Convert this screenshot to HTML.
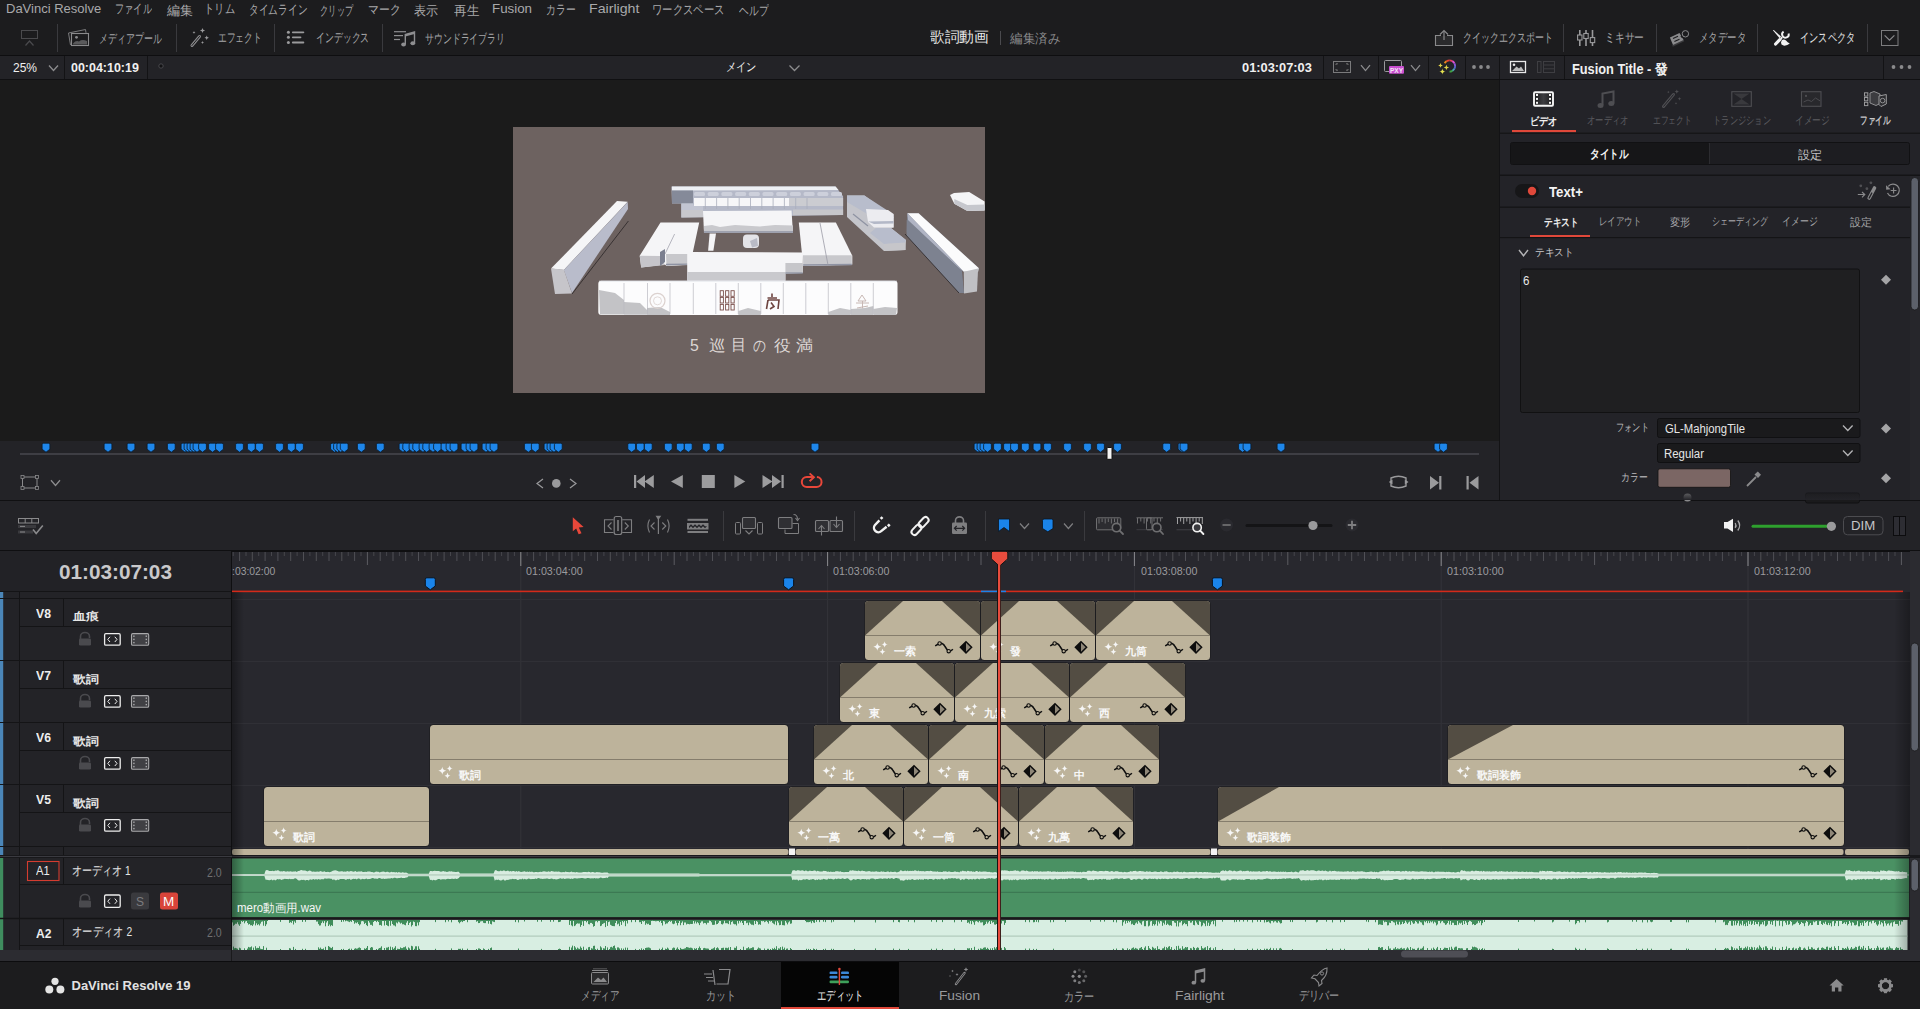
<!DOCTYPE html><html><head><meta charset="utf-8"><style>
*{margin:0;padding:0;box-sizing:border-box}
html,body{width:1920px;height:1009px;overflow:hidden;background:#1c1c1e;font-family:"Liberation Sans",sans-serif}
.a{position:absolute;display:block}
.t{position:absolute;white-space:nowrap;line-height:1;font-family:"Liberation Sans",sans-serif;transform-origin:0 0}
</style></head><body><div class="a" style="left:0px;top:0px;width:1920px;height:56px;background:#1c1c1e;"></div>
<div class="t" style="font-size:13px;color:#a9a9ab;left:6.00px;top:2.00px;">DaVinci Resolve</div>
<div class="t" style="font-size:13px;color:#a9a9ab;left:115.29px;top:2.00px;transform:scaleX(0.706);">ファイル</div>
<div class="t" style="font-size:13px;color:#a9a9ab;left:167.00px;top:4.00px;">編集</div>
<div class="t" style="font-size:13px;color:#a9a9ab;left:203.82px;top:2.00px;transform:scaleX(0.794);">トリム</div>
<div class="t" style="font-size:13px;color:#a9a9ab;left:248.51px;top:3.00px;transform:scaleX(0.747);">タイムライン</div>
<div class="t" style="font-size:13px;color:#a9a9ab;left:320.37px;top:4.00px;transform:scaleX(0.635);">クリップ</div>
<div class="t" style="font-size:13px;color:#a9a9ab;left:368.17px;top:3.00px;transform:scaleX(0.833);">マーク</div>
<div class="t" style="font-size:13px;color:#a9a9ab;left:414.00px;top:4.00px;transform:scaleX(0.923);">表示</div>
<div class="t" style="font-size:13px;color:#a9a9ab;left:454.00px;top:4.00px;transform:scaleX(0.962);">再生</div>
<div class="t" style="font-size:13px;color:#a9a9ab;left:491.97px;top:2.00px;transform:scaleX(1.026);">Fusion</div>
<div class="t" style="font-size:13px;color:#a9a9ab;left:546.24px;top:3.00px;transform:scaleX(0.757);">カラー</div>
<div class="t" style="font-size:13px;color:#a9a9ab;left:588.91px;top:2.00px;transform:scaleX(1.089);">Fairlight</div>
<div class="t" style="font-size:13px;color:#a9a9ab;left:652.20px;top:3.00px;transform:scaleX(0.798);">ワークスペース</div>
<div class="t" style="font-size:13px;color:#a9a9ab;left:739.00px;top:4.00px;transform:scaleX(0.750);">ヘルプ</div>
<div class="a" style="left:57px;top:24px;width:1px;height:28px;background:#3a3a3e;"></div>
<div class="a" style="left:176px;top:24px;width:1px;height:28px;background:#3a3a3e;"></div>
<div class="a" style="left:274px;top:24px;width:1px;height:28px;background:#3a3a3e;"></div>
<div class="a" style="left:382px;top:24px;width:1px;height:28px;background:#3a3a3e;"></div>
<div class="a" style="left:1563px;top:24px;width:1px;height:28px;background:#3a3a3e;"></div>
<div class="a" style="left:1656px;top:24px;width:1px;height:28px;background:#3a3a3e;"></div>
<div class="a" style="left:1757px;top:24px;width:1px;height:28px;background:#3a3a3e;"></div>
<div class="a" style="left:1867px;top:24px;width:1px;height:28px;background:#3a3a3e;"></div>
<div class="t" style="font-size:13px;color:#a6a6a8;left:99.31px;top:32.00px;transform:scaleX(0.689);">メディアプール</div>
<div class="t" style="font-size:13px;color:#a6a6a8;left:218.33px;top:31.00px;transform:scaleX(0.672);">エフェクト</div>
<div class="t" style="font-size:13px;color:#a6a6a8;left:316.32px;top:31.00px;transform:scaleX(0.684);">インデックス</div>
<div class="t" style="font-size:13px;color:#a6a6a8;left:425.00px;top:32.00px;transform:scaleX(0.684);">サウンドライブラリ</div>
<div class="t" style="font-size:13px;color:#a6a6a8;left:1463.31px;top:31.00px;transform:scaleX(0.690);">クイックエクスポート</div>
<div class="t" style="font-size:13px;color:#a6a6a8;left:1604.75px;top:31.00px;transform:scaleX(0.750);">ミキサー</div>
<div class="t" style="font-size:13px;color:#a6a6a8;left:1699.27px;top:31.00px;transform:scaleX(0.726);">メタデータ</div>
<div class="t" style="font-size:13px;color:#e6e6e6;left:1800.29px;top:31.00px;transform:scaleX(0.707);">インスペクタ</div>
<div class="t" style="font-size:15px;color:#e8e8e8;left:930.00px;top:29.00px;transform:scaleX(0.983);">歌詞動画</div>
<div class="a" style="left:1000px;top:31px;width:1px;height:14px;background:#4a4a4e;"></div>
<div class="t" style="font-size:13px;color:#8a8a8c;left:1010.00px;top:32.00px;transform:scaleX(0.962);">編集済み</div>
<div class="a" style="left:0px;top:55px;width:1920px;height:1px;background:#0e0e10;"></div>
<div class="a" style="left:0px;top:56px;width:1920px;height:23px;background:#232327;"></div>
<div class="a" style="left:0px;top:79px;width:1920px;height:1px;background:#101012;"></div>
<div class="a" style="left:64px;top:56px;width:1px;height:23px;background:#131315;"></div>
<div class="a" style="left:147px;top:56px;width:1px;height:23px;background:#131315;"></div>
<div class="a" style="left:1323px;top:56px;width:1px;height:23px;background:#131315;"></div>
<div class="a" style="left:1378px;top:56px;width:1px;height:23px;background:#131315;"></div>
<div class="a" style="left:1428px;top:56px;width:1px;height:23px;background:#131315;"></div>
<div class="a" style="left:1465px;top:56px;width:1px;height:23px;background:#131315;"></div>
<div class="a" style="left:1499px;top:56px;width:1px;height:23px;background:#131315;"></div>
<div class="a" style="left:1564px;top:56px;width:1px;height:23px;background:#131315;"></div>
<div class="a" style="left:1883px;top:56px;width:1px;height:23px;background:#131315;"></div>
<div class="t" style="font-size:13px;color:#f0f0f0;left:13.00px;top:61.00px;transform:scaleX(0.923);">25%</div>
<div class="t" style="font-size:13px;color:#f0f0f0;font-weight:bold;left:71.00px;top:61.00px;transform:scaleX(0.958);">00:04:10:19</div>
<div class="t" style="font-size:12px;color:#f0f0f0;left:726.15px;top:61.00px;transform:scaleX(0.853);">メイン</div>
<div class="t" style="font-size:13px;color:#f0f0f0;font-weight:bold;left:1242.00px;top:61.00px;transform:scaleX(0.986);">01:03:07:03</div>
<div class="t" style="font-size:14px;color:#f0f0f0;font-weight:bold;left:1572.09px;top:61.50px;transform:scaleX(0.913);">Fusion Title - 發</div>
<div class="a" style="left:0px;top:80px;width:1500px;height:361px;background:#1b1b1b;"></div>
<div class="a" style="left:513px;top:127px;width:472px;height:266px;background:#6d6260;"></div>
<div class="a" style="left:0px;top:441px;width:1500px;height:59px;background:#232327;"></div>
<div class="a" style="left:20px;top:453px;width:1459px;height:2px;background:#3e3e44;"></div>
<div class="a" style="left:1500px;top:80px;width:420px;height:420px;background:#232328;"></div>
<div class="a" style="left:0px;top:500px;width:1920px;height:1px;background:#101012;"></div>
<svg class="a" style="left:0;top:0" width="1920" height="1009" viewBox="0 0 1920 1009"><rect x="21.5" y="30.5" width="16" height="8" fill="none" stroke="#4a4a4d" stroke-width="1"/><polyline points="25.5,45.5 29.5,41 33.5,45.5" fill="none" stroke="#4a4a4d" stroke-width="1.2"/><path d="M68.5,33 L85.5,29.5 L86,32.8" fill="none" stroke="#7a7a7c" stroke-width="1"/><path d="M68.5,33 L70.5,45" fill="none" stroke="#7a7a7c" stroke-width="1"/><rect x="71.5" y="33.5" width="17" height="12" fill="#1c1c1e" stroke="#8a8a8c" stroke-width="1.1"/><circle cx="76.5" cy="37.3" r="1.4" fill="#8a8a8c"/><path d="M73,43.5 Q76,40 79,41.5 Q82,39 87,41 V44.5 H73Z" fill="#5a5a5c"/><line x1="192" y1="45.5" x2="199.5" y2="36.5" stroke="#8a8a8c" stroke-width="3" stroke-linecap="round"/><line x1="192" y1="45.5" x2="199.5" y2="36.5" stroke="#1c1c1e" stroke-width="1" stroke-linecap="round"/><path d="M202.5,27.9 Q202.7184,30.2816 205.1,30.5 Q202.7184,30.7184 202.5,33.1 Q202.2816,30.7184 199.9,30.5 Q202.2816,30.2816 202.5,27.9Z" fill="#9a9a9c"/><path d="M194,31.1 Q194.1176,32.3824 195.4,32.5 Q194.1176,32.6176 194,33.9 Q193.8824,32.6176 192.6,32.5 Q193.8824,32.3824 194,31.1Z" fill="#9a9a9c"/><path d="M206.7,35.5 Q206.88479999999998,37.5152 208.89999999999998,37.7 Q206.88479999999998,37.884800000000006 206.7,39.900000000000006 Q206.5152,37.884800000000006 204.5,37.7 Q206.5152,37.5152 206.7,35.5Z" fill="#9a9a9c"/><path d="M202.5,40.9 Q202.626,42.274 204.0,42.4 Q202.626,42.525999999999996 202.5,43.9 Q202.374,42.525999999999996 201.0,42.4 Q202.374,42.274 202.5,40.9Z" fill="#9a9a9c"/><circle cx="288.4" cy="32.3" r="1.5" fill="#9a9a9c"/><line x1="292.8" y1="32.3" x2="303.4" y2="32.3" stroke="#9a9a9c" stroke-width="1.8" stroke-linecap="round"/><circle cx="288.4" cy="37.3" r="1.5" fill="#9a9a9c"/><line x1="292.8" y1="37.3" x2="300.5" y2="37.3" stroke="#9a9a9c" stroke-width="1.8" stroke-linecap="round"/><circle cx="288.4" cy="42.5" r="1.5" fill="#9a9a9c"/><line x1="292.8" y1="42.5" x2="303.4" y2="42.5" stroke="#9a9a9c" stroke-width="1.8" stroke-linecap="round"/><line x1="394" y1="31.7" x2="406" y2="31.7" stroke="#8e8e90" stroke-width="1.2"/><line x1="394" y1="35.6" x2="403" y2="35.6" stroke="#8e8e90" stroke-width="1.2"/><line x1="394" y1="39.5" x2="400" y2="39.5" stroke="#8e8e90" stroke-width="1.2"/><path d="M405.3,44 V34.6 L414.5,32 V43" fill="none" stroke="#8e8e90" stroke-width="1.4"/><path d="M405.3,34.6 L414.5,32 V34 L405.3,36.6Z" fill="#8e8e90"/><ellipse cx="403.6" cy="44.4" rx="2.4" ry="2" fill="#8e8e90"/><ellipse cx="412.8" cy="43.2" rx="2.4" ry="2" fill="#8e8e90"/><rect x="1436" y="36" width="16" height="9" fill="#2a2a2c"/><line x1="1444" y1="31" x2="1444" y2="40" stroke="#8a8a8c" stroke-width="1.2"/><polyline points="1440,34.5 1444,30.5 1448,34.5" fill="none" stroke="#8a8a8c" stroke-width="1.2"/><path d="M1441,35.5 H1435.5 V45.5 H1452.5 V35.5 H1447" fill="none" stroke="#8a8a8c" stroke-width="1.1"/><line x1="1579.8" y1="30" x2="1579.8" y2="46" stroke="#9a9a9c" stroke-width="1.6"/><rect x="1577.6" y="35" width="4.4" height="5" fill="#1c1c1e" stroke="#9a9a9c" stroke-width="1.1"/><line x1="1586" y1="30" x2="1586" y2="46" stroke="#9a9a9c" stroke-width="1.6"/><rect x="1583.8" y="33.5" width="4.4" height="5" fill="#1c1c1e" stroke="#9a9a9c" stroke-width="1.1"/><line x1="1592.5" y1="30" x2="1592.5" y2="46" stroke="#9a9a9c" stroke-width="1.6"/><rect x="1590.3" y="37.6" width="4.4" height="5" fill="#1c1c1e" stroke="#9a9a9c" stroke-width="1.1"/><path d="M1672.5,46 L1684,40.5" stroke="#3a3a3c" stroke-width="1.5"/><polygon points="1669.9,37.4 1679.5,33.1 1683.6,40 1673,44.9" fill="#8a8a8c"/><path d="M1673,38.6 L1678,36.3 M1674.4,41.5 L1679.5,39.2" stroke="#1c1c1e" stroke-width="1.1"/><circle cx="1682.4" cy="36.3" r="1.6" fill="#1c1c1e"/><circle cx="1685.4" cy="33.8" r="3.2" fill="none" stroke="#8a8a8c" stroke-width="1"/><path d="M1772.9,30.2 L1773.8,30 L1781,36.6 L1779.6,38.2Z" fill="#f2f2f2"/><path d="M1780.3,38.6 L1781.6,37.4 L1782.6,38.5 L1781.3,39.7Z" fill="#f2f2f2"/><path d="M1781.8,40.2 Q1784,38.6 1786,40.6 Q1787.5,42.5 1789.8,43.6 Q1787,46 1783.5,45.6 Q1780.8,44.8 1781,42.5Z" fill="#f2f2f2"/><line x1="1775.6" y1="44" x2="1779.8" y2="39.6" stroke="#f2f2f2" stroke-width="3.2" stroke-linecap="round"/><line x1="1780.5" y1="38.6" x2="1782.5" y2="36.8" stroke="#f2f2f2" stroke-width="1.4"/><path d="M1783.6,31.6 A3.3,3.3 0 1 0 1788.6,33.4" fill="none" stroke="#f2f2f2" stroke-width="1.9"/><rect x="1881.5" y="30.5" width="16.5" height="15" fill="none" stroke="#7c7c7e" stroke-width="1"/><polyline points="1884.6,35.4 1889.5,40.2 1894.4,35.4" fill="none" stroke="#8a8a8c" stroke-width="1.2"/><polyline points="49,65.5 53.5,70.5 58,65.5" fill="none" stroke="#8c8c8e" stroke-width="1.3"/><circle cx="161" cy="66" r="2.2" fill="#121214" stroke="#48484c" stroke-width="1"/><polyline points="789.5,65.5 794.5,70.5 799.5,65.5" fill="none" stroke="#8c8c8e" stroke-width="1.3"/><rect x="1333.5" y="61.5" width="17" height="11" fill="none" stroke="#7a7a7c" stroke-width="1"/><path d="M1336,65 V63.8 H1338 M1346,63.8 H1348 V65 M1348,69 V70.2 H1346 M1338,70.2 H1336 V69" fill="none" stroke="#7a7a7c" stroke-width="0.9"/><polyline points="1361,65.2 1365.5,70.6 1370,65.2" fill="none" stroke="#8c8c8e" stroke-width="1.3"/><rect x="1384.5" y="60.5" width="17" height="11" rx="1" fill="none" stroke="#9a9a9c" stroke-width="1"/><rect x="1389" y="66" width="15" height="7.8" rx="1" fill="#c94fd0"/><text x="1396.5" y="72.6" font-size="6.5" font-weight="bold" text-anchor="middle" fill="#f4e8f6" font-family="Liberation Sans">PXY</text><polyline points="1411,65.2 1415.5,70.6 1420,65.2" fill="none" stroke="#8c8c8e" stroke-width="1.3"/><path d="M1444.65,63.20 A5.6,5.6 0 0 1 1446.70,61.15" fill="none" stroke="#e8841c" stroke-width="1.8"/><path d="M1446.70,61.15 A5.6,5.6 0 0 1 1449.50,60.40" fill="none" stroke="#e84030" stroke-width="1.8"/><path d="M1449.50,60.40 A5.6,5.6 0 0 1 1452.30,61.15" fill="none" stroke="#e04060" stroke-width="1.8"/><path d="M1452.30,61.15 A5.6,5.6 0 0 1 1454.35,63.20" fill="none" stroke="#e050d0" stroke-width="1.8"/><path d="M1454.35,63.20 A5.6,5.6 0 0 1 1455.10,66.00" fill="none" stroke="#9058d8" stroke-width="1.8"/><path d="M1455.10,66.00 A5.6,5.6 0 0 1 1454.35,68.80" fill="none" stroke="#5868d0" stroke-width="1.8"/><path d="M1454.35,68.80 A5.6,5.6 0 0 1 1452.30,70.85" fill="none" stroke="#50a8b0" stroke-width="1.8"/><path d="M1452.30,70.85 A5.6,5.6 0 0 1 1449.50,71.60" fill="none" stroke="#40a040" stroke-width="1.8"/><path d="M1440.5,63.10000000000001 Q1440.6932,65.2068 1442.8,65.4 Q1440.6932,65.59320000000001 1440.5,67.7 Q1440.3068,65.59320000000001 1438.2,65.4 Q1440.3068,65.2068 1440.5,63.10000000000001Z" fill="#e0d048"/><path d="M1446.4,64.7 Q1446.6268,67.17320000000001 1449.1000000000001,67.4 Q1446.6268,67.6268 1446.4,70.10000000000001 Q1446.1732000000002,67.6268 1443.7,67.4 Q1446.1732000000002,67.17320000000001 1446.4,64.7Z" fill="#e0d048"/><path d="M1442.4,68.4 Q1442.6604,71.2396 1445.5,71.5 Q1442.6604,71.7604 1442.4,74.6 Q1442.1396000000002,71.7604 1439.3000000000002,71.5 Q1442.1396000000002,71.2396 1442.4,68.4Z" fill="#e4e050"/><circle cx="1474" cy="67" r="1.9" fill="#8a8a8c"/><circle cx="1481" cy="67" r="1.9" fill="#8a8a8c"/><circle cx="1488" cy="67" r="1.9" fill="#8a8a8c"/><circle cx="1893.5" cy="67" r="1.9" fill="#8a8a8c"/><circle cx="1901.5" cy="67" r="1.9" fill="#8a8a8c"/><circle cx="1909.5" cy="67" r="1.9" fill="#8a8a8c"/><rect x="1510.5" y="61.5" width="15" height="11" fill="none" stroke="#e8e8e8" stroke-width="1.3"/><circle cx="1514" cy="64.8" r="1.3" fill="#e8e8e8"/><path d="M1512,71 L1516.5,66.5 L1519,68.5 L1521,66.5 L1524,71Z" fill="#bdbdbd"/><rect x="1537.5" y="61.5" width="3.5" height="11" fill="none" stroke="#3e3e42" stroke-width="1"/><rect x="1543.5" y="61.5" width="11" height="11" fill="none" stroke="#3e3e42" stroke-width="1"/><line x1="1543.5" y1="65" x2="1554.5" y2="65" stroke="#3e3e42"/><line x1="1543.5" y1="68.8" x2="1554.5" y2="68.8" stroke="#3e3e42"/></svg>
<svg class="a" style="left:0;top:0" width="1920" height="500" viewBox="0 0 1920 500"><polygon points="551,268.6 617,201 627.7,201.7 563.8,270" fill="#f5f5f7"/><polygon points="563.8,270 627.7,202 628,209 572,293" fill="#b9bccb"/><polygon points="551,268.6 563.8,269.5 572,293.5 555,294" fill="#c6c5ca"/><line x1="572" y1="294" x2="628.4" y2="221" stroke="#2a2426" stroke-width="0.8"/><polygon points="907.3,213.3 918.6,213.3 978.7,268.1 978.1,271.7 963.8,271.7 906.7,232.4" fill="#7d8290"/><polygon points="907.3,213.3 918.6,213.3 978.7,268.1 978.1,271.7 963.8,271.7 912,218" fill="#fbfbfc"/><polygon points="907.3,213.3 912,218 963.8,271.7 961,270 908,220" fill="#b0b4c4"/><polygon points="906.7,220 962,271 964,293 959,293 906.7,236" fill="#7d8290"/><polygon points="963.8,271.7 978.1,268.5 977,291.5 964,293.5" fill="#c0c0c4"/><line x1="905" y1="234" x2="959" y2="293" stroke="#2a2426" stroke-width="0.8"/><polygon points="671.4,186.5 835.5,186.5 843.1,196.3 843.1,214.9 681.3,217.6 681.3,203.4 672,203.4" fill="#b5b9c8"/><polygon points="672,186.5 835.5,186.5 838.5,190 672,190.5" fill="#eef0f4"/><polygon points="672,190.5 693,190.5 693,203.4 672,203.4" fill="#858a99"/><rect x="694.0" y="192" width="11" height="4" rx="1.5" fill="#cdd0db"/><rect x="707.7" y="192" width="11" height="4" rx="1.5" fill="#cdd0db"/><rect x="721.4" y="192" width="11" height="4" rx="1.5" fill="#cdd0db"/><rect x="735.1" y="192" width="11" height="4" rx="1.5" fill="#cdd0db"/><rect x="748.8" y="192" width="11" height="4" rx="1.5" fill="#cdd0db"/><rect x="762.5" y="192" width="11" height="4" rx="1.5" fill="#cdd0db"/><rect x="776.2" y="192" width="11" height="4" rx="1.5" fill="#cdd0db"/><rect x="789.9" y="192" width="11" height="4" rx="1.5" fill="#cdd0db"/><rect x="803.6" y="192" width="11" height="4" rx="1.5" fill="#cdd0db"/><rect x="817.3" y="192" width="11" height="4" rx="1.5" fill="#cdd0db"/><rect x="831.0" y="192" width="11" height="4" rx="1.5" fill="#cdd0db"/><polygon points="694,198 789,198 789,206 694,206" fill="#f6f6f8"/><polygon points="789,198 843.1,198 843.1,206 789,206" fill="#cbccd1"/><line x1="705.3" y1="198" x2="705.3" y2="209" stroke="#a9adbb" stroke-width="0.8"/><line x1="716.6" y1="198" x2="716.6" y2="209" stroke="#a9adbb" stroke-width="0.8"/><line x1="727.9" y1="198" x2="727.9" y2="209" stroke="#a9adbb" stroke-width="0.8"/><line x1="739.2" y1="198" x2="739.2" y2="209" stroke="#a9adbb" stroke-width="0.8"/><line x1="750.5" y1="198" x2="750.5" y2="209" stroke="#a9adbb" stroke-width="0.8"/><line x1="761.8" y1="198" x2="761.8" y2="209" stroke="#a9adbb" stroke-width="0.8"/><line x1="773.1" y1="198" x2="773.1" y2="209" stroke="#a9adbb" stroke-width="0.8"/><line x1="784.4" y1="198" x2="784.4" y2="209" stroke="#a9adbb" stroke-width="0.8"/><line x1="795.7" y1="198" x2="795.7" y2="209" stroke="#a9adbb" stroke-width="0.8"/><line x1="807.0" y1="198" x2="807.0" y2="209" stroke="#a9adbb" stroke-width="0.8"/><polygon points="681.3,203.4 693,203.4 694,206 703,206 703,210 681.3,210" fill="#c2c5d2"/><polygon points="681.3,210 703,210 703,217.3 681.3,217.6" fill="#c8c8cc"/><polygon points="793,209.5 843.1,209.5 843.1,214.9 793,215.3" fill="#c6c6ca"/><polygon points="703,211 791.5,210.5 793,232.9 704,232.9" fill="#f5f5f7"/><polygon points="704,226 712,225 720,227 735,225 760,226.5 775,225 793,225.5 793,232.9 704,232.9" fill="#c9c9cd"/><line x1="704" y1="232" x2="793" y2="232" stroke="#8f93a3" stroke-width="1.4"/><polygon points="660.5,222.4 699.2,222.4 690.2,264.6 666.5,266 665,264.6 641.2,267.6 639.7,255.7" fill="#f5f5f7"/><polygon points="639.7,255.7 660,256 665,265 641.2,267.6" fill="#c6c5ca"/><polygon points="666,254 689.4,254 689.4,265 666.5,266" fill="#c8c8cc"/><line x1="666" y1="264.5" x2="689.4" y2="264.2" stroke="#8f93a3" stroke-width="1.3"/><line x1="674.6" y1="234" x2="665" y2="254" stroke="#9a9aa6" stroke-width="0.7"/><polygon points="660,252 665,249 665,262 660,266" fill="#7c8090"/><polygon points="687.2,252 802.8,252.5 802.8,273 785.4,273.5 785.4,280.8 687.2,280.8" fill="#f5f5f7"/><polygon points="687.2,272 785.4,272 785.4,280.8 687.2,280.8" fill="#c9c9cd"/><polygon points="785.4,263 802.8,263 802.8,273 785.4,273.5" fill="#c6c6ca"/><line x1="785.4" y1="273" x2="802.8" y2="273" stroke="#8f93a3" stroke-width="1.3"/><polygon points="798.8,222.4 835.9,222.4 852.3,255.7 852.3,264.6 803.2,266" fill="#f5f5f7"/><polygon points="803,255.2 851.8,255.2 851.8,265 803.2,266" fill="#c8c8cc"/><line x1="803.2" y1="265" x2="851.8" y2="264.5" stroke="#8f93a3" stroke-width="1.3"/><line x1="820" y1="223" x2="828" y2="265" stroke="#9a9aa6" stroke-width="0.8"/><polygon points="847,195.5 864.4,195.5 893.6,216.9 893.6,227.6 891,228 906,240 905.5,250 884,251 847,217" fill="#c4c5cb"/><polygon points="847,195.5 864.4,195.5 893.6,214.5 893.6,218 874,218 847,202" fill="#b8bdcc"/><polygon points="866,209 888,210 893.6,214 893.6,227.6 874,227.5 868,222" fill="#ececf0"/><polygon points="868,221.5 893.6,221 893.6,223.5 874,224" fill="#b3b8c7"/><polygon points="876,228 891,228 906,240 905,243 884,244 870,233" fill="#b8bdcc"/><polygon points="884,244 905,242.5 905.5,250 884,251" fill="#c6c6ca"/><line x1="853" y1="214" x2="868" y2="226" stroke="#8e93a2" stroke-width="1.2"/><polygon points="950,195 954,193 969.2,192 984.6,201.4 984.6,210.4 967.4,211 954.3,203.8" fill="#f4f4f6"/><polygon points="954.3,199 967.4,205 984.6,204.5 984.6,210.4 967.4,211 954.3,203.8" fill="#c6c7cd"/><rect x="743" y="234.5" width="16" height="13.5" rx="4" fill="#e4e4e8"/><path d="M750,241 L757,238 L758,246 L752,247.5Z" fill="#b9bbc6"/><polygon points="709.6,233.4 716,233.4 713.4,250.8 708.1,250.8" fill="#f5f5f7"/><rect x="598.3" y="280.8" width="299.2" height="34.2" rx="3" fill="#fcfcfd"/><polygon points="599,290 615,293 624,300 624,314.5 600,314.5" fill="#c3c3c6"/><polygon points="624,302 640,303 647,310 647,314.8 624,314.8" fill="#c3c3c6"/><polygon points="647,308 660,307 670,312 670,315 647,315" fill="#c3c3c6"/><polygon points="738.3,311 748,308 760.8,311 760.8,315 738.3,315" fill="#c3c3c6"/><polygon points="828.3,312 840,308 850.8,310 850.8,315 828.3,315" fill="#c3c3c6"/><polygon points="850.8,309 865,308 873.3,306 873.3,315 850.8,315" fill="#c3c3c6"/><polygon points="873.3,309 885,307 897,308 896,315 873.3,315" fill="#c3c3c6"/><line x1="624" y1="283" x2="624" y2="314" stroke="#b9b9c0" stroke-width="0.7"/><line x1="647.5" y1="283" x2="647.5" y2="314" stroke="#b9b9c0" stroke-width="0.7"/><line x1="670" y1="283" x2="670" y2="314" stroke="#b9b9c0" stroke-width="0.7"/><line x1="693.3" y1="283" x2="693.3" y2="314" stroke="#b9b9c0" stroke-width="0.7"/><line x1="715.8" y1="283" x2="715.8" y2="314" stroke="#b9b9c0" stroke-width="0.7"/><line x1="738.3" y1="283" x2="738.3" y2="314" stroke="#b9b9c0" stroke-width="0.7"/><line x1="760.8" y1="283" x2="760.8" y2="314" stroke="#b9b9c0" stroke-width="0.7"/><line x1="783.3" y1="283" x2="783.3" y2="314" stroke="#b9b9c0" stroke-width="0.7"/><line x1="805.8" y1="283" x2="805.8" y2="314" stroke="#b9b9c0" stroke-width="0.7"/><line x1="828.3" y1="283" x2="828.3" y2="314" stroke="#b9b9c0" stroke-width="0.7"/><line x1="850.8" y1="283" x2="850.8" y2="314" stroke="#b9b9c0" stroke-width="0.7"/><line x1="873.3" y1="283" x2="873.3" y2="314" stroke="#b9b9c0" stroke-width="0.7"/><line x1="599" y1="281.2" x2="897" y2="281.2" stroke="#e1e3ea" stroke-width="0.8"/><circle cx="657.5" cy="300.8" r="7.5" fill="none" stroke="#dcd2cf" stroke-width="1.2"/><circle cx="657.5" cy="300.8" r="4" fill="none" stroke="#e2dad8" stroke-width="1"/><rect x="720.1999999999999" y="290.7" width="3.2" height="5.6" fill="none" stroke="#7a4e4a" stroke-width="0.9"/><rect x="720.1999999999999" y="297.4" width="3.2" height="5.6" fill="none" stroke="#7a4e4a" stroke-width="0.9"/><rect x="720.1999999999999" y="304.4" width="3.2" height="5.6" fill="none" stroke="#7a4e4a" stroke-width="0.9"/><rect x="725.6" y="290.7" width="3.2" height="5.6" fill="none" stroke="#7a4e4a" stroke-width="0.9"/><rect x="725.6" y="297.4" width="3.2" height="5.6" fill="none" stroke="#7a4e4a" stroke-width="0.9"/><rect x="725.6" y="304.4" width="3.2" height="5.6" fill="none" stroke="#7a4e4a" stroke-width="0.9"/><rect x="731.0" y="290.7" width="3.2" height="5.6" fill="none" stroke="#7a4e4a" stroke-width="0.9"/><rect x="731.0" y="297.4" width="3.2" height="5.6" fill="none" stroke="#7a4e4a" stroke-width="0.9"/><rect x="731.0" y="304.4" width="3.2" height="5.6" fill="none" stroke="#7a4e4a" stroke-width="0.9"/><path d="M772,293.5 V297 M767.5,298 H777 M768,300 L766.5,309 M768,300 H779 L778,309 M771,302.5 L774,306.5 L770,309" fill="none" stroke="#6e4440" stroke-width="1.6"/><path d="M862,295 L858,301 H866 Z M856,303 H869 M862.5,301 V308.3 M857,308 L868,306" fill="none" stroke="#c8b8b4" stroke-width="1"/></svg>
<div class="t" style="font-size:16px;color:#dcd6d4;left:689.51px;top:337.60px;transform:scaleX(0.987);font-family:"Liberation Serif",serif;">5</div>
<div class="t" style="font-size:16px;color:#dcd6d4;left:708.50px;top:337.80px;transform:scaleX(1.040);font-family:"Liberation Serif",serif;">巡</div>
<div class="t" style="font-size:16px;color:#dcd6d4;left:730.77px;top:337.00px;transform:scaleX(0.964);font-family:"Liberation Serif",serif;">目</div>
<div class="t" style="font-size:16px;color:#dcd6d4;left:753.40px;top:337.80px;transform:scaleX(0.806);font-family:"Liberation Serif",serif;">の</div>
<div class="t" style="font-size:16px;color:#dcd6d4;left:774.10px;top:337.50px;transform:scaleX(1.047);font-family:"Liberation Serif",serif;">役</div>
<div class="t" style="font-size:16px;color:#dcd6d4;left:796.00px;top:337.50px;transform:scaleX(1.067);font-family:"Liberation Serif",serif;">満</div>
<svg class="a" style="left:0;top:0" width="1920" height="1009" viewBox="0 0 1920 1009"><path d="M43.6,443.2 H48.4 Q49.9,443.2 49.9,444.7 V449.2 L46,452.2 L42.1,449.2 V444.7 Q42.1,443.2 43.6,443.2Z" fill="#1e86ea" stroke="#0b1a2a" stroke-width="0.8"/><path d="M105.6,443.2 H110.4 Q111.9,443.2 111.9,444.7 V449.2 L108,452.2 L104.1,449.2 V444.7 Q104.1,443.2 105.6,443.2Z" fill="#1e86ea" stroke="#0b1a2a" stroke-width="0.8"/><path d="M128.6,443.2 H133.4 Q134.9,443.2 134.9,444.7 V449.2 L131,452.2 L127.1,449.2 V444.7 Q127.1,443.2 128.6,443.2Z" fill="#1e86ea" stroke="#0b1a2a" stroke-width="0.8"/><path d="M148.6,443.2 H153.4 Q154.9,443.2 154.9,444.7 V449.2 L151,452.2 L147.1,449.2 V444.7 Q147.1,443.2 148.6,443.2Z" fill="#1e86ea" stroke="#0b1a2a" stroke-width="0.8"/><path d="M168.9,443.2 H173.70000000000002 Q175.20000000000002,443.2 175.20000000000002,444.7 V449.2 L171.3,452.2 L167.4,449.2 V444.7 Q167.4,443.2 168.9,443.2Z" fill="#1e86ea" stroke="#0b1a2a" stroke-width="0.8"/><path d="M182.6,443.2 H187.4 Q188.9,443.2 188.9,444.7 V449.2 L185,452.2 L181.1,449.2 V444.7 Q181.1,443.2 182.6,443.2Z" fill="#1e86ea" stroke="#0b1a2a" stroke-width="0.8"/><path d="M185.6,443.2 H190.4 Q191.9,443.2 191.9,444.7 V449.2 L188,452.2 L184.1,449.2 V444.7 Q184.1,443.2 185.6,443.2Z" fill="#1e86ea" stroke="#0b1a2a" stroke-width="0.8"/><path d="M188.6,443.2 H193.4 Q194.9,443.2 194.9,444.7 V449.2 L191,452.2 L187.1,449.2 V444.7 Q187.1,443.2 188.6,443.2Z" fill="#1e86ea" stroke="#0b1a2a" stroke-width="0.8"/><path d="M191.6,443.2 H196.4 Q197.9,443.2 197.9,444.7 V449.2 L194,452.2 L190.1,449.2 V444.7 Q190.1,443.2 191.6,443.2Z" fill="#1e86ea" stroke="#0b1a2a" stroke-width="0.8"/><path d="M194.6,443.2 H199.4 Q200.9,443.2 200.9,444.7 V449.2 L197,452.2 L193.1,449.2 V444.7 Q193.1,443.2 194.6,443.2Z" fill="#1e86ea" stroke="#0b1a2a" stroke-width="0.8"/><path d="M200.1,443.2 H204.9 Q206.4,443.2 206.4,444.7 V449.2 L202.5,452.2 L198.6,449.2 V444.7 Q198.6,443.2 200.1,443.2Z" fill="#1e86ea" stroke="#0b1a2a" stroke-width="0.8"/><path d="M210.1,443.2 H214.9 Q216.4,443.2 216.4,444.7 V449.2 L212.5,452.2 L208.6,449.2 V444.7 Q208.6,443.2 210.1,443.2Z" fill="#1e86ea" stroke="#0b1a2a" stroke-width="0.8"/><path d="M217.1,443.2 H221.9 Q223.4,443.2 223.4,444.7 V449.2 L219.5,452.2 L215.6,449.2 V444.7 Q215.6,443.2 217.1,443.2Z" fill="#1e86ea" stroke="#0b1a2a" stroke-width="0.8"/><path d="M237.1,443.2 H241.9 Q243.4,443.2 243.4,444.7 V449.2 L239.5,452.2 L235.6,449.2 V444.7 Q235.6,443.2 237.1,443.2Z" fill="#1e86ea" stroke="#0b1a2a" stroke-width="0.8"/><path d="M248.9,443.2 H253.70000000000002 Q255.20000000000002,443.2 255.20000000000002,444.7 V449.2 L251.3,452.2 L247.4,449.2 V444.7 Q247.4,443.2 248.9,443.2Z" fill="#1e86ea" stroke="#0b1a2a" stroke-width="0.8"/><path d="M257.1,443.2 H261.9 Q263.4,443.2 263.4,444.7 V449.2 L259.5,452.2 L255.6,449.2 V444.7 Q255.6,443.2 257.1,443.2Z" fill="#1e86ea" stroke="#0b1a2a" stroke-width="0.8"/><path d="M277.1,443.2 H281.9 Q283.4,443.2 283.4,444.7 V449.2 L279.5,452.2 L275.6,449.2 V444.7 Q275.6,443.2 277.1,443.2Z" fill="#1e86ea" stroke="#0b1a2a" stroke-width="0.8"/><path d="M288.90000000000003,443.2 H293.7 Q295.2,443.2 295.2,444.7 V449.2 L291.3,452.2 L287.40000000000003,449.2 V444.7 Q287.40000000000003,443.2 288.90000000000003,443.2Z" fill="#1e86ea" stroke="#0b1a2a" stroke-width="0.8"/><path d="M297.1,443.2 H301.9 Q303.4,443.2 303.4,444.7 V449.2 L299.5,452.2 L295.6,449.2 V444.7 Q295.6,443.2 297.1,443.2Z" fill="#1e86ea" stroke="#0b1a2a" stroke-width="0.8"/><path d="M332.1,443.2 H336.9 Q338.4,443.2 338.4,444.7 V449.2 L334.5,452.2 L330.6,449.2 V444.7 Q330.6,443.2 332.1,443.2Z" fill="#1e86ea" stroke="#0b1a2a" stroke-width="0.8"/><path d="M335.1,443.2 H339.9 Q341.4,443.2 341.4,444.7 V449.2 L337.5,452.2 L333.6,449.2 V444.7 Q333.6,443.2 335.1,443.2Z" fill="#1e86ea" stroke="#0b1a2a" stroke-width="0.8"/><path d="M338.40000000000003,443.2 H343.2 Q344.7,443.2 344.7,444.7 V449.2 L340.8,452.2 L336.90000000000003,449.2 V444.7 Q336.90000000000003,443.2 338.40000000000003,443.2Z" fill="#1e86ea" stroke="#0b1a2a" stroke-width="0.8"/><path d="M341.8,443.2 H346.59999999999997 Q348.09999999999997,443.2 348.09999999999997,444.7 V449.2 L344.2,452.2 L340.3,449.2 V444.7 Q340.3,443.2 341.8,443.2Z" fill="#1e86ea" stroke="#0b1a2a" stroke-width="0.8"/><path d="M358.90000000000003,443.2 H363.7 Q365.2,443.2 365.2,444.7 V449.2 L361.3,452.2 L357.40000000000003,449.2 V444.7 Q357.40000000000003,443.2 358.90000000000003,443.2Z" fill="#1e86ea" stroke="#0b1a2a" stroke-width="0.8"/><path d="M377.90000000000003,443.2 H382.7 Q384.2,443.2 384.2,444.7 V449.2 L380.3,452.2 L376.40000000000003,449.2 V444.7 Q376.40000000000003,443.2 377.90000000000003,443.2Z" fill="#1e86ea" stroke="#0b1a2a" stroke-width="0.8"/><path d="M400.6,443.2 H405.4 Q406.9,443.2 406.9,444.7 V449.2 L403,452.2 L399.1,449.2 V444.7 Q399.1,443.2 400.6,443.2Z" fill="#1e86ea" stroke="#0b1a2a" stroke-width="0.8"/><path d="M404.3,443.2 H409.09999999999997 Q410.59999999999997,443.2 410.59999999999997,444.7 V449.2 L406.7,452.2 L402.8,449.2 V444.7 Q402.8,443.2 404.3,443.2Z" fill="#1e86ea" stroke="#0b1a2a" stroke-width="0.8"/><path d="M410.6,443.2 H415.4 Q416.9,443.2 416.9,444.7 V449.2 L413,452.2 L409.1,449.2 V444.7 Q409.1,443.2 410.6,443.2Z" fill="#1e86ea" stroke="#0b1a2a" stroke-width="0.8"/><path d="M414.3,443.2 H419.09999999999997 Q420.59999999999997,443.2 420.59999999999997,444.7 V449.2 L416.7,452.2 L412.8,449.2 V444.7 Q412.8,443.2 414.3,443.2Z" fill="#1e86ea" stroke="#0b1a2a" stroke-width="0.8"/><path d="M420.6,443.2 H425.4 Q426.9,443.2 426.9,444.7 V449.2 L423,452.2 L419.1,449.2 V444.7 Q419.1,443.2 420.6,443.2Z" fill="#1e86ea" stroke="#0b1a2a" stroke-width="0.8"/><path d="M424.3,443.2 H429.09999999999997 Q430.59999999999997,443.2 430.59999999999997,444.7 V449.2 L426.7,452.2 L422.8,449.2 V444.7 Q422.8,443.2 424.3,443.2Z" fill="#1e86ea" stroke="#0b1a2a" stroke-width="0.8"/><path d="M430.6,443.2 H435.4 Q436.9,443.2 436.9,444.7 V449.2 L433,452.2 L429.1,449.2 V444.7 Q429.1,443.2 430.6,443.2Z" fill="#1e86ea" stroke="#0b1a2a" stroke-width="0.8"/><path d="M435.1,443.2 H439.9 Q441.4,443.2 441.4,444.7 V449.2 L437.5,452.2 L433.6,449.2 V444.7 Q433.6,443.2 435.1,443.2Z" fill="#1e86ea" stroke="#0b1a2a" stroke-width="0.8"/><path d="M442.6,443.2 H447.4 Q448.9,443.2 448.9,444.7 V449.2 L445,452.2 L441.1,449.2 V444.7 Q441.1,443.2 442.6,443.2Z" fill="#1e86ea" stroke="#0b1a2a" stroke-width="0.8"/><path d="M447.6,443.2 H452.4 Q453.9,443.2 453.9,444.7 V449.2 L450,452.2 L446.1,449.2 V444.7 Q446.1,443.2 447.6,443.2Z" fill="#1e86ea" stroke="#0b1a2a" stroke-width="0.8"/><path d="M451.6,443.2 H456.4 Q457.9,443.2 457.9,444.7 V449.2 L454,452.2 L450.1,449.2 V444.7 Q450.1,443.2 451.6,443.2Z" fill="#1e86ea" stroke="#0b1a2a" stroke-width="0.8"/><path d="M462.6,443.2 H467.4 Q468.9,443.2 468.9,444.7 V449.2 L465,452.2 L461.1,449.2 V444.7 Q461.1,443.2 462.6,443.2Z" fill="#1e86ea" stroke="#0b1a2a" stroke-width="0.8"/><path d="M467.6,443.2 H472.4 Q473.9,443.2 473.9,444.7 V449.2 L470,452.2 L466.1,449.2 V444.7 Q466.1,443.2 467.6,443.2Z" fill="#1e86ea" stroke="#0b1a2a" stroke-width="0.8"/><path d="M471.6,443.2 H476.4 Q477.9,443.2 477.9,444.7 V449.2 L474,452.2 L470.1,449.2 V444.7 Q470.1,443.2 471.6,443.2Z" fill="#1e86ea" stroke="#0b1a2a" stroke-width="0.8"/><path d="M483.6,443.2 H488.4 Q489.9,443.2 489.9,444.7 V449.2 L486,452.2 L482.1,449.2 V444.7 Q482.1,443.2 483.6,443.2Z" fill="#1e86ea" stroke="#0b1a2a" stroke-width="0.8"/><path d="M487.6,443.2 H492.4 Q493.9,443.2 493.9,444.7 V449.2 L490,452.2 L486.1,449.2 V444.7 Q486.1,443.2 487.6,443.2Z" fill="#1e86ea" stroke="#0b1a2a" stroke-width="0.8"/><path d="M491.6,443.2 H496.4 Q497.9,443.2 497.9,444.7 V449.2 L494,452.2 L490.1,449.2 V444.7 Q490.1,443.2 491.6,443.2Z" fill="#1e86ea" stroke="#0b1a2a" stroke-width="0.8"/><path d="M525.9,443.2 H530.6999999999999 Q532.1999999999999,443.2 532.1999999999999,444.7 V449.2 L528.3,452.2 L524.4,449.2 V444.7 Q524.4,443.2 525.9,443.2Z" fill="#1e86ea" stroke="#0b1a2a" stroke-width="0.8"/><path d="M532.9,443.2 H537.6999999999999 Q539.1999999999999,443.2 539.1999999999999,444.7 V449.2 L535.3,452.2 L531.4,449.2 V444.7 Q531.4,443.2 532.9,443.2Z" fill="#1e86ea" stroke="#0b1a2a" stroke-width="0.8"/><path d="M545.6,443.2 H550.4 Q551.9,443.2 551.9,444.7 V449.2 L548,452.2 L544.1,449.2 V444.7 Q544.1,443.2 545.6,443.2Z" fill="#1e86ea" stroke="#0b1a2a" stroke-width="0.8"/><path d="M548.6,443.2 H553.4 Q554.9,443.2 554.9,444.7 V449.2 L551,452.2 L547.1,449.2 V444.7 Q547.1,443.2 548.6,443.2Z" fill="#1e86ea" stroke="#0b1a2a" stroke-width="0.8"/><path d="M551.6,443.2 H556.4 Q557.9,443.2 557.9,444.7 V449.2 L554,452.2 L550.1,449.2 V444.7 Q550.1,443.2 551.6,443.2Z" fill="#1e86ea" stroke="#0b1a2a" stroke-width="0.8"/><path d="M555.9,443.2 H560.6999999999999 Q562.1999999999999,443.2 562.1999999999999,444.7 V449.2 L558.3,452.2 L554.4,449.2 V444.7 Q554.4,443.2 555.9,443.2Z" fill="#1e86ea" stroke="#0b1a2a" stroke-width="0.8"/><path d="M629.3000000000001,443.2 H634.1 Q635.6,443.2 635.6,444.7 V449.2 L631.7,452.2 L627.8000000000001,449.2 V444.7 Q627.8000000000001,443.2 629.3000000000001,443.2Z" fill="#1e86ea" stroke="#0b1a2a" stroke-width="0.8"/><path d="M637.9,443.2 H642.6999999999999 Q644.1999999999999,443.2 644.1999999999999,444.7 V449.2 L640.3,452.2 L636.4,449.2 V444.7 Q636.4,443.2 637.9,443.2Z" fill="#1e86ea" stroke="#0b1a2a" stroke-width="0.8"/><path d="M645.9,443.2 H650.6999999999999 Q652.1999999999999,443.2 652.1999999999999,444.7 V449.2 L648.3,452.2 L644.4,449.2 V444.7 Q644.4,443.2 645.9,443.2Z" fill="#1e86ea" stroke="#0b1a2a" stroke-width="0.8"/><path d="M665.9,443.2 H670.6999999999999 Q672.1999999999999,443.2 672.1999999999999,444.7 V449.2 L668.3,452.2 L664.4,449.2 V444.7 Q664.4,443.2 665.9,443.2Z" fill="#1e86ea" stroke="#0b1a2a" stroke-width="0.8"/><path d="M677.9,443.2 H682.6999999999999 Q684.1999999999999,443.2 684.1999999999999,444.7 V449.2 L680.3,452.2 L676.4,449.2 V444.7 Q676.4,443.2 677.9,443.2Z" fill="#1e86ea" stroke="#0b1a2a" stroke-width="0.8"/><path d="M685.9,443.2 H690.6999999999999 Q692.1999999999999,443.2 692.1999999999999,444.7 V449.2 L688.3,452.2 L684.4,449.2 V444.7 Q684.4,443.2 685.9,443.2Z" fill="#1e86ea" stroke="#0b1a2a" stroke-width="0.8"/><path d="M703.9,443.2 H708.6999999999999 Q710.1999999999999,443.2 710.1999999999999,444.7 V449.2 L706.3,452.2 L702.4,449.2 V444.7 Q702.4,443.2 703.9,443.2Z" fill="#1e86ea" stroke="#0b1a2a" stroke-width="0.8"/><path d="M717.9,443.2 H722.6999999999999 Q724.1999999999999,443.2 724.1999999999999,444.7 V449.2 L720.3,452.2 L716.4,449.2 V444.7 Q716.4,443.2 717.9,443.2Z" fill="#1e86ea" stroke="#0b1a2a" stroke-width="0.8"/><path d="M812.6,443.2 H817.4 Q818.9,443.2 818.9,444.7 V449.2 L815,452.2 L811.1,449.2 V444.7 Q811.1,443.2 812.6,443.2Z" fill="#1e86ea" stroke="#0b1a2a" stroke-width="0.8"/><path d="M975.6,443.2 H980.4 Q981.9,443.2 981.9,444.7 V449.2 L978,452.2 L974.1,449.2 V444.7 Q974.1,443.2 975.6,443.2Z" fill="#1e86ea" stroke="#0b1a2a" stroke-width="0.8"/><path d="M978.6,443.2 H983.4 Q984.9,443.2 984.9,444.7 V449.2 L981,452.2 L977.1,449.2 V444.7 Q977.1,443.2 978.6,443.2Z" fill="#1e86ea" stroke="#0b1a2a" stroke-width="0.8"/><path d="M981.6,443.2 H986.4 Q987.9,443.2 987.9,444.7 V449.2 L984,452.2 L980.1,449.2 V444.7 Q980.1,443.2 981.6,443.2Z" fill="#1e86ea" stroke="#0b1a2a" stroke-width="0.8"/><path d="M985.1,443.2 H989.9 Q991.4,443.2 991.4,444.7 V449.2 L987.5,452.2 L983.6,449.2 V444.7 Q983.6,443.2 985.1,443.2Z" fill="#1e86ea" stroke="#0b1a2a" stroke-width="0.8"/><path d="M995.1,443.2 H999.9 Q1001.4,443.2 1001.4,444.7 V449.2 L997.5,452.2 L993.6,449.2 V444.7 Q993.6,443.2 995.1,443.2Z" fill="#1e86ea" stroke="#0b1a2a" stroke-width="0.8"/><path d="M1005.1,443.2 H1009.9 Q1011.4,443.2 1011.4,444.7 V449.2 L1007.5,452.2 L1003.6,449.2 V444.7 Q1003.6,443.2 1005.1,443.2Z" fill="#1e86ea" stroke="#0b1a2a" stroke-width="0.8"/><path d="M1012.1,443.2 H1016.9 Q1018.4,443.2 1018.4,444.7 V449.2 L1014.5,452.2 L1010.6,449.2 V444.7 Q1010.6,443.2 1012.1,443.2Z" fill="#1e86ea" stroke="#0b1a2a" stroke-width="0.8"/><path d="M1022.9,443.2 H1027.7 Q1029.2,443.2 1029.2,444.7 V449.2 L1025.3,452.2 L1021.4,449.2 V444.7 Q1021.4,443.2 1022.9,443.2Z" fill="#1e86ea" stroke="#0b1a2a" stroke-width="0.8"/><path d="M1034.6,443.2 H1039.4 Q1040.9,443.2 1040.9,444.7 V449.2 L1037,452.2 L1033.1,449.2 V444.7 Q1033.1,443.2 1034.6,443.2Z" fill="#1e86ea" stroke="#0b1a2a" stroke-width="0.8"/><path d="M1045.1,443.2 H1049.9 Q1051.4,443.2 1051.4,444.7 V449.2 L1047.5,452.2 L1043.6,449.2 V444.7 Q1043.6,443.2 1045.1,443.2Z" fill="#1e86ea" stroke="#0b1a2a" stroke-width="0.8"/><path d="M1065.1,443.2 H1069.9 Q1071.4,443.2 1071.4,444.7 V449.2 L1067.5,452.2 L1063.6,449.2 V444.7 Q1063.6,443.2 1065.1,443.2Z" fill="#1e86ea" stroke="#0b1a2a" stroke-width="0.8"/><path d="M1085.1,443.2 H1089.9 Q1091.4,443.2 1091.4,444.7 V449.2 L1087.5,452.2 L1083.6,449.2 V444.7 Q1083.6,443.2 1085.1,443.2Z" fill="#1e86ea" stroke="#0b1a2a" stroke-width="0.8"/><path d="M1098.1,443.2 H1102.9 Q1104.4,443.2 1104.4,444.7 V449.2 L1100.5,452.2 L1096.6,449.2 V444.7 Q1096.6,443.2 1098.1,443.2Z" fill="#1e86ea" stroke="#0b1a2a" stroke-width="0.8"/><path d="M1115.1,443.2 H1119.9 Q1121.4,443.2 1121.4,444.7 V449.2 L1117.5,452.2 L1113.6,449.2 V444.7 Q1113.6,443.2 1115.1,443.2Z" fill="#1e86ea" stroke="#0b1a2a" stroke-width="0.8"/><path d="M1164.3,443.2 H1169.1000000000001 Q1170.6000000000001,443.2 1170.6000000000001,444.7 V449.2 L1166.7,452.2 L1162.8,449.2 V444.7 Q1162.8,443.2 1164.3,443.2Z" fill="#1e86ea" stroke="#0b1a2a" stroke-width="0.8"/><path d="M1179.6,443.2 H1184.4 Q1185.9,443.2 1185.9,444.7 V449.2 L1182,452.2 L1178.1,449.2 V444.7 Q1178.1,443.2 1179.6,443.2Z" fill="#1e86ea" stroke="#0b1a2a" stroke-width="0.8"/><path d="M1181.6,443.2 H1186.4 Q1187.9,443.2 1187.9,444.7 V449.2 L1184,452.2 L1180.1,449.2 V444.7 Q1180.1,443.2 1181.6,443.2Z" fill="#1e86ea" stroke="#0b1a2a" stroke-width="0.8"/><path d="M1240.1,443.2 H1244.9 Q1246.4,443.2 1246.4,444.7 V449.2 L1242.5,452.2 L1238.6,449.2 V444.7 Q1238.6,443.2 1240.1,443.2Z" fill="#1e86ea" stroke="#0b1a2a" stroke-width="0.8"/><path d="M1244.6,443.2 H1249.4 Q1250.9,443.2 1250.9,444.7 V449.2 L1247,452.2 L1243.1,449.2 V444.7 Q1243.1,443.2 1244.6,443.2Z" fill="#1e86ea" stroke="#0b1a2a" stroke-width="0.8"/><path d="M1278.6,443.2 H1283.4 Q1284.9,443.2 1284.9,444.7 V449.2 L1281,452.2 L1277.1,449.2 V444.7 Q1277.1,443.2 1278.6,443.2Z" fill="#1e86ea" stroke="#0b1a2a" stroke-width="0.8"/><path d="M1435.6,443.2 H1440.4 Q1441.9,443.2 1441.9,444.7 V449.2 L1438,452.2 L1434.1,449.2 V444.7 Q1434.1,443.2 1435.6,443.2Z" fill="#1e86ea" stroke="#0b1a2a" stroke-width="0.8"/><path d="M1441.1,443.2 H1445.9 Q1447.4,443.2 1447.4,444.7 V449.2 L1443.5,452.2 L1439.6,449.2 V444.7 Q1439.6,443.2 1441.1,443.2Z" fill="#1e86ea" stroke="#0b1a2a" stroke-width="0.8"/><rect x="1107" y="447.5" width="5" height="11.8" rx="0.8" fill="#f4f4f4" stroke="#101010" stroke-width="1"/><rect x="634" y="475" width="2.2" height="13" fill="#9c9c9e"/><path d="M636.5,481.5 L645,475 V488Z M644.5,481.5 L653.8,475 V488Z" fill="#9c9c9e"/><path d="M671,481.5 L682.8,475 V488Z" fill="#9c9c9e"/><rect x="701.8" y="475" width="13" height="13" fill="#9c9c9e"/><path d="M745.3,481.5 L734.4,475 V488Z" fill="#9c9c9e"/><rect x="781.5" y="475" width="2.2" height="13" fill="#9c9c9e"/><path d="M781,481.5 L772,475 V488Z M772.5,481.5 L762.5,475 V488Z" fill="#9c9c9e"/><path d="M816.9,477 A5,5 0 0 1 816.2,487 H806.8 A5,5 0 0 1 806.8,477 H813.6" fill="none" stroke="#e8473a" stroke-width="2"/><polyline points="809.6,473.4 813.9,477.2 809.6,481.2" fill="none" stroke="#e8473a" stroke-width="1.9"/><rect x="22.5" y="477" width="14.5" height="11" fill="none" stroke="#8a8a8c" stroke-width="1"/><rect x="21.0" y="475.5" width="3" height="3" fill="#232327" stroke="#8a8a8c" stroke-width="0.8"/><rect x="35.5" y="475.5" width="3" height="3" fill="#232327" stroke="#8a8a8c" stroke-width="0.8"/><rect x="21.0" y="486.5" width="3" height="3" fill="#232327" stroke="#8a8a8c" stroke-width="0.8"/><rect x="35.5" y="486.5" width="3" height="3" fill="#232327" stroke="#8a8a8c" stroke-width="0.8"/><polyline points="51,480.3 55.5,485.5 60,480.3" fill="none" stroke="#8c8c8e" stroke-width="1.3"/><polyline points="543,479 537,483.5 543,488" fill="none" stroke="#9a9a9c" stroke-width="1.2"/><circle cx="556.3" cy="483.4" r="4.3" fill="#9a9a9c"/><polyline points="570,479 576,483.5 570,488" fill="none" stroke="#9a9a9c" stroke-width="1.2"/><path d="M1391,478 Q1398.5,474.5 1406,478 V486 Q1398.5,489.5 1391,486Z" fill="none" stroke="#9a9a9c" stroke-width="1.4"/><path d="M1388.8,482 L1392.5,479.5 V484.5Z M1408.5,482 L1404.8,479.5 V484.5Z" fill="#9a9a9c"/><path d="M1430,476 L1439,482.7 L1430,489.5Z" fill="#9a9a9c"/><rect x="1439.2" y="476" width="2.2" height="13.5" fill="#9a9a9c"/><path d="M1478.5,476 L1469.5,482.7 L1478.5,489.5Z" fill="#9a9a9c"/><rect x="1466.5" y="476" width="2.2" height="13.5" fill="#9a9a9c"/></svg>
<div class="a" style="left:0px;top:501px;width:1920px;height:50px;background:#232327;"></div>
<div class="a" style="left:0px;top:550px;width:1920px;height:1px;background:#0f0f11;"></div>
<div class="a" style="left:723px;top:511px;width:1px;height:30px;background:#3a3a3e;"></div>
<div class="a" style="left:854px;top:511px;width:1px;height:30px;background:#3a3a3e;"></div>
<div class="a" style="left:985px;top:511px;width:1px;height:30px;background:#3a3a3e;"></div>
<div class="a" style="left:1084px;top:511px;width:1px;height:30px;background:#3a3a3e;"></div>
<div class="t" style="font-size:12px;color:#c6c6c8;left:1850.90px;top:520.20px;transform:scaleX(1.100);">DIM</div>
<svg class="a" style="left:0;top:0" width="1920" height="1009" viewBox="0 0 1920 1009"><rect x="18.5" y="518.5" width="20" height="4.5" fill="none" stroke="#8a8a8c" stroke-width="1"/><line x1="25.2" y1="518.5" x2="25.2" y2="523" stroke="#8a8a8c"/><line x1="31.8" y1="518.5" x2="31.8" y2="523" stroke="#8a8a8c"/><rect x="18" y="525" width="18" height="3" fill="#3a3a3e"/><rect x="18" y="530.5" width="15" height="3" fill="#3a3a3e"/><line x1="20" y1="526.4" x2="25" y2="526.4" stroke="#8a8a8c"/><line x1="20" y1="532" x2="25" y2="532" stroke="#8a8a8c"/><polyline points="33,529.5 36.2,533.5 42.8,525.5" fill="none" stroke="#8a8a8c" stroke-width="1.6"/><path d="M572.8,517.2 L583.6,527 L578.8,527.6 L581.5,533.2 L578.6,534.2 L576.2,528.6 L572.8,531.2Z" fill="#e8473a"/><path d="M613.5,519.8 H604.5 V532.5 H613.5 M622.2,519.8 H631.5 V532.5 H622.2" fill="none" stroke="#7e7e80" stroke-width="1.1"/><rect x="614.2" y="516.5" width="7.5" height="18" rx="2" fill="none" stroke="#7e7e80" stroke-width="1.2"/><line x1="618" y1="520" x2="618" y2="531" stroke="#7e7e80" stroke-width="1.6"/><polyline points="611.5,522.5 608,526 611.5,529.5" fill="none" stroke="#7e7e80" stroke-width="1.1"/><polyline points="624.8,522.5 628.3,526 624.8,529.5" fill="none" stroke="#7e7e80" stroke-width="1.1"/><path d="M649.5,519.5 Q646.3,526 649.5,532.5 M667.5,519.5 Q670.7,526 667.5,532.5" fill="none" stroke="#7e7e80" stroke-width="1.1"/><line x1="658.4" y1="518" x2="658.4" y2="534" stroke="#7e7e80" stroke-width="1.2"/><path d="M655.5,515.8 H661.3 L658.4,520Z" fill="#7e7e80"/><polyline points="654.5,522.5 651,526 654.5,529.5" fill="none" stroke="#7e7e80" stroke-width="1.1"/><polyline points="662.3,522.5 665.8,526 662.3,529.5" fill="none" stroke="#7e7e80" stroke-width="1.1"/><rect x="687.5" y="518.8" width="20.5" height="2" fill="#7e7e80"/><rect x="687.5" y="531" width="20.5" height="2" fill="#7e7e80"/><path d="M687,523 H708.5 V529.5 H687Z" fill="#7e7e80"/><path d="M689,526.2 L691,524.2 L693,526.2 L695,524.2 L697,526.2 L699,524.2 L701,526.2 L703,524.2 L705,526.2 L707,526.2 L705,528.2 L703,526.2 L701,528.2 L699,526.2 L697,528.2 L695,526.2 L693,528.2 L691,526.2 L689,528.2Z" fill="#232327"/><rect x="742.5" y="517.5" width="13" height="11" rx="1" fill="#2f2f33" stroke="#7e7e80" stroke-width="1.1"/><rect x="735.5" y="522.5" width="5" height="11.5" rx="1" fill="none" stroke="#7e7e80" stroke-width="1"/><rect x="757.5" y="522.5" width="5" height="11.5" rx="1" fill="none" stroke="#7e7e80" stroke-width="1"/><polyline points="745.5,530.5 749,534 752.5,530.5" fill="none" stroke="#7e7e80" stroke-width="1.1"/><rect x="778.5" y="517.5" width="13.5" height="11" rx="1" fill="#2f2f33" stroke="#7e7e80" stroke-width="1.1"/><path d="M792.5,523.5 H798.5 V533.5 H785 V529.5" fill="none" stroke="#7e7e80" stroke-width="1"/><path d="M793.5,514.5 Q797.5,514.5 797.5,519.5" fill="none" stroke="#7e7e80" stroke-width="1.1"/><polyline points="795.5,518 797.5,520.5 799.5,518" fill="none" stroke="#7e7e80" stroke-width="1.1"/><rect x="815.5" y="520.5" width="13" height="11" rx="1" fill="#2f2f33" stroke="#7e7e80" stroke-width="1.1"/><rect x="830" y="520.5" width="12.5" height="11" rx="1" fill="#2f2f33" stroke="#7e7e80" stroke-width="1.1"/><path d="M821.5,535.5 V526 M818.5,529 L821.5,525.5 L824.5,529 M836.5,516.5 V527 M833.5,524 L836.5,527.5 L839.5,524" fill="none" stroke="#7e7e80" stroke-width="1.1"/><path d="M879.4,520.4 L875,525 A4.4,4.4 0 0 0 881.2,531.2 L886.6,526.8" fill="none" stroke="#f2f2f2" stroke-width="2.4"/><rect x="880.3" y="516.7" width="2.6" height="2.6" fill="#f2f2f2" transform="rotate(45 881.6 518)"/><rect x="887.5" y="524" width="2.6" height="2.6" fill="#f2f2f2" transform="rotate(45 888.8 525.3)"/><rect x="910.6" y="526.8" width="11.8" height="6" rx="3" fill="none" stroke="#f2f2f2" stroke-width="2" transform="rotate(-47 916.5 529.8)"/><rect x="917.7" y="519.2" width="11.8" height="6" rx="3" fill="none" stroke="#f2f2f2" stroke-width="2" transform="rotate(-47 923.6 522.2)"/><path d="M955.5,523 V520.5 A4,3.6 0 0 1 963.5,520.5 V523" fill="none" stroke="#7e7e80" stroke-width="1.6"/><rect x="952" y="522.5" width="15" height="11.5" rx="1.2" fill="#7e7e80"/><path d="M954.5,528.3 H964.5 M956.7,526 L954.4,528.3 L956.7,530.6 M962.3,526 L964.6,528.3 L962.3,530.6" fill="none" stroke="#232327" stroke-width="1.2"/><path d="M998.5,519 H1009.5 V531.5 L1004,527.5 L998.5,531.5Z" fill="#1a84ea" stroke="#0a1420" stroke-width="0.8"/><polyline points="1020,523.5 1024.5,528.5 1029,523.5" fill="none" stroke="#7e7e80" stroke-width="1.2"/><path d="M1044,519 H1051.5 Q1053,519 1053,520.5 V528.5 L1047.8,531.8 L1042.5,528.5 V520.5 Q1042.5,519 1044,519Z" fill="#1a84ea" stroke="#0a1420" stroke-width="0.8"/><polyline points="1064,523.5 1068.4,528.5 1072.8,523.5" fill="none" stroke="#7e7e80" stroke-width="1.2"/><rect x="1096.5" y="517.8" width="24.3" height="12" rx="1" fill="#2c2c30" stroke="#6e6e70" stroke-width="1"/><line x1="1099.0" y1="518.5" x2="1099.0" y2="523.5" stroke="#6e6e70"/><line x1="1102.1" y1="518.5" x2="1102.1" y2="522" stroke="#6e6e70"/><line x1="1105.2" y1="518.5" x2="1105.2" y2="523.5" stroke="#6e6e70"/><line x1="1108.3" y1="518.5" x2="1108.3" y2="522" stroke="#6e6e70"/><line x1="1111.4" y1="518.5" x2="1111.4" y2="523.5" stroke="#6e6e70"/><line x1="1114.5" y1="518.5" x2="1114.5" y2="522" stroke="#6e6e70"/><line x1="1117.6" y1="518.5" x2="1117.6" y2="523.5" stroke="#6e6e70"/><circle cx="1116.5" cy="527.6" r="4.2" fill="#232327" stroke="#6e6e70" stroke-width="1.6"/><line x1="1119.6" y1="530.7" x2="1123" y2="534" stroke="#6e6e70" stroke-width="1.8" stroke-linecap="round"/><line x1="1136.5" y1="517.8" x2="1163" y2="517.8" stroke="#6e6e70" stroke-width="1"/><line x1="1136.5" y1="529.7" x2="1163" y2="529.7" stroke="#3c3c40" stroke-width="1"/><line x1="1137.5" y1="518" x2="1137.5" y2="523.5" stroke="#6e6e70"/><line x1="1140.8" y1="518" x2="1140.8" y2="521.5" stroke="#6e6e70"/><line x1="1144.1" y1="518" x2="1144.1" y2="523.5" stroke="#6e6e70"/><line x1="1147.4" y1="518" x2="1147.4" y2="521.5" stroke="#6e6e70"/><line x1="1150.7" y1="518" x2="1150.7" y2="523.5" stroke="#6e6e70"/><line x1="1154.0" y1="518" x2="1154.0" y2="521.5" stroke="#6e6e70"/><line x1="1157.3" y1="518" x2="1157.3" y2="523.5" stroke="#6e6e70"/><line x1="1160.6" y1="518" x2="1160.6" y2="521.5" stroke="#6e6e70"/><rect x="1146.5" y="517.8" width="5.5" height="12" rx="1" fill="none" stroke="#6e6e70" stroke-width="1"/><circle cx="1156.8" cy="527.6" r="4.2" fill="#232327" stroke="#6e6e70" stroke-width="1.6"/><line x1="1159.9" y1="530.7" x2="1163" y2="534" stroke="#6e6e70" stroke-width="1.8" stroke-linecap="round"/><line x1="1176.5" y1="517.6" x2="1203" y2="517.6" stroke="#a0a0a2" stroke-width="1"/><line x1="1176.5" y1="529.7" x2="1194" y2="529.7" stroke="#3c3c40" stroke-width="1.2"/><line x1="1177.5" y1="518" x2="1177.5" y2="524" stroke="#a0a0a2"/><line x1="1180.6" y1="518" x2="1180.6" y2="521.5" stroke="#a0a0a2"/><line x1="1183.7" y1="518" x2="1183.7" y2="524" stroke="#a0a0a2"/><line x1="1186.8" y1="518" x2="1186.8" y2="521.5" stroke="#a0a0a2"/><line x1="1189.9" y1="518" x2="1189.9" y2="524" stroke="#a0a0a2"/><line x1="1193.0" y1="518" x2="1193.0" y2="521.5" stroke="#a0a0a2"/><line x1="1196.1" y1="518" x2="1196.1" y2="524" stroke="#a0a0a2"/><line x1="1199.2" y1="518" x2="1199.2" y2="521.5" stroke="#a0a0a2"/><line x1="1202.3" y1="518" x2="1202.3" y2="524" stroke="#a0a0a2"/><circle cx="1197.1" cy="527.6" r="4.2" fill="#3a3a3e" stroke="#f2f2f2" stroke-width="1.6"/><line x1="1200.2" y1="530.7" x2="1203.4" y2="534" stroke="#f2f2f2" stroke-width="1.9" stroke-linecap="round"/><circle cx="1226.6" cy="525" r="6.5" fill="#2a2a2f"/><line x1="1222.5" y1="525" x2="1230.7" y2="525" stroke="#6e6e70" stroke-width="1.8"/><line x1="1247" y1="525.5" x2="1331" y2="525.5" stroke="#141416" stroke-width="3" stroke-linecap="round"/><circle cx="1313" cy="525.5" r="4.6" fill="#9a9a9c"/><circle cx="1352" cy="525" r="6.5" fill="#2a2a2f"/><path d="M1347.8,525 H1356.2 M1352,520.8 V529.2" stroke="#7e7e80" stroke-width="1.8"/><path d="M1724,522 H1727.5 L1733,518.7 V532.1 L1727.5,528.6 H1724Z" fill="#f2f2f2"/><path d="M1735.2,523 Q1736.8,525.4 1735.2,527.8 M1737.8,520.5 Q1741.5,525.4 1737.8,530.5" fill="none" stroke="#a9a9ab" stroke-width="1.3"/><line x1="1753" y1="526.3" x2="1828" y2="526.3" stroke="#2ea02e" stroke-width="3" stroke-linecap="round"/><circle cx="1831.4" cy="526.3" r="4.6" fill="#9a9a9c"/><rect x="1843.5" y="516.5" width="39.5" height="18.3" rx="4" fill="none" stroke="#4c4c50" stroke-width="1"/><rect x="1893.5" y="516.5" width="6" height="19" fill="#2d2d33" stroke="#0c0c0e" stroke-width="1"/><rect x="1899.5" y="516.5" width="6" height="19" fill="#2d2d33" stroke="#0c0c0e" stroke-width="1"/></svg>
<div class="a" style="left:0px;top:551px;width:232px;height:41px;background:#222226;"></div>
<div class="a" style="left:0px;top:591px;width:232px;height:1px;background:#141416;"></div>
<div class="t" style="font-size:21px;color:#c9c9cb;font-weight:bold;left:59.30px;top:560.50px;transform:scaleX(0.987);">01:03:07:03</div>
<div class="a" style="left:231px;top:551px;width:1px;height:410px;background:#0f0f11;"></div>
<div class="a" style="left:232px;top:551px;width:1678px;height:410px;background:#28282e;"></div>
<div class="a" style="left:1910px;top:551px;width:10px;height:410px;background:#2b2b30;"></div>
<div class="a" style="left:232px;top:551px;width:1678px;height:1px;background:#0f0f11;"></div>
<svg class="a" style="left:0;top:0" width="1920" height="1009" viewBox="0 0 1920 1009"><line x1="233.2" y1="552" x2="233.2" y2="556" stroke="#46464c" stroke-width="1"/><line x1="239.6" y1="552" x2="239.6" y2="561" stroke="#505056" stroke-width="1"/><line x1="246.0" y1="552" x2="246.0" y2="556" stroke="#46464c" stroke-width="1"/><line x1="252.3" y1="552" x2="252.3" y2="561" stroke="#505056" stroke-width="1"/><line x1="258.7" y1="552" x2="258.7" y2="556" stroke="#46464c" stroke-width="1"/><line x1="265.1" y1="552" x2="265.1" y2="561" stroke="#505056" stroke-width="1"/><line x1="271.5" y1="552" x2="271.5" y2="556" stroke="#46464c" stroke-width="1"/><line x1="277.9" y1="552" x2="277.9" y2="561" stroke="#505056" stroke-width="1"/><line x1="284.3" y1="552" x2="284.3" y2="556" stroke="#46464c" stroke-width="1"/><line x1="290.7" y1="552" x2="290.7" y2="561" stroke="#505056" stroke-width="1"/><line x1="297.1" y1="552" x2="297.1" y2="556" stroke="#46464c" stroke-width="1"/><line x1="303.5" y1="552" x2="303.5" y2="561" stroke="#505056" stroke-width="1"/><line x1="309.9" y1="552" x2="309.9" y2="556" stroke="#46464c" stroke-width="1"/><line x1="316.3" y1="552" x2="316.3" y2="561" stroke="#505056" stroke-width="1"/><line x1="322.7" y1="552" x2="322.7" y2="556" stroke="#46464c" stroke-width="1"/><line x1="329.0" y1="552" x2="329.0" y2="561" stroke="#505056" stroke-width="1"/><line x1="335.4" y1="552" x2="335.4" y2="556" stroke="#46464c" stroke-width="1"/><line x1="341.8" y1="552" x2="341.8" y2="561" stroke="#505056" stroke-width="1"/><line x1="348.2" y1="552" x2="348.2" y2="556" stroke="#46464c" stroke-width="1"/><line x1="354.6" y1="552" x2="354.6" y2="561" stroke="#505056" stroke-width="1"/><line x1="361.0" y1="552" x2="361.0" y2="556" stroke="#46464c" stroke-width="1"/><line x1="367.4" y1="552" x2="367.4" y2="565" stroke="#5c5c62" stroke-width="1"/><line x1="373.8" y1="552" x2="373.8" y2="556" stroke="#46464c" stroke-width="1"/><line x1="380.2" y1="552" x2="380.2" y2="561" stroke="#505056" stroke-width="1"/><line x1="386.6" y1="552" x2="386.6" y2="556" stroke="#46464c" stroke-width="1"/><line x1="393.0" y1="552" x2="393.0" y2="561" stroke="#505056" stroke-width="1"/><line x1="399.4" y1="552" x2="399.4" y2="556" stroke="#46464c" stroke-width="1"/><line x1="405.7" y1="552" x2="405.7" y2="561" stroke="#505056" stroke-width="1"/><line x1="412.1" y1="552" x2="412.1" y2="556" stroke="#46464c" stroke-width="1"/><line x1="418.5" y1="552" x2="418.5" y2="561" stroke="#505056" stroke-width="1"/><line x1="424.9" y1="552" x2="424.9" y2="556" stroke="#46464c" stroke-width="1"/><line x1="431.3" y1="552" x2="431.3" y2="561" stroke="#505056" stroke-width="1"/><line x1="437.7" y1="552" x2="437.7" y2="556" stroke="#46464c" stroke-width="1"/><line x1="444.1" y1="552" x2="444.1" y2="561" stroke="#505056" stroke-width="1"/><line x1="450.5" y1="552" x2="450.5" y2="556" stroke="#46464c" stroke-width="1"/><line x1="456.9" y1="552" x2="456.9" y2="561" stroke="#505056" stroke-width="1"/><line x1="463.3" y1="552" x2="463.3" y2="556" stroke="#46464c" stroke-width="1"/><line x1="469.7" y1="552" x2="469.7" y2="561" stroke="#505056" stroke-width="1"/><line x1="476.1" y1="552" x2="476.1" y2="556" stroke="#46464c" stroke-width="1"/><line x1="482.4" y1="552" x2="482.4" y2="561" stroke="#505056" stroke-width="1"/><line x1="488.8" y1="552" x2="488.8" y2="556" stroke="#46464c" stroke-width="1"/><line x1="495.2" y1="552" x2="495.2" y2="561" stroke="#505056" stroke-width="1"/><line x1="501.6" y1="552" x2="501.6" y2="556" stroke="#46464c" stroke-width="1"/><line x1="508.0" y1="552" x2="508.0" y2="561" stroke="#505056" stroke-width="1"/><line x1="514.4" y1="552" x2="514.4" y2="556" stroke="#46464c" stroke-width="1"/><line x1="520.8" y1="552" x2="520.8" y2="950" stroke="#34343a" stroke-width="1"/><line x1="520.8" y1="552" x2="520.8" y2="566" stroke="#8a8a8e" stroke-width="1"/><line x1="527.2" y1="552" x2="527.2" y2="556" stroke="#46464c" stroke-width="1"/><line x1="533.6" y1="552" x2="533.6" y2="561" stroke="#505056" stroke-width="1"/><line x1="540.0" y1="552" x2="540.0" y2="556" stroke="#46464c" stroke-width="1"/><line x1="546.4" y1="552" x2="546.4" y2="561" stroke="#505056" stroke-width="1"/><line x1="552.8" y1="552" x2="552.8" y2="556" stroke="#46464c" stroke-width="1"/><line x1="559.1" y1="552" x2="559.1" y2="561" stroke="#505056" stroke-width="1"/><line x1="565.5" y1="552" x2="565.5" y2="556" stroke="#46464c" stroke-width="1"/><line x1="571.9" y1="552" x2="571.9" y2="561" stroke="#505056" stroke-width="1"/><line x1="578.3" y1="552" x2="578.3" y2="556" stroke="#46464c" stroke-width="1"/><line x1="584.7" y1="552" x2="584.7" y2="561" stroke="#505056" stroke-width="1"/><line x1="591.1" y1="552" x2="591.1" y2="556" stroke="#46464c" stroke-width="1"/><line x1="597.5" y1="552" x2="597.5" y2="561" stroke="#505056" stroke-width="1"/><line x1="603.9" y1="552" x2="603.9" y2="556" stroke="#46464c" stroke-width="1"/><line x1="610.3" y1="552" x2="610.3" y2="561" stroke="#505056" stroke-width="1"/><line x1="616.7" y1="552" x2="616.7" y2="556" stroke="#46464c" stroke-width="1"/><line x1="623.1" y1="552" x2="623.1" y2="561" stroke="#505056" stroke-width="1"/><line x1="629.5" y1="552" x2="629.5" y2="556" stroke="#46464c" stroke-width="1"/><line x1="635.8" y1="552" x2="635.8" y2="561" stroke="#505056" stroke-width="1"/><line x1="642.2" y1="552" x2="642.2" y2="556" stroke="#46464c" stroke-width="1"/><line x1="648.6" y1="552" x2="648.6" y2="561" stroke="#505056" stroke-width="1"/><line x1="655.0" y1="552" x2="655.0" y2="556" stroke="#46464c" stroke-width="1"/><line x1="661.4" y1="552" x2="661.4" y2="561" stroke="#505056" stroke-width="1"/><line x1="667.8" y1="552" x2="667.8" y2="556" stroke="#46464c" stroke-width="1"/><line x1="674.2" y1="552" x2="674.2" y2="565" stroke="#5c5c62" stroke-width="1"/><line x1="680.6" y1="552" x2="680.6" y2="556" stroke="#46464c" stroke-width="1"/><line x1="687.0" y1="552" x2="687.0" y2="561" stroke="#505056" stroke-width="1"/><line x1="693.4" y1="552" x2="693.4" y2="556" stroke="#46464c" stroke-width="1"/><line x1="699.8" y1="552" x2="699.8" y2="561" stroke="#505056" stroke-width="1"/><line x1="706.2" y1="552" x2="706.2" y2="556" stroke="#46464c" stroke-width="1"/><line x1="712.5" y1="552" x2="712.5" y2="561" stroke="#505056" stroke-width="1"/><line x1="718.9" y1="552" x2="718.9" y2="556" stroke="#46464c" stroke-width="1"/><line x1="725.3" y1="552" x2="725.3" y2="561" stroke="#505056" stroke-width="1"/><line x1="731.7" y1="552" x2="731.7" y2="556" stroke="#46464c" stroke-width="1"/><line x1="738.1" y1="552" x2="738.1" y2="561" stroke="#505056" stroke-width="1"/><line x1="744.5" y1="552" x2="744.5" y2="556" stroke="#46464c" stroke-width="1"/><line x1="750.9" y1="552" x2="750.9" y2="561" stroke="#505056" stroke-width="1"/><line x1="757.3" y1="552" x2="757.3" y2="556" stroke="#46464c" stroke-width="1"/><line x1="763.7" y1="552" x2="763.7" y2="561" stroke="#505056" stroke-width="1"/><line x1="770.1" y1="552" x2="770.1" y2="556" stroke="#46464c" stroke-width="1"/><line x1="776.5" y1="552" x2="776.5" y2="561" stroke="#505056" stroke-width="1"/><line x1="782.9" y1="552" x2="782.9" y2="556" stroke="#46464c" stroke-width="1"/><line x1="789.2" y1="552" x2="789.2" y2="561" stroke="#505056" stroke-width="1"/><line x1="795.6" y1="552" x2="795.6" y2="556" stroke="#46464c" stroke-width="1"/><line x1="802.0" y1="552" x2="802.0" y2="561" stroke="#505056" stroke-width="1"/><line x1="808.4" y1="552" x2="808.4" y2="556" stroke="#46464c" stroke-width="1"/><line x1="814.8" y1="552" x2="814.8" y2="561" stroke="#505056" stroke-width="1"/><line x1="821.2" y1="552" x2="821.2" y2="556" stroke="#46464c" stroke-width="1"/><line x1="827.6" y1="552" x2="827.6" y2="950" stroke="#34343a" stroke-width="1"/><line x1="827.6" y1="552" x2="827.6" y2="566" stroke="#8a8a8e" stroke-width="1"/><line x1="834.0" y1="552" x2="834.0" y2="556" stroke="#46464c" stroke-width="1"/><line x1="840.4" y1="552" x2="840.4" y2="561" stroke="#505056" stroke-width="1"/><line x1="846.8" y1="552" x2="846.8" y2="556" stroke="#46464c" stroke-width="1"/><line x1="853.2" y1="552" x2="853.2" y2="561" stroke="#505056" stroke-width="1"/><line x1="859.6" y1="552" x2="859.6" y2="556" stroke="#46464c" stroke-width="1"/><line x1="866.0" y1="552" x2="866.0" y2="561" stroke="#505056" stroke-width="1"/><line x1="872.3" y1="552" x2="872.3" y2="556" stroke="#46464c" stroke-width="1"/><line x1="878.7" y1="552" x2="878.7" y2="561" stroke="#505056" stroke-width="1"/><line x1="885.1" y1="552" x2="885.1" y2="556" stroke="#46464c" stroke-width="1"/><line x1="891.5" y1="552" x2="891.5" y2="561" stroke="#505056" stroke-width="1"/><line x1="897.9" y1="552" x2="897.9" y2="556" stroke="#46464c" stroke-width="1"/><line x1="904.3" y1="552" x2="904.3" y2="561" stroke="#505056" stroke-width="1"/><line x1="910.7" y1="552" x2="910.7" y2="556" stroke="#46464c" stroke-width="1"/><line x1="917.1" y1="552" x2="917.1" y2="561" stroke="#505056" stroke-width="1"/><line x1="923.5" y1="552" x2="923.5" y2="556" stroke="#46464c" stroke-width="1"/><line x1="929.9" y1="552" x2="929.9" y2="561" stroke="#505056" stroke-width="1"/><line x1="936.3" y1="552" x2="936.3" y2="556" stroke="#46464c" stroke-width="1"/><line x1="942.6" y1="552" x2="942.6" y2="561" stroke="#505056" stroke-width="1"/><line x1="949.0" y1="552" x2="949.0" y2="556" stroke="#46464c" stroke-width="1"/><line x1="955.4" y1="552" x2="955.4" y2="561" stroke="#505056" stroke-width="1"/><line x1="961.8" y1="552" x2="961.8" y2="556" stroke="#46464c" stroke-width="1"/><line x1="968.2" y1="552" x2="968.2" y2="561" stroke="#505056" stroke-width="1"/><line x1="974.6" y1="552" x2="974.6" y2="556" stroke="#46464c" stroke-width="1"/><line x1="981.0" y1="552" x2="981.0" y2="565" stroke="#5c5c62" stroke-width="1"/><line x1="987.4" y1="552" x2="987.4" y2="556" stroke="#46464c" stroke-width="1"/><line x1="993.8" y1="552" x2="993.8" y2="561" stroke="#505056" stroke-width="1"/><line x1="1000.2" y1="552" x2="1000.2" y2="556" stroke="#46464c" stroke-width="1"/><line x1="1006.6" y1="552" x2="1006.6" y2="561" stroke="#505056" stroke-width="1"/><line x1="1013.0" y1="552" x2="1013.0" y2="556" stroke="#46464c" stroke-width="1"/><line x1="1019.3" y1="552" x2="1019.3" y2="561" stroke="#505056" stroke-width="1"/><line x1="1025.7" y1="552" x2="1025.7" y2="556" stroke="#46464c" stroke-width="1"/><line x1="1032.1" y1="552" x2="1032.1" y2="561" stroke="#505056" stroke-width="1"/><line x1="1038.5" y1="552" x2="1038.5" y2="556" stroke="#46464c" stroke-width="1"/><line x1="1044.9" y1="552" x2="1044.9" y2="561" stroke="#505056" stroke-width="1"/><line x1="1051.3" y1="552" x2="1051.3" y2="556" stroke="#46464c" stroke-width="1"/><line x1="1057.7" y1="552" x2="1057.7" y2="561" stroke="#505056" stroke-width="1"/><line x1="1064.1" y1="552" x2="1064.1" y2="556" stroke="#46464c" stroke-width="1"/><line x1="1070.5" y1="552" x2="1070.5" y2="561" stroke="#505056" stroke-width="1"/><line x1="1076.9" y1="552" x2="1076.9" y2="556" stroke="#46464c" stroke-width="1"/><line x1="1083.3" y1="552" x2="1083.3" y2="561" stroke="#505056" stroke-width="1"/><line x1="1089.7" y1="552" x2="1089.7" y2="556" stroke="#46464c" stroke-width="1"/><line x1="1096.0" y1="552" x2="1096.0" y2="561" stroke="#505056" stroke-width="1"/><line x1="1102.4" y1="552" x2="1102.4" y2="556" stroke="#46464c" stroke-width="1"/><line x1="1108.8" y1="552" x2="1108.8" y2="561" stroke="#505056" stroke-width="1"/><line x1="1115.2" y1="552" x2="1115.2" y2="556" stroke="#46464c" stroke-width="1"/><line x1="1121.6" y1="552" x2="1121.6" y2="561" stroke="#505056" stroke-width="1"/><line x1="1128.0" y1="552" x2="1128.0" y2="556" stroke="#46464c" stroke-width="1"/><line x1="1134.4" y1="552" x2="1134.4" y2="950" stroke="#34343a" stroke-width="1"/><line x1="1134.4" y1="552" x2="1134.4" y2="566" stroke="#8a8a8e" stroke-width="1"/><line x1="1140.8" y1="552" x2="1140.8" y2="556" stroke="#46464c" stroke-width="1"/><line x1="1147.2" y1="552" x2="1147.2" y2="561" stroke="#505056" stroke-width="1"/><line x1="1153.6" y1="552" x2="1153.6" y2="556" stroke="#46464c" stroke-width="1"/><line x1="1160.0" y1="552" x2="1160.0" y2="561" stroke="#505056" stroke-width="1"/><line x1="1166.4" y1="552" x2="1166.4" y2="556" stroke="#46464c" stroke-width="1"/><line x1="1172.8" y1="552" x2="1172.8" y2="561" stroke="#505056" stroke-width="1"/><line x1="1179.1" y1="552" x2="1179.1" y2="556" stroke="#46464c" stroke-width="1"/><line x1="1185.5" y1="552" x2="1185.5" y2="561" stroke="#505056" stroke-width="1"/><line x1="1191.9" y1="552" x2="1191.9" y2="556" stroke="#46464c" stroke-width="1"/><line x1="1198.3" y1="552" x2="1198.3" y2="561" stroke="#505056" stroke-width="1"/><line x1="1204.7" y1="552" x2="1204.7" y2="556" stroke="#46464c" stroke-width="1"/><line x1="1211.1" y1="552" x2="1211.1" y2="561" stroke="#505056" stroke-width="1"/><line x1="1217.5" y1="552" x2="1217.5" y2="556" stroke="#46464c" stroke-width="1"/><line x1="1223.9" y1="552" x2="1223.9" y2="561" stroke="#505056" stroke-width="1"/><line x1="1230.3" y1="552" x2="1230.3" y2="556" stroke="#46464c" stroke-width="1"/><line x1="1236.7" y1="552" x2="1236.7" y2="561" stroke="#505056" stroke-width="1"/><line x1="1243.1" y1="552" x2="1243.1" y2="556" stroke="#46464c" stroke-width="1"/><line x1="1249.5" y1="552" x2="1249.5" y2="561" stroke="#505056" stroke-width="1"/><line x1="1255.8" y1="552" x2="1255.8" y2="556" stroke="#46464c" stroke-width="1"/><line x1="1262.2" y1="552" x2="1262.2" y2="561" stroke="#505056" stroke-width="1"/><line x1="1268.6" y1="552" x2="1268.6" y2="556" stroke="#46464c" stroke-width="1"/><line x1="1275.0" y1="552" x2="1275.0" y2="561" stroke="#505056" stroke-width="1"/><line x1="1281.4" y1="552" x2="1281.4" y2="556" stroke="#46464c" stroke-width="1"/><line x1="1287.8" y1="552" x2="1287.8" y2="565" stroke="#5c5c62" stroke-width="1"/><line x1="1294.2" y1="552" x2="1294.2" y2="556" stroke="#46464c" stroke-width="1"/><line x1="1300.6" y1="552" x2="1300.6" y2="561" stroke="#505056" stroke-width="1"/><line x1="1307.0" y1="552" x2="1307.0" y2="556" stroke="#46464c" stroke-width="1"/><line x1="1313.4" y1="552" x2="1313.4" y2="561" stroke="#505056" stroke-width="1"/><line x1="1319.8" y1="552" x2="1319.8" y2="556" stroke="#46464c" stroke-width="1"/><line x1="1326.2" y1="552" x2="1326.2" y2="561" stroke="#505056" stroke-width="1"/><line x1="1332.5" y1="552" x2="1332.5" y2="556" stroke="#46464c" stroke-width="1"/><line x1="1338.9" y1="552" x2="1338.9" y2="561" stroke="#505056" stroke-width="1"/><line x1="1345.3" y1="552" x2="1345.3" y2="556" stroke="#46464c" stroke-width="1"/><line x1="1351.7" y1="552" x2="1351.7" y2="561" stroke="#505056" stroke-width="1"/><line x1="1358.1" y1="552" x2="1358.1" y2="556" stroke="#46464c" stroke-width="1"/><line x1="1364.5" y1="552" x2="1364.5" y2="561" stroke="#505056" stroke-width="1"/><line x1="1370.9" y1="552" x2="1370.9" y2="556" stroke="#46464c" stroke-width="1"/><line x1="1377.3" y1="552" x2="1377.3" y2="561" stroke="#505056" stroke-width="1"/><line x1="1383.7" y1="552" x2="1383.7" y2="556" stroke="#46464c" stroke-width="1"/><line x1="1390.1" y1="552" x2="1390.1" y2="561" stroke="#505056" stroke-width="1"/><line x1="1396.5" y1="552" x2="1396.5" y2="556" stroke="#46464c" stroke-width="1"/><line x1="1402.8" y1="552" x2="1402.8" y2="561" stroke="#505056" stroke-width="1"/><line x1="1409.2" y1="552" x2="1409.2" y2="556" stroke="#46464c" stroke-width="1"/><line x1="1415.6" y1="552" x2="1415.6" y2="561" stroke="#505056" stroke-width="1"/><line x1="1422.0" y1="552" x2="1422.0" y2="556" stroke="#46464c" stroke-width="1"/><line x1="1428.4" y1="552" x2="1428.4" y2="561" stroke="#505056" stroke-width="1"/><line x1="1434.8" y1="552" x2="1434.8" y2="556" stroke="#46464c" stroke-width="1"/><line x1="1441.2" y1="552" x2="1441.2" y2="950" stroke="#34343a" stroke-width="1"/><line x1="1441.2" y1="552" x2="1441.2" y2="566" stroke="#8a8a8e" stroke-width="1"/><line x1="1447.6" y1="552" x2="1447.6" y2="556" stroke="#46464c" stroke-width="1"/><line x1="1454.0" y1="552" x2="1454.0" y2="561" stroke="#505056" stroke-width="1"/><line x1="1460.4" y1="552" x2="1460.4" y2="556" stroke="#46464c" stroke-width="1"/><line x1="1466.8" y1="552" x2="1466.8" y2="561" stroke="#505056" stroke-width="1"/><line x1="1473.2" y1="552" x2="1473.2" y2="556" stroke="#46464c" stroke-width="1"/><line x1="1479.5" y1="552" x2="1479.5" y2="561" stroke="#505056" stroke-width="1"/><line x1="1485.9" y1="552" x2="1485.9" y2="556" stroke="#46464c" stroke-width="1"/><line x1="1492.3" y1="552" x2="1492.3" y2="561" stroke="#505056" stroke-width="1"/><line x1="1498.7" y1="552" x2="1498.7" y2="556" stroke="#46464c" stroke-width="1"/><line x1="1505.1" y1="552" x2="1505.1" y2="561" stroke="#505056" stroke-width="1"/><line x1="1511.5" y1="552" x2="1511.5" y2="556" stroke="#46464c" stroke-width="1"/><line x1="1517.9" y1="552" x2="1517.9" y2="561" stroke="#505056" stroke-width="1"/><line x1="1524.3" y1="552" x2="1524.3" y2="556" stroke="#46464c" stroke-width="1"/><line x1="1530.7" y1="552" x2="1530.7" y2="561" stroke="#505056" stroke-width="1"/><line x1="1537.1" y1="552" x2="1537.1" y2="556" stroke="#46464c" stroke-width="1"/><line x1="1543.5" y1="552" x2="1543.5" y2="561" stroke="#505056" stroke-width="1"/><line x1="1549.9" y1="552" x2="1549.9" y2="556" stroke="#46464c" stroke-width="1"/><line x1="1556.2" y1="552" x2="1556.2" y2="561" stroke="#505056" stroke-width="1"/><line x1="1562.6" y1="552" x2="1562.6" y2="556" stroke="#46464c" stroke-width="1"/><line x1="1569.0" y1="552" x2="1569.0" y2="561" stroke="#505056" stroke-width="1"/><line x1="1575.4" y1="552" x2="1575.4" y2="556" stroke="#46464c" stroke-width="1"/><line x1="1581.8" y1="552" x2="1581.8" y2="561" stroke="#505056" stroke-width="1"/><line x1="1588.2" y1="552" x2="1588.2" y2="556" stroke="#46464c" stroke-width="1"/><line x1="1594.6" y1="552" x2="1594.6" y2="565" stroke="#5c5c62" stroke-width="1"/><line x1="1601.0" y1="552" x2="1601.0" y2="556" stroke="#46464c" stroke-width="1"/><line x1="1607.4" y1="552" x2="1607.4" y2="561" stroke="#505056" stroke-width="1"/><line x1="1613.8" y1="552" x2="1613.8" y2="556" stroke="#46464c" stroke-width="1"/><line x1="1620.2" y1="552" x2="1620.2" y2="561" stroke="#505056" stroke-width="1"/><line x1="1626.6" y1="552" x2="1626.6" y2="556" stroke="#46464c" stroke-width="1"/><line x1="1633.0" y1="552" x2="1633.0" y2="561" stroke="#505056" stroke-width="1"/><line x1="1639.3" y1="552" x2="1639.3" y2="556" stroke="#46464c" stroke-width="1"/><line x1="1645.7" y1="552" x2="1645.7" y2="561" stroke="#505056" stroke-width="1"/><line x1="1652.1" y1="552" x2="1652.1" y2="556" stroke="#46464c" stroke-width="1"/><line x1="1658.5" y1="552" x2="1658.5" y2="561" stroke="#505056" stroke-width="1"/><line x1="1664.9" y1="552" x2="1664.9" y2="556" stroke="#46464c" stroke-width="1"/><line x1="1671.3" y1="552" x2="1671.3" y2="561" stroke="#505056" stroke-width="1"/><line x1="1677.7" y1="552" x2="1677.7" y2="556" stroke="#46464c" stroke-width="1"/><line x1="1684.1" y1="552" x2="1684.1" y2="561" stroke="#505056" stroke-width="1"/><line x1="1690.5" y1="552" x2="1690.5" y2="556" stroke="#46464c" stroke-width="1"/><line x1="1696.9" y1="552" x2="1696.9" y2="561" stroke="#505056" stroke-width="1"/><line x1="1703.3" y1="552" x2="1703.3" y2="556" stroke="#46464c" stroke-width="1"/><line x1="1709.7" y1="552" x2="1709.7" y2="561" stroke="#505056" stroke-width="1"/><line x1="1716.0" y1="552" x2="1716.0" y2="556" stroke="#46464c" stroke-width="1"/><line x1="1722.4" y1="552" x2="1722.4" y2="561" stroke="#505056" stroke-width="1"/><line x1="1728.8" y1="552" x2="1728.8" y2="556" stroke="#46464c" stroke-width="1"/><line x1="1735.2" y1="552" x2="1735.2" y2="561" stroke="#505056" stroke-width="1"/><line x1="1741.6" y1="552" x2="1741.6" y2="556" stroke="#46464c" stroke-width="1"/><line x1="1748.0" y1="552" x2="1748.0" y2="950" stroke="#34343a" stroke-width="1"/><line x1="1748.0" y1="552" x2="1748.0" y2="566" stroke="#8a8a8e" stroke-width="1"/><line x1="1754.4" y1="552" x2="1754.4" y2="556" stroke="#46464c" stroke-width="1"/><line x1="1760.8" y1="552" x2="1760.8" y2="561" stroke="#505056" stroke-width="1"/><line x1="1767.2" y1="552" x2="1767.2" y2="556" stroke="#46464c" stroke-width="1"/><line x1="1773.6" y1="552" x2="1773.6" y2="561" stroke="#505056" stroke-width="1"/><line x1="1780.0" y1="552" x2="1780.0" y2="556" stroke="#46464c" stroke-width="1"/><line x1="1786.3" y1="552" x2="1786.3" y2="561" stroke="#505056" stroke-width="1"/><line x1="1792.7" y1="552" x2="1792.7" y2="556" stroke="#46464c" stroke-width="1"/><line x1="1799.1" y1="552" x2="1799.1" y2="561" stroke="#505056" stroke-width="1"/><line x1="1805.5" y1="552" x2="1805.5" y2="556" stroke="#46464c" stroke-width="1"/><line x1="1811.9" y1="552" x2="1811.9" y2="561" stroke="#505056" stroke-width="1"/><line x1="1818.3" y1="552" x2="1818.3" y2="556" stroke="#46464c" stroke-width="1"/><line x1="1824.7" y1="552" x2="1824.7" y2="561" stroke="#505056" stroke-width="1"/><line x1="1831.1" y1="552" x2="1831.1" y2="556" stroke="#46464c" stroke-width="1"/><line x1="1837.5" y1="552" x2="1837.5" y2="561" stroke="#505056" stroke-width="1"/><line x1="1843.9" y1="552" x2="1843.9" y2="556" stroke="#46464c" stroke-width="1"/><line x1="1850.3" y1="552" x2="1850.3" y2="561" stroke="#505056" stroke-width="1"/><line x1="1856.7" y1="552" x2="1856.7" y2="556" stroke="#46464c" stroke-width="1"/><line x1="1863.0" y1="552" x2="1863.0" y2="561" stroke="#505056" stroke-width="1"/><line x1="1869.4" y1="552" x2="1869.4" y2="556" stroke="#46464c" stroke-width="1"/><line x1="1875.8" y1="552" x2="1875.8" y2="561" stroke="#505056" stroke-width="1"/><line x1="1882.2" y1="552" x2="1882.2" y2="556" stroke="#46464c" stroke-width="1"/><line x1="1888.6" y1="552" x2="1888.6" y2="561" stroke="#505056" stroke-width="1"/><line x1="1895.0" y1="552" x2="1895.0" y2="556" stroke="#46464c" stroke-width="1"/><line x1="1901.4" y1="552" x2="1901.4" y2="565" stroke="#5c5c62" stroke-width="1"/></svg>
<div class="t" style="font-size:11px;color:#9b9b9e;left:231.56px;top:566.20px;transform:scaleX(0.944);">:03:02:00</div>
<div class="t" style="font-size:11px;color:#9b9b9e;left:526.00px;top:566.20px;transform:scaleX(0.974);">01:03:04:00</div>
<div class="t" style="font-size:11px;color:#9b9b9e;left:833.00px;top:566.20px;transform:scaleX(0.969);">01:03:06:00</div>
<div class="t" style="font-size:11px;color:#9b9b9e;left:1140.60px;top:566.20px;transform:scaleX(0.972);">01:03:08:00</div>
<div class="t" style="font-size:11px;color:#9b9b9e;left:1447.40px;top:566.20px;transform:scaleX(0.976);">01:03:10:00</div>
<div class="t" style="font-size:11px;color:#9b9b9e;left:1754.20px;top:566.20px;transform:scaleX(0.976);">01:03:12:00</div>
<svg class="a" style="left:0;top:0" width="1920" height="1009" viewBox="0 0 1920 1009"><rect x="232" y="590.6" width="1671" height="1.6" fill="#d42a1a"/><rect x="981" y="590.6" width="25" height="1.6" fill="#1a84ea"/><path d="M426.8,577.8 H433.8 Q435.3,577.8 435.3,579.3 V586 L430.3,589.8 L425.3,586 V579.3 Q425.3,577.8 426.8,577.8Z" fill="#1a84ea" stroke="#0a1420" stroke-width="1"/><path d="M785.1,577.8 H792.1 Q793.6,577.8 793.6,579.3 V586 L788.6,589.8 L783.6,586 V579.3 Q783.6,577.8 785.1,577.8Z" fill="#1a84ea" stroke="#0a1420" stroke-width="1"/><path d="M1213.9,577.8 H1220.9 Q1222.4,577.8 1222.4,579.3 V586 L1217.4,589.8 L1212.4,586 V579.3 Q1212.4,577.8 1213.9,577.8Z" fill="#1a84ea" stroke="#0a1420" stroke-width="1"/><line x1="232" y1="599.5" x2="1910" y2="599.5" stroke="#303036" stroke-width="1"/><line x1="232" y1="661.5" x2="1910" y2="661.5" stroke="#303036" stroke-width="1"/><line x1="232" y1="723.5" x2="1910" y2="723.5" stroke="#303036" stroke-width="1"/><line x1="232" y1="785.5" x2="1910" y2="785.5" stroke="#303036" stroke-width="1"/><line x1="232" y1="847.5" x2="1910" y2="847.5" stroke="#303036" stroke-width="1"/></svg>
<div class="a" style="left:0px;top:592px;width:231px;height:263px;background:#232327;"></div>
<div class="t" style="font-size:12px;color:#eeeeee;font-weight:bold;left:36.00px;top:608.40px;transform:scaleX(1.020);">V8</div>
<div class="t" style="font-size:11px;color:#e6e6e6;font-weight:bold;left:73.00px;top:610.50px;transform:scaleX(1.173);">血痕</div>
<div class="t" style="font-size:12px;color:#eeeeee;font-weight:bold;left:36.00px;top:670.40px;transform:scaleX(1.020);">V7</div>
<div class="t" style="font-size:11px;color:#e6e6e6;font-weight:bold;left:73.00px;top:673.50px;transform:scaleX(1.173);">歌詞</div>
<div class="t" style="font-size:12px;color:#eeeeee;font-weight:bold;left:36.00px;top:732.40px;transform:scaleX(1.020);">V6</div>
<div class="t" style="font-size:11px;color:#e6e6e6;font-weight:bold;left:73.00px;top:735.50px;transform:scaleX(1.173);">歌詞</div>
<div class="t" style="font-size:12px;color:#eeeeee;font-weight:bold;left:36.00px;top:794.40px;transform:scaleX(1.020);">V5</div>
<div class="t" style="font-size:11px;color:#e6e6e6;font-weight:bold;left:73.00px;top:797.50px;transform:scaleX(1.173);">歌詞</div>
<svg class="a" style="left:0;top:0" width="1920" height="1009" viewBox="0 0 1920 1009"><rect x="0" y="592" width="3.2" height="263" fill="#4b86b8"/><line x1="19.5" y1="592" x2="19.5" y2="855" stroke="#141416" stroke-width="1"/><line x1="0" y1="598.5" x2="231" y2="598.5" stroke="#141416" stroke-width="1.2"/><line x1="20" y1="626.5" x2="231" y2="626.5" stroke="#141416" stroke-width="1"/><line x1="63.5" y1="599" x2="63.5" y2="626" stroke="#141416" stroke-width="1"/><path d="M80.5,639 V636.5 A4.5,4 0 0 1 89.5,636.5 V638" fill="none" stroke="#4a4a4e" stroke-width="1.6"/><rect x="79" y="638.5" width="12" height="7" rx="1.3" fill="#4a4a4e"/><rect x="104.6" y="633.6" width="15.6" height="11.6" rx="1.3" fill="none" stroke="#ededed" stroke-width="1.3"/><polyline points="110,636.8 107.8,639.4 110,642" fill="none" stroke="#ededed" stroke-width="1"/><polyline points="114.8,636.8 117,639.4 114.8,642" fill="none" stroke="#ededed" stroke-width="1"/><rect x="131.5" y="633.6" width="17.2" height="11.6" rx="1.3" fill="#404044" stroke="#a9a9ab" stroke-width="1.1"/><rect x="133.2" y="635.5" width="1.4" height="1.4" fill="#a9a9ab"/><rect x="145.6" y="635.5" width="1.4" height="1.4" fill="#a9a9ab"/><rect x="133.2" y="638.6999999999999" width="1.4" height="1.4" fill="#a9a9ab"/><rect x="145.6" y="638.6999999999999" width="1.4" height="1.4" fill="#a9a9ab"/><rect x="133.2" y="641.9" width="1.4" height="1.4" fill="#a9a9ab"/><rect x="145.6" y="641.9" width="1.4" height="1.4" fill="#a9a9ab"/><line x1="0" y1="660.5" x2="231" y2="660.5" stroke="#141416" stroke-width="1.2"/><line x1="20" y1="688.5" x2="231" y2="688.5" stroke="#141416" stroke-width="1"/><line x1="63.5" y1="661" x2="63.5" y2="688" stroke="#141416" stroke-width="1"/><path d="M80.5,701 V698.5 A4.5,4 0 0 1 89.5,698.5 V700" fill="none" stroke="#4a4a4e" stroke-width="1.6"/><rect x="79" y="700.5" width="12" height="7" rx="1.3" fill="#4a4a4e"/><rect x="104.6" y="695.6" width="15.6" height="11.6" rx="1.3" fill="none" stroke="#ededed" stroke-width="1.3"/><polyline points="110,698.8 107.8,701.4 110,704" fill="none" stroke="#ededed" stroke-width="1"/><polyline points="114.8,698.8 117,701.4 114.8,704" fill="none" stroke="#ededed" stroke-width="1"/><rect x="131.5" y="695.6" width="17.2" height="11.6" rx="1.3" fill="#404044" stroke="#a9a9ab" stroke-width="1.1"/><rect x="133.2" y="697.5" width="1.4" height="1.4" fill="#a9a9ab"/><rect x="145.6" y="697.5" width="1.4" height="1.4" fill="#a9a9ab"/><rect x="133.2" y="700.6999999999999" width="1.4" height="1.4" fill="#a9a9ab"/><rect x="145.6" y="700.6999999999999" width="1.4" height="1.4" fill="#a9a9ab"/><rect x="133.2" y="703.9" width="1.4" height="1.4" fill="#a9a9ab"/><rect x="145.6" y="703.9" width="1.4" height="1.4" fill="#a9a9ab"/><line x1="0" y1="722.5" x2="231" y2="722.5" stroke="#141416" stroke-width="1.2"/><line x1="20" y1="750.5" x2="231" y2="750.5" stroke="#141416" stroke-width="1"/><line x1="63.5" y1="723" x2="63.5" y2="750" stroke="#141416" stroke-width="1"/><path d="M80.5,763 V760.5 A4.5,4 0 0 1 89.5,760.5 V762" fill="none" stroke="#4a4a4e" stroke-width="1.6"/><rect x="79" y="762.5" width="12" height="7" rx="1.3" fill="#4a4a4e"/><rect x="104.6" y="757.6" width="15.6" height="11.6" rx="1.3" fill="none" stroke="#ededed" stroke-width="1.3"/><polyline points="110,760.8 107.8,763.4 110,766" fill="none" stroke="#ededed" stroke-width="1"/><polyline points="114.8,760.8 117,763.4 114.8,766" fill="none" stroke="#ededed" stroke-width="1"/><rect x="131.5" y="757.6" width="17.2" height="11.6" rx="1.3" fill="#404044" stroke="#a9a9ab" stroke-width="1.1"/><rect x="133.2" y="759.5" width="1.4" height="1.4" fill="#a9a9ab"/><rect x="145.6" y="759.5" width="1.4" height="1.4" fill="#a9a9ab"/><rect x="133.2" y="762.6999999999999" width="1.4" height="1.4" fill="#a9a9ab"/><rect x="145.6" y="762.6999999999999" width="1.4" height="1.4" fill="#a9a9ab"/><rect x="133.2" y="765.9" width="1.4" height="1.4" fill="#a9a9ab"/><rect x="145.6" y="765.9" width="1.4" height="1.4" fill="#a9a9ab"/><line x1="0" y1="784.5" x2="231" y2="784.5" stroke="#141416" stroke-width="1.2"/><line x1="20" y1="812.5" x2="231" y2="812.5" stroke="#141416" stroke-width="1"/><line x1="63.5" y1="785" x2="63.5" y2="812" stroke="#141416" stroke-width="1"/><path d="M80.5,825 V822.5 A4.5,4 0 0 1 89.5,822.5 V824" fill="none" stroke="#4a4a4e" stroke-width="1.6"/><rect x="79" y="824.5" width="12" height="7" rx="1.3" fill="#4a4a4e"/><rect x="104.6" y="819.6" width="15.6" height="11.6" rx="1.3" fill="none" stroke="#ededed" stroke-width="1.3"/><polyline points="110,822.8 107.8,825.4 110,828" fill="none" stroke="#ededed" stroke-width="1"/><polyline points="114.8,822.8 117,825.4 114.8,828" fill="none" stroke="#ededed" stroke-width="1"/><rect x="131.5" y="819.6" width="17.2" height="11.6" rx="1.3" fill="#404044" stroke="#a9a9ab" stroke-width="1.1"/><rect x="133.2" y="821.5" width="1.4" height="1.4" fill="#a9a9ab"/><rect x="145.6" y="821.5" width="1.4" height="1.4" fill="#a9a9ab"/><rect x="133.2" y="824.6999999999999" width="1.4" height="1.4" fill="#a9a9ab"/><rect x="145.6" y="824.6999999999999" width="1.4" height="1.4" fill="#a9a9ab"/><rect x="133.2" y="827.9" width="1.4" height="1.4" fill="#a9a9ab"/><rect x="145.6" y="827.9" width="1.4" height="1.4" fill="#a9a9ab"/><line x1="0" y1="846.5" x2="231" y2="846.5" stroke="#141416" stroke-width="1.2"/><line x1="63.5" y1="847" x2="63.5" y2="855" stroke="#141416" stroke-width="1"/></svg>
<svg class="a" style="left:0;top:0" width="1920" height="1009" viewBox="0 0 1920 1009"><defs><clipPath id="c865_601"><rect x="865" y="601" width="115" height="59" rx="3.5"/></clipPath></defs><rect x="864.5" y="600.5" width="116" height="60" rx="4" fill="#18181a"/><g clip-path="url(#c865_601)"><rect x="865" y="601" width="115" height="59" fill="#bdb39b"/><polygon points="865,601 903,601 865,635.5" fill="#534d43"/><polygon points="980,601 942,601 980,635.5" fill="#534d43"/><rect x="865" y="635" width="115" height="1" fill="#857d6c"/></g><path d="M877.3,642.7 Q877.636,646.364 881.3,646.7 Q877.636,647.0360000000001 877.3,650.7 Q876.9639999999999,647.0360000000001 873.3,646.7 Q876.9639999999999,646.364 877.3,642.7Z" fill="#f6f6f6"/><path d="M884.6,641.1999999999999 Q884.8688000000001,644.1311999999999 887.8000000000001,644.4 Q884.8688000000001,644.6688 884.6,647.6 Q884.3312,644.6688 881.4,644.4 Q884.3312,644.1311999999999 884.6,641.1999999999999Z" fill="#f6f6f6"/><path d="M882.5,648.7 Q882.752,651.4480000000001 885.5,651.7 Q882.752,651.952 882.5,654.7 Q882.248,651.952 879.5,651.7 Q882.248,651.4480000000001 882.5,648.7Z" fill="#f6f6f6"/><path d="M935.2,645.9 L939.6,643.3 Q943,642.5 945,646.5 L948,651 Q949.5,652.5 952.9,649.3" fill="none" stroke="#0e0e0e" stroke-width="1.5"/><circle cx="939.6" cy="643.5" r="1.7" fill="#bdb39b" stroke="#0e0e0e" stroke-width="1.1"/><circle cx="948.7" cy="651.2" r="1.7" fill="#bdb39b" stroke="#0e0e0e" stroke-width="1.1"/><path d="M966,641.6999999999999 L971.6,647.3 L966,652.9 L960.4,647.3Z" fill="#8f8778" stroke="#0e0e0e" stroke-width="1.5"/><path d="M966,641.6999999999999 L966,652.9 L960.4,647.3Z" fill="#0e0e0e"/><defs><clipPath id="c981_601"><rect x="981" y="601" width="114" height="59" rx="3.5"/></clipPath></defs><rect x="980.5" y="600.5" width="115" height="60" rx="4" fill="#18181a"/><g clip-path="url(#c981_601)"><rect x="981" y="601" width="114" height="59" fill="#bdb39b"/><polygon points="981,601 1019,601 981,635.5" fill="#534d43"/><polygon points="1095,601 1057,601 1095,635.5" fill="#534d43"/><rect x="981" y="635" width="114" height="1" fill="#857d6c"/></g><path d="M993.3,642.7 Q993.636,646.364 997.3,646.7 Q993.636,647.0360000000001 993.3,650.7 Q992.9639999999999,647.0360000000001 989.3,646.7 Q992.9639999999999,646.364 993.3,642.7Z" fill="#f6f6f6"/><path d="M1000.6,641.1999999999999 Q1000.8688000000001,644.1311999999999 1003.8000000000001,644.4 Q1000.8688000000001,644.6688 1000.6,647.6 Q1000.3312,644.6688 997.4,644.4 Q1000.3312,644.1311999999999 1000.6,641.1999999999999Z" fill="#f6f6f6"/><path d="M998.5,648.7 Q998.752,651.4480000000001 1001.5,651.7 Q998.752,651.952 998.5,654.7 Q998.248,651.952 995.5,651.7 Q998.248,651.4480000000001 998.5,648.7Z" fill="#f6f6f6"/><path d="M1050.2,645.9 L1054.6,643.3 Q1058,642.5 1060,646.5 L1063,651 Q1064.5,652.5 1067.9,649.3" fill="none" stroke="#0e0e0e" stroke-width="1.5"/><circle cx="1054.6" cy="643.5" r="1.7" fill="#bdb39b" stroke="#0e0e0e" stroke-width="1.1"/><circle cx="1063.7" cy="651.2" r="1.7" fill="#bdb39b" stroke="#0e0e0e" stroke-width="1.1"/><path d="M1081,641.6999999999999 L1086.6,647.3 L1081,652.9 L1075.4,647.3Z" fill="#8f8778" stroke="#0e0e0e" stroke-width="1.5"/><path d="M1081,641.6999999999999 L1081,652.9 L1075.4,647.3Z" fill="#0e0e0e"/><defs><clipPath id="c1096_601"><rect x="1096" y="601" width="114" height="59" rx="3.5"/></clipPath></defs><rect x="1095.5" y="600.5" width="115" height="60" rx="4" fill="#18181a"/><g clip-path="url(#c1096_601)"><rect x="1096" y="601" width="114" height="59" fill="#bdb39b"/><polygon points="1096,601 1134,601 1096,635.5" fill="#534d43"/><polygon points="1210,601 1172,601 1210,635.5" fill="#534d43"/><rect x="1096" y="635" width="114" height="1" fill="#857d6c"/></g><path d="M1108.3,642.7 Q1108.636,646.364 1112.3,646.7 Q1108.636,647.0360000000001 1108.3,650.7 Q1107.964,647.0360000000001 1104.3,646.7 Q1107.964,646.364 1108.3,642.7Z" fill="#f6f6f6"/><path d="M1115.6,641.1999999999999 Q1115.8688,644.1311999999999 1118.8,644.4 Q1115.8688,644.6688 1115.6,647.6 Q1115.3311999999999,644.6688 1112.3999999999999,644.4 Q1115.3311999999999,644.1311999999999 1115.6,641.1999999999999Z" fill="#f6f6f6"/><path d="M1113.5,648.7 Q1113.752,651.4480000000001 1116.5,651.7 Q1113.752,651.952 1113.5,654.7 Q1113.248,651.952 1110.5,651.7 Q1113.248,651.4480000000001 1113.5,648.7Z" fill="#f6f6f6"/><path d="M1165.2,645.9 L1169.6,643.3 Q1173,642.5 1175,646.5 L1178,651 Q1179.5,652.5 1182.9,649.3" fill="none" stroke="#0e0e0e" stroke-width="1.5"/><circle cx="1169.6" cy="643.5" r="1.7" fill="#bdb39b" stroke="#0e0e0e" stroke-width="1.1"/><circle cx="1178.7" cy="651.2" r="1.7" fill="#bdb39b" stroke="#0e0e0e" stroke-width="1.1"/><path d="M1196,641.6999999999999 L1201.6,647.3 L1196,652.9 L1190.4,647.3Z" fill="#8f8778" stroke="#0e0e0e" stroke-width="1.5"/><path d="M1196,641.6999999999999 L1196,652.9 L1190.4,647.3Z" fill="#0e0e0e"/><defs><clipPath id="c840_663"><rect x="840" y="663" width="114" height="59" rx="3.5"/></clipPath></defs><rect x="839.5" y="662.5" width="115" height="60" rx="4" fill="#18181a"/><g clip-path="url(#c840_663)"><rect x="840" y="663" width="114" height="59" fill="#bdb39b"/><polygon points="840,663 878,663 840,697.5" fill="#534d43"/><polygon points="954,663 916,663 954,697.5" fill="#534d43"/><rect x="840" y="697" width="114" height="1" fill="#857d6c"/></g><path d="M852.3,704.7 Q852.636,708.364 856.3,708.7 Q852.636,709.0360000000001 852.3,712.7 Q851.9639999999999,709.0360000000001 848.3,708.7 Q851.9639999999999,708.364 852.3,704.7Z" fill="#f6f6f6"/><path d="M859.6,703.1999999999999 Q859.8688000000001,706.1311999999999 862.8000000000001,706.4 Q859.8688000000001,706.6688 859.6,709.6 Q859.3312,706.6688 856.4,706.4 Q859.3312,706.1311999999999 859.6,703.1999999999999Z" fill="#f6f6f6"/><path d="M857.5,710.7 Q857.752,713.4480000000001 860.5,713.7 Q857.752,713.952 857.5,716.7 Q857.248,713.952 854.5,713.7 Q857.248,713.4480000000001 857.5,710.7Z" fill="#f6f6f6"/><path d="M909.2,707.9 L913.6,705.3 Q917,704.5 919,708.5 L922,713 Q923.5,714.5 926.9,711.3" fill="none" stroke="#0e0e0e" stroke-width="1.5"/><circle cx="913.6" cy="705.5" r="1.7" fill="#bdb39b" stroke="#0e0e0e" stroke-width="1.1"/><circle cx="922.7" cy="713.2" r="1.7" fill="#bdb39b" stroke="#0e0e0e" stroke-width="1.1"/><path d="M940,703.6999999999999 L945.6,709.3 L940,714.9 L934.4,709.3Z" fill="#8f8778" stroke="#0e0e0e" stroke-width="1.5"/><path d="M940,703.6999999999999 L940,714.9 L934.4,709.3Z" fill="#0e0e0e"/><defs><clipPath id="c955_663"><rect x="955" y="663" width="114" height="59" rx="3.5"/></clipPath></defs><rect x="954.5" y="662.5" width="115" height="60" rx="4" fill="#18181a"/><g clip-path="url(#c955_663)"><rect x="955" y="663" width="114" height="59" fill="#bdb39b"/><polygon points="955,663 993,663 955,697.5" fill="#534d43"/><polygon points="1069,663 1031,663 1069,697.5" fill="#534d43"/><rect x="955" y="697" width="114" height="1" fill="#857d6c"/></g><path d="M967.3,704.7 Q967.636,708.364 971.3,708.7 Q967.636,709.0360000000001 967.3,712.7 Q966.9639999999999,709.0360000000001 963.3,708.7 Q966.9639999999999,708.364 967.3,704.7Z" fill="#f6f6f6"/><path d="M974.6,703.1999999999999 Q974.8688000000001,706.1311999999999 977.8000000000001,706.4 Q974.8688000000001,706.6688 974.6,709.6 Q974.3312,706.6688 971.4,706.4 Q974.3312,706.1311999999999 974.6,703.1999999999999Z" fill="#f6f6f6"/><path d="M972.5,710.7 Q972.752,713.4480000000001 975.5,713.7 Q972.752,713.952 972.5,716.7 Q972.248,713.952 969.5,713.7 Q972.248,713.4480000000001 972.5,710.7Z" fill="#f6f6f6"/><path d="M1024.2,707.9 L1028.6,705.3 Q1032,704.5 1034,708.5 L1037,713 Q1038.5,714.5 1041.9,711.3" fill="none" stroke="#0e0e0e" stroke-width="1.5"/><circle cx="1028.6" cy="705.5" r="1.7" fill="#bdb39b" stroke="#0e0e0e" stroke-width="1.1"/><circle cx="1037.7" cy="713.2" r="1.7" fill="#bdb39b" stroke="#0e0e0e" stroke-width="1.1"/><path d="M1055,703.6999999999999 L1060.6,709.3 L1055,714.9 L1049.4,709.3Z" fill="#8f8778" stroke="#0e0e0e" stroke-width="1.5"/><path d="M1055,703.6999999999999 L1055,714.9 L1049.4,709.3Z" fill="#0e0e0e"/><defs><clipPath id="c1070_663"><rect x="1070" y="663" width="115" height="59" rx="3.5"/></clipPath></defs><rect x="1069.5" y="662.5" width="116" height="60" rx="4" fill="#18181a"/><g clip-path="url(#c1070_663)"><rect x="1070" y="663" width="115" height="59" fill="#bdb39b"/><polygon points="1070,663 1108,663 1070,697.5" fill="#534d43"/><polygon points="1185,663 1147,663 1185,697.5" fill="#534d43"/><rect x="1070" y="697" width="115" height="1" fill="#857d6c"/></g><path d="M1082.3,704.7 Q1082.636,708.364 1086.3,708.7 Q1082.636,709.0360000000001 1082.3,712.7 Q1081.964,709.0360000000001 1078.3,708.7 Q1081.964,708.364 1082.3,704.7Z" fill="#f6f6f6"/><path d="M1089.6,703.1999999999999 Q1089.8688,706.1311999999999 1092.8,706.4 Q1089.8688,706.6688 1089.6,709.6 Q1089.3311999999999,706.6688 1086.3999999999999,706.4 Q1089.3311999999999,706.1311999999999 1089.6,703.1999999999999Z" fill="#f6f6f6"/><path d="M1087.5,710.7 Q1087.752,713.4480000000001 1090.5,713.7 Q1087.752,713.952 1087.5,716.7 Q1087.248,713.952 1084.5,713.7 Q1087.248,713.4480000000001 1087.5,710.7Z" fill="#f6f6f6"/><path d="M1140.2,707.9 L1144.6,705.3 Q1148,704.5 1150,708.5 L1153,713 Q1154.5,714.5 1157.9,711.3" fill="none" stroke="#0e0e0e" stroke-width="1.5"/><circle cx="1144.6" cy="705.5" r="1.7" fill="#bdb39b" stroke="#0e0e0e" stroke-width="1.1"/><circle cx="1153.7" cy="713.2" r="1.7" fill="#bdb39b" stroke="#0e0e0e" stroke-width="1.1"/><path d="M1171,703.6999999999999 L1176.6,709.3 L1171,714.9 L1165.4,709.3Z" fill="#8f8778" stroke="#0e0e0e" stroke-width="1.5"/><path d="M1171,703.6999999999999 L1171,714.9 L1165.4,709.3Z" fill="#0e0e0e"/><defs><clipPath id="c430_725"><rect x="430" y="725" width="358" height="59" rx="3.5"/></clipPath></defs><rect x="429.5" y="724.5" width="359" height="60" rx="4" fill="#18181a"/><g clip-path="url(#c430_725)"><rect x="430" y="725" width="358" height="59" fill="#bdb39b"/><rect x="430" y="759" width="358" height="1" fill="#857d6c"/></g><path d="M442.3,766.7 Q442.636,770.364 446.3,770.7 Q442.636,771.0360000000001 442.3,774.7 Q441.964,771.0360000000001 438.3,770.7 Q441.964,770.364 442.3,766.7Z" fill="#f6f6f6"/><path d="M449.6,765.1999999999999 Q449.8688,768.1311999999999 452.8,768.4 Q449.8688,768.6688 449.6,771.6 Q449.3312,768.6688 446.40000000000003,768.4 Q449.3312,768.1311999999999 449.6,765.1999999999999Z" fill="#f6f6f6"/><path d="M447.5,772.7 Q447.752,775.4480000000001 450.5,775.7 Q447.752,775.952 447.5,778.7 Q447.248,775.952 444.5,775.7 Q447.248,775.4480000000001 447.5,772.7Z" fill="#f6f6f6"/><defs><clipPath id="c814_725"><rect x="814" y="725" width="114" height="59" rx="3.5"/></clipPath></defs><rect x="813.5" y="724.5" width="115" height="60" rx="4" fill="#18181a"/><g clip-path="url(#c814_725)"><rect x="814" y="725" width="114" height="59" fill="#bdb39b"/><polygon points="814,725 852,725 814,759.5" fill="#534d43"/><polygon points="928,725 890,725 928,759.5" fill="#534d43"/><rect x="814" y="759" width="114" height="1" fill="#857d6c"/></g><path d="M826.3,766.7 Q826.636,770.364 830.3,770.7 Q826.636,771.0360000000001 826.3,774.7 Q825.9639999999999,771.0360000000001 822.3,770.7 Q825.9639999999999,770.364 826.3,766.7Z" fill="#f6f6f6"/><path d="M833.6,765.1999999999999 Q833.8688000000001,768.1311999999999 836.8000000000001,768.4 Q833.8688000000001,768.6688 833.6,771.6 Q833.3312,768.6688 830.4,768.4 Q833.3312,768.1311999999999 833.6,765.1999999999999Z" fill="#f6f6f6"/><path d="M831.5,772.7 Q831.752,775.4480000000001 834.5,775.7 Q831.752,775.952 831.5,778.7 Q831.248,775.952 828.5,775.7 Q831.248,775.4480000000001 831.5,772.7Z" fill="#f6f6f6"/><path d="M883.2,769.9 L887.6,767.3 Q891,766.5 893,770.5 L896,775 Q897.5,776.5 900.9,773.3" fill="none" stroke="#0e0e0e" stroke-width="1.5"/><circle cx="887.6" cy="767.5" r="1.7" fill="#bdb39b" stroke="#0e0e0e" stroke-width="1.1"/><circle cx="896.7" cy="775.2" r="1.7" fill="#bdb39b" stroke="#0e0e0e" stroke-width="1.1"/><path d="M914,765.6999999999999 L919.6,771.3 L914,776.9 L908.4,771.3Z" fill="#8f8778" stroke="#0e0e0e" stroke-width="1.5"/><path d="M914,765.6999999999999 L914,776.9 L908.4,771.3Z" fill="#0e0e0e"/><defs><clipPath id="c929_725"><rect x="929" y="725" width="115" height="59" rx="3.5"/></clipPath></defs><rect x="928.5" y="724.5" width="116" height="60" rx="4" fill="#18181a"/><g clip-path="url(#c929_725)"><rect x="929" y="725" width="115" height="59" fill="#bdb39b"/><polygon points="929,725 967,725 929,759.5" fill="#534d43"/><polygon points="1044,725 1006,725 1044,759.5" fill="#534d43"/><rect x="929" y="759" width="115" height="1" fill="#857d6c"/></g><path d="M941.3,766.7 Q941.636,770.364 945.3,770.7 Q941.636,771.0360000000001 941.3,774.7 Q940.9639999999999,771.0360000000001 937.3,770.7 Q940.9639999999999,770.364 941.3,766.7Z" fill="#f6f6f6"/><path d="M948.6,765.1999999999999 Q948.8688000000001,768.1311999999999 951.8000000000001,768.4 Q948.8688000000001,768.6688 948.6,771.6 Q948.3312,768.6688 945.4,768.4 Q948.3312,768.1311999999999 948.6,765.1999999999999Z" fill="#f6f6f6"/><path d="M946.5,772.7 Q946.752,775.4480000000001 949.5,775.7 Q946.752,775.952 946.5,778.7 Q946.248,775.952 943.5,775.7 Q946.248,775.4480000000001 946.5,772.7Z" fill="#f6f6f6"/><path d="M999.2,769.9 L1003.6,767.3 Q1007,766.5 1009,770.5 L1012,775 Q1013.5,776.5 1016.9,773.3" fill="none" stroke="#0e0e0e" stroke-width="1.5"/><circle cx="1003.6" cy="767.5" r="1.7" fill="#bdb39b" stroke="#0e0e0e" stroke-width="1.1"/><circle cx="1012.7" cy="775.2" r="1.7" fill="#bdb39b" stroke="#0e0e0e" stroke-width="1.1"/><path d="M1030,765.6999999999999 L1035.6,771.3 L1030,776.9 L1024.4,771.3Z" fill="#8f8778" stroke="#0e0e0e" stroke-width="1.5"/><path d="M1030,765.6999999999999 L1030,776.9 L1024.4,771.3Z" fill="#0e0e0e"/><defs><clipPath id="c1045_725"><rect x="1045" y="725" width="114" height="59" rx="3.5"/></clipPath></defs><rect x="1044.5" y="724.5" width="115" height="60" rx="4" fill="#18181a"/><g clip-path="url(#c1045_725)"><rect x="1045" y="725" width="114" height="59" fill="#bdb39b"/><polygon points="1045,725 1083,725 1045,759.5" fill="#534d43"/><polygon points="1159,725 1121,725 1159,759.5" fill="#534d43"/><rect x="1045" y="759" width="114" height="1" fill="#857d6c"/></g><path d="M1057.3,766.7 Q1057.636,770.364 1061.3,770.7 Q1057.636,771.0360000000001 1057.3,774.7 Q1056.964,771.0360000000001 1053.3,770.7 Q1056.964,770.364 1057.3,766.7Z" fill="#f6f6f6"/><path d="M1064.6,765.1999999999999 Q1064.8688,768.1311999999999 1067.8,768.4 Q1064.8688,768.6688 1064.6,771.6 Q1064.3311999999999,768.6688 1061.3999999999999,768.4 Q1064.3311999999999,768.1311999999999 1064.6,765.1999999999999Z" fill="#f6f6f6"/><path d="M1062.5,772.7 Q1062.752,775.4480000000001 1065.5,775.7 Q1062.752,775.952 1062.5,778.7 Q1062.248,775.952 1059.5,775.7 Q1062.248,775.4480000000001 1062.5,772.7Z" fill="#f6f6f6"/><path d="M1114.2,769.9 L1118.6,767.3 Q1122,766.5 1124,770.5 L1127,775 Q1128.5,776.5 1131.9,773.3" fill="none" stroke="#0e0e0e" stroke-width="1.5"/><circle cx="1118.6" cy="767.5" r="1.7" fill="#bdb39b" stroke="#0e0e0e" stroke-width="1.1"/><circle cx="1127.7" cy="775.2" r="1.7" fill="#bdb39b" stroke="#0e0e0e" stroke-width="1.1"/><path d="M1145,765.6999999999999 L1150.6,771.3 L1145,776.9 L1139.4,771.3Z" fill="#8f8778" stroke="#0e0e0e" stroke-width="1.5"/><path d="M1145,765.6999999999999 L1145,776.9 L1139.4,771.3Z" fill="#0e0e0e"/><defs><clipPath id="c1448_725"><rect x="1448" y="725" width="396" height="59" rx="3.5"/></clipPath></defs><rect x="1447.5" y="724.5" width="397" height="60" rx="4" fill="#18181a"/><g clip-path="url(#c1448_725)"><rect x="1448" y="725" width="396" height="59" fill="#bdb39b"/><polygon points="1448,725 1513,725 1448,759.5" fill="#534d43"/><rect x="1448" y="759" width="396" height="1" fill="#857d6c"/></g><path d="M1460.3,766.7 Q1460.636,770.364 1464.3,770.7 Q1460.636,771.0360000000001 1460.3,774.7 Q1459.964,771.0360000000001 1456.3,770.7 Q1459.964,770.364 1460.3,766.7Z" fill="#f6f6f6"/><path d="M1467.6,765.1999999999999 Q1467.8688,768.1311999999999 1470.8,768.4 Q1467.8688,768.6688 1467.6,771.6 Q1467.3311999999999,768.6688 1464.3999999999999,768.4 Q1467.3311999999999,768.1311999999999 1467.6,765.1999999999999Z" fill="#f6f6f6"/><path d="M1465.5,772.7 Q1465.752,775.4480000000001 1468.5,775.7 Q1465.752,775.952 1465.5,778.7 Q1465.248,775.952 1462.5,775.7 Q1465.248,775.4480000000001 1465.5,772.7Z" fill="#f6f6f6"/><path d="M1799.2,769.9 L1803.6,767.3 Q1807,766.5 1809,770.5 L1812,775 Q1813.5,776.5 1816.9,773.3" fill="none" stroke="#0e0e0e" stroke-width="1.5"/><circle cx="1803.6" cy="767.5" r="1.7" fill="#bdb39b" stroke="#0e0e0e" stroke-width="1.1"/><circle cx="1812.7" cy="775.2" r="1.7" fill="#bdb39b" stroke="#0e0e0e" stroke-width="1.1"/><path d="M1830,765.6999999999999 L1835.6,771.3 L1830,776.9 L1824.4,771.3Z" fill="#8f8778" stroke="#0e0e0e" stroke-width="1.5"/><path d="M1830,765.6999999999999 L1830,776.9 L1824.4,771.3Z" fill="#0e0e0e"/><defs><clipPath id="c264_787"><rect x="264" y="787" width="165" height="59" rx="3.5"/></clipPath></defs><rect x="263.5" y="786.5" width="166" height="60" rx="4" fill="#18181a"/><g clip-path="url(#c264_787)"><rect x="264" y="787" width="165" height="59" fill="#bdb39b"/><rect x="264" y="821" width="165" height="1" fill="#857d6c"/></g><path d="M276.3,828.7 Q276.636,832.364 280.3,832.7 Q276.636,833.0360000000001 276.3,836.7 Q275.964,833.0360000000001 272.3,832.7 Q275.964,832.364 276.3,828.7Z" fill="#f6f6f6"/><path d="M283.6,827.1999999999999 Q283.8688,830.1311999999999 286.8,830.4 Q283.8688,830.6688 283.6,833.6 Q283.3312,830.6688 280.40000000000003,830.4 Q283.3312,830.1311999999999 283.6,827.1999999999999Z" fill="#f6f6f6"/><path d="M281.5,834.7 Q281.752,837.4480000000001 284.5,837.7 Q281.752,837.952 281.5,840.7 Q281.248,837.952 278.5,837.7 Q281.248,837.4480000000001 281.5,834.7Z" fill="#f6f6f6"/><defs><clipPath id="c789_787"><rect x="789" y="787" width="114" height="59" rx="3.5"/></clipPath></defs><rect x="788.5" y="786.5" width="115" height="60" rx="4" fill="#18181a"/><g clip-path="url(#c789_787)"><rect x="789" y="787" width="114" height="59" fill="#bdb39b"/><polygon points="789,787 827,787 789,821.5" fill="#534d43"/><polygon points="903,787 865,787 903,821.5" fill="#534d43"/><rect x="789" y="821" width="114" height="1" fill="#857d6c"/></g><path d="M801.3,828.7 Q801.636,832.364 805.3,832.7 Q801.636,833.0360000000001 801.3,836.7 Q800.9639999999999,833.0360000000001 797.3,832.7 Q800.9639999999999,832.364 801.3,828.7Z" fill="#f6f6f6"/><path d="M808.6,827.1999999999999 Q808.8688000000001,830.1311999999999 811.8000000000001,830.4 Q808.8688000000001,830.6688 808.6,833.6 Q808.3312,830.6688 805.4,830.4 Q808.3312,830.1311999999999 808.6,827.1999999999999Z" fill="#f6f6f6"/><path d="M806.5,834.7 Q806.752,837.4480000000001 809.5,837.7 Q806.752,837.952 806.5,840.7 Q806.248,837.952 803.5,837.7 Q806.248,837.4480000000001 806.5,834.7Z" fill="#f6f6f6"/><path d="M858.2,831.9 L862.6,829.3 Q866,828.5 868,832.5 L871,837 Q872.5,838.5 875.9,835.3" fill="none" stroke="#0e0e0e" stroke-width="1.5"/><circle cx="862.6" cy="829.5" r="1.7" fill="#bdb39b" stroke="#0e0e0e" stroke-width="1.1"/><circle cx="871.7" cy="837.2" r="1.7" fill="#bdb39b" stroke="#0e0e0e" stroke-width="1.1"/><path d="M889,827.6999999999999 L894.6,833.3 L889,838.9 L883.4,833.3Z" fill="#8f8778" stroke="#0e0e0e" stroke-width="1.5"/><path d="M889,827.6999999999999 L889,838.9 L883.4,833.3Z" fill="#0e0e0e"/><defs><clipPath id="c904_787"><rect x="904" y="787" width="114" height="59" rx="3.5"/></clipPath></defs><rect x="903.5" y="786.5" width="115" height="60" rx="4" fill="#18181a"/><g clip-path="url(#c904_787)"><rect x="904" y="787" width="114" height="59" fill="#bdb39b"/><polygon points="904,787 942,787 904,821.5" fill="#534d43"/><polygon points="1018,787 980,787 1018,821.5" fill="#534d43"/><rect x="904" y="821" width="114" height="1" fill="#857d6c"/></g><path d="M916.3,828.7 Q916.636,832.364 920.3,832.7 Q916.636,833.0360000000001 916.3,836.7 Q915.9639999999999,833.0360000000001 912.3,832.7 Q915.9639999999999,832.364 916.3,828.7Z" fill="#f6f6f6"/><path d="M923.6,827.1999999999999 Q923.8688000000001,830.1311999999999 926.8000000000001,830.4 Q923.8688000000001,830.6688 923.6,833.6 Q923.3312,830.6688 920.4,830.4 Q923.3312,830.1311999999999 923.6,827.1999999999999Z" fill="#f6f6f6"/><path d="M921.5,834.7 Q921.752,837.4480000000001 924.5,837.7 Q921.752,837.952 921.5,840.7 Q921.248,837.952 918.5,837.7 Q921.248,837.4480000000001 921.5,834.7Z" fill="#f6f6f6"/><path d="M973.2,831.9 L977.6,829.3 Q981,828.5 983,832.5 L986,837 Q987.5,838.5 990.9,835.3" fill="none" stroke="#0e0e0e" stroke-width="1.5"/><circle cx="977.6" cy="829.5" r="1.7" fill="#bdb39b" stroke="#0e0e0e" stroke-width="1.1"/><circle cx="986.7" cy="837.2" r="1.7" fill="#bdb39b" stroke="#0e0e0e" stroke-width="1.1"/><path d="M1004,827.6999999999999 L1009.6,833.3 L1004,838.9 L998.4,833.3Z" fill="#8f8778" stroke="#0e0e0e" stroke-width="1.5"/><path d="M1004,827.6999999999999 L1004,838.9 L998.4,833.3Z" fill="#0e0e0e"/><defs><clipPath id="c1019_787"><rect x="1019" y="787" width="114" height="59" rx="3.5"/></clipPath></defs><rect x="1018.5" y="786.5" width="115" height="60" rx="4" fill="#18181a"/><g clip-path="url(#c1019_787)"><rect x="1019" y="787" width="114" height="59" fill="#bdb39b"/><polygon points="1019,787 1057,787 1019,821.5" fill="#534d43"/><polygon points="1133,787 1095,787 1133,821.5" fill="#534d43"/><rect x="1019" y="821" width="114" height="1" fill="#857d6c"/></g><path d="M1031.3,828.7 Q1031.636,832.364 1035.3,832.7 Q1031.636,833.0360000000001 1031.3,836.7 Q1030.964,833.0360000000001 1027.3,832.7 Q1030.964,832.364 1031.3,828.7Z" fill="#f6f6f6"/><path d="M1038.6,827.1999999999999 Q1038.8688,830.1311999999999 1041.8,830.4 Q1038.8688,830.6688 1038.6,833.6 Q1038.3311999999999,830.6688 1035.3999999999999,830.4 Q1038.3311999999999,830.1311999999999 1038.6,827.1999999999999Z" fill="#f6f6f6"/><path d="M1036.5,834.7 Q1036.752,837.4480000000001 1039.5,837.7 Q1036.752,837.952 1036.5,840.7 Q1036.248,837.952 1033.5,837.7 Q1036.248,837.4480000000001 1036.5,834.7Z" fill="#f6f6f6"/><path d="M1088.2,831.9 L1092.6,829.3 Q1096,828.5 1098,832.5 L1101,837 Q1102.5,838.5 1105.9,835.3" fill="none" stroke="#0e0e0e" stroke-width="1.5"/><circle cx="1092.6" cy="829.5" r="1.7" fill="#bdb39b" stroke="#0e0e0e" stroke-width="1.1"/><circle cx="1101.7" cy="837.2" r="1.7" fill="#bdb39b" stroke="#0e0e0e" stroke-width="1.1"/><path d="M1119,827.6999999999999 L1124.6,833.3 L1119,838.9 L1113.4,833.3Z" fill="#8f8778" stroke="#0e0e0e" stroke-width="1.5"/><path d="M1119,827.6999999999999 L1119,838.9 L1113.4,833.3Z" fill="#0e0e0e"/><defs><clipPath id="c1218_787"><rect x="1218" y="787" width="626" height="59" rx="3.5"/></clipPath></defs><rect x="1217.5" y="786.5" width="627" height="60" rx="4" fill="#18181a"/><g clip-path="url(#c1218_787)"><rect x="1218" y="787" width="626" height="59" fill="#bdb39b"/><polygon points="1218,787 1279,787 1218,821.5" fill="#534d43"/><rect x="1218" y="821" width="626" height="1" fill="#857d6c"/></g><path d="M1230.3,828.7 Q1230.636,832.364 1234.3,832.7 Q1230.636,833.0360000000001 1230.3,836.7 Q1229.964,833.0360000000001 1226.3,832.7 Q1229.964,832.364 1230.3,828.7Z" fill="#f6f6f6"/><path d="M1237.6,827.1999999999999 Q1237.8688,830.1311999999999 1240.8,830.4 Q1237.8688,830.6688 1237.6,833.6 Q1237.3311999999999,830.6688 1234.3999999999999,830.4 Q1237.3311999999999,830.1311999999999 1237.6,827.1999999999999Z" fill="#f6f6f6"/><path d="M1235.5,834.7 Q1235.752,837.4480000000001 1238.5,837.7 Q1235.752,837.952 1235.5,840.7 Q1235.248,837.952 1232.5,837.7 Q1235.248,837.4480000000001 1235.5,834.7Z" fill="#f6f6f6"/><path d="M1799.2,831.9 L1803.6,829.3 Q1807,828.5 1809,832.5 L1812,837 Q1813.5,838.5 1816.9,835.3" fill="none" stroke="#0e0e0e" stroke-width="1.5"/><circle cx="1803.6" cy="829.5" r="1.7" fill="#bdb39b" stroke="#0e0e0e" stroke-width="1.1"/><circle cx="1812.7" cy="837.2" r="1.7" fill="#bdb39b" stroke="#0e0e0e" stroke-width="1.1"/><path d="M1830,827.6999999999999 L1835.6,833.3 L1830,838.9 L1824.4,833.3Z" fill="#8f8778" stroke="#0e0e0e" stroke-width="1.5"/><path d="M1830,827.6999999999999 L1830,838.9 L1824.4,833.3Z" fill="#0e0e0e"/><rect x="232" y="849" width="556.5" height="6" rx="2" fill="#bdb39b"/><rect x="795.5" y="849" width="415.0" height="6" rx="2" fill="#bdb39b"/><rect x="1217.5" y="849" width="626.0" height="6" rx="2" fill="#bdb39b"/><rect x="1845" y="849" width="64" height="6" rx="2" fill="#bdb39b"/><rect x="789" y="848.5" width="6" height="6.5" fill="#f4f4f4"/><rect x="1211" y="848.5" width="6" height="6.5" fill="#f4f4f4"/></svg>
<div class="t" style="font-size:11px;color:#f8f8f8;font-weight:bold;left:893.70px;top:645.80px;">一索</div>
<div class="t" style="font-size:11px;color:#f8f8f8;font-weight:bold;left:1009.70px;top:645.80px;">發</div>
<div class="t" style="font-size:11px;color:#f8f8f8;font-weight:bold;left:1124.70px;top:645.80px;">九筒</div>
<div class="t" style="font-size:11px;color:#f8f8f8;font-weight:bold;left:868.70px;top:707.80px;">東</div>
<div class="t" style="font-size:11px;color:#f8f8f8;font-weight:bold;left:983.70px;top:707.80px;">九索</div>
<div class="t" style="font-size:11px;color:#f8f8f8;font-weight:bold;left:1098.70px;top:707.80px;">西</div>
<div class="t" style="font-size:11px;color:#f8f8f8;font-weight:bold;left:458.70px;top:769.80px;">歌詞</div>
<div class="t" style="font-size:11px;color:#f8f8f8;font-weight:bold;left:842.70px;top:769.80px;">北</div>
<div class="t" style="font-size:11px;color:#f8f8f8;font-weight:bold;left:957.70px;top:769.80px;">南</div>
<div class="t" style="font-size:11px;color:#f8f8f8;font-weight:bold;left:1073.70px;top:769.80px;">中</div>
<div class="t" style="font-size:11px;color:#f8f8f8;font-weight:bold;left:1476.70px;top:769.80px;">歌詞装飾</div>
<div class="t" style="font-size:11px;color:#f8f8f8;font-weight:bold;left:292.70px;top:831.80px;">歌詞</div>
<div class="t" style="font-size:11px;color:#f8f8f8;font-weight:bold;left:817.70px;top:831.80px;">一萬</div>
<div class="t" style="font-size:11px;color:#f8f8f8;font-weight:bold;left:932.70px;top:831.80px;">一筒</div>
<div class="t" style="font-size:11px;color:#f8f8f8;font-weight:bold;left:1047.70px;top:831.80px;">九萬</div>
<div class="t" style="font-size:11px;color:#f8f8f8;font-weight:bold;left:1246.70px;top:831.80px;">歌詞装飾</div>
<div class="a" style="left:0px;top:855px;width:1920px;height:3px;background:#18181b;"></div>
<div class="a" style="left:0px;top:856px;width:1910px;height:1px;background:#3a3a40;"></div>
<div class="a" style="left:0px;top:858px;width:231px;height:92px;background:#232327;"></div>
<div class="t" style="font-size:12px;color:#eeeeee;left:36.00px;top:865.00px;transform:scaleX(0.933);">A1</div>
<div class="t" style="font-size:13px;color:#e4e4e4;left:71.73px;top:864.20px;transform:scaleX(0.773);">オーディオ 1</div>
<div class="t" style="font-size:12px;color:#707072;left:207.00px;top:866.50px;transform:scaleX(0.882);">2.0</div>
<div class="t" style="font-size:13px;color:#eeeeee;font-weight:bold;left:36.00px;top:926.80px;transform:scaleX(0.929);">A2</div>
<div class="t" style="font-size:13px;color:#e4e4e4;left:71.71px;top:925.00px;transform:scaleX(0.793);">オーディオ 2</div>
<div class="t" style="font-size:12px;color:#707072;left:207.00px;top:927.20px;transform:scaleX(0.882);">2.0</div>
<svg class="a" style="left:0;top:0" width="1920" height="1009" viewBox="0 0 1920 1009"><rect x="0" y="858" width="3.2" height="92" fill="#3f8d5e"/><line x1="19.5" y1="858" x2="19.5" y2="950" stroke="#141416"/><line x1="20" y1="884.5" x2="231" y2="884.5" stroke="#141416"/><line x1="0" y1="918.5" x2="231" y2="918.5" stroke="#141416" stroke-width="1.3"/><line x1="20" y1="945.5" x2="231" y2="945.5" stroke="#141416"/><line x1="63.5" y1="858" x2="63.5" y2="884" stroke="#141416"/><line x1="63.5" y1="919" x2="63.5" y2="945" stroke="#141416"/><rect x="27.5" y="861.5" width="31.5" height="19" fill="none" stroke="#d43c30" stroke-width="1.1"/><path d="M80.5,901 V898.5 A4.5,4 0 0 1 89.5,898.5 V900" fill="none" stroke="#4a4a4e" stroke-width="1.6"/><rect x="79" y="900.5" width="12" height="7" rx="1.3" fill="#4a4a4e"/><rect x="104.6" y="895" width="15.6" height="12.4" rx="1.3" fill="none" stroke="#ededed" stroke-width="1.3"/><polyline points="110,898.6 107.8,901.2 110,903.8" fill="none" stroke="#ededed" stroke-width="1"/><polyline points="114.8,898.6 117,901.2 114.8,903.8" fill="none" stroke="#ededed" stroke-width="1"/><rect x="131" y="892.5" width="18" height="17" rx="2.5" fill="#3a3a3e"/><rect x="160" y="892.5" width="18" height="17" rx="2.5" fill="#d9443a"/></svg>
<div class="t" style="font-size:12px;color:#7c7c7e;left:136.00px;top:895.50px;">S</div>
<div class="t" style="font-size:12px;color:#fafafa;left:163.38px;top:895.50px;transform:scaleX(1.125);">M</div>
<svg class="a" style="left:0;top:0" width="1920" height="1009" viewBox="0 0 1920 1009"><rect x="232" y="858.5" width="1677" height="59" fill="#4a9163"/><rect x="232" y="891.8" width="1677" height="1" fill="#3a7450"/><rect x="232" y="919.5" width="1675.5" height="30.5" fill="#d8eee2"/><rect x="232" y="935.6" width="1675.5" height="1" fill="#a9c4b3"/><rect x="232" y="917.2" width="1678" height="2.6" fill="#19191b"/><polygon points="232.0,874.0 233.2,874.0 234.4,874.0 235.6,874.0 236.8,874.0 238.0,874.0 239.2,874.0 240.4,874.0 241.6,874.0 242.8,874.0 244.0,874.0 245.2,874.0 246.4,874.0 247.6,874.0 248.8,874.0 250.0,874.0 251.2,874.0 252.4,874.0 253.6,874.0 254.8,874.0 256.0,874.0 257.2,874.0 258.4,874.0 259.6,874.0 260.8,874.0 262.0,874.0 263.2,874.0 264.4,874.0 265.6,870.5 266.8,870.1 268.0,870.3 269.2,871.1 270.4,871.1 271.6,871.1 272.8,870.7 274.0,871.2 275.2,870.6 276.4,870.7 277.6,870.3 278.8,870.5 280.0,871.4 281.2,871.3 282.4,871.5 283.6,871.0 284.8,871.2 286.0,871.8 287.2,871.2 288.4,871.6 289.6,871.5 290.8,871.2 292.0,871.8 293.2,871.6 294.4,871.5 295.6,871.3 296.8,871.9 298.0,870.9 299.2,871.1 300.4,870.2 301.6,870.1 302.8,870.4 304.0,870.6 305.2,870.4 306.4,870.9 307.6,871.4 308.8,870.8 310.0,870.6 311.2,871.2 312.4,871.7 313.6,871.5 314.8,871.7 316.0,871.7 317.2,871.4 318.4,871.8 319.6,871.4 320.8,871.1 322.0,871.8 323.2,871.7 324.4,871.2 325.6,872.0 326.8,872.0 328.0,871.7 329.2,872.3 330.4,872.0 331.6,871.5 332.8,870.7 334.0,870.6 335.2,870.3 336.4,870.4 337.6,871.0 338.8,871.4 340.0,871.5 341.2,871.3 342.4,871.2 343.6,871.7 344.8,871.6 346.0,871.7 347.2,871.0 348.4,871.5 349.6,871.4 350.8,870.9 352.0,871.3 353.2,871.8 354.4,871.6 355.6,871.1 356.8,872.0 358.0,871.5 359.2,871.5 360.4,871.5 361.6,871.2 362.8,871.9 364.0,872.0 365.2,871.7 366.4,871.9 367.6,871.5 368.8,871.5 370.0,871.6 371.2,872.1 372.4,872.0 373.6,872.4 374.8,872.2 376.0,871.6 377.2,871.7 378.4,871.7 379.6,872.4 380.8,872.1 382.0,871.7 383.2,871.6 384.4,871.8 385.6,872.3 386.8,871.7 388.0,871.8 389.2,872.4 390.4,872.3 391.6,871.8 392.8,872.3 394.0,872.1 395.2,872.6 396.4,872.1 397.6,872.7 398.8,872.1 400.0,872.6 401.2,872.8 402.4,872.3 403.6,872.6 404.8,872.7 406.0,872.5 407.2,873.0 408.4,873.8 409.6,873.8 410.8,873.8 412.0,873.8 413.2,873.8 414.4,873.8 415.6,873.8 416.8,873.8 418.0,873.8 419.2,873.8 420.4,873.8 421.6,873.8 422.8,873.8 424.0,873.8 425.2,873.8 426.4,873.8 427.6,873.8 428.8,873.8 430.0,871.0 431.2,871.0 432.4,871.3 433.6,871.0 434.8,870.8 436.0,871.1 437.2,871.0 438.4,871.1 439.6,871.2 440.8,871.8 442.0,871.6 443.2,871.1 444.4,871.6 445.6,871.4 446.8,871.9 448.0,871.8 449.2,871.3 450.4,871.6 451.6,871.3 452.8,871.7 454.0,871.8 455.2,871.9 456.4,872.0 457.6,871.8 458.8,871.7 460.0,873.6 461.2,873.6 462.4,873.6 463.6,873.6 464.8,873.6 466.0,873.6 467.2,873.6 468.4,873.6 469.6,873.6 470.8,873.6 472.0,873.6 473.2,873.6 474.4,873.6 475.6,873.6 476.8,873.6 478.0,873.6 479.2,873.6 480.4,873.6 481.6,873.6 482.8,873.6 484.0,873.6 485.2,873.6 486.4,873.6 487.6,873.6 488.8,873.6 490.0,873.6 491.2,873.6 492.4,873.6 493.6,873.6 494.8,870.5 496.0,870.1 497.2,871.1 498.4,871.2 499.6,871.2 500.8,870.4 502.0,871.2 503.2,870.6 504.4,870.4 505.6,871.2 506.8,871.1 508.0,870.4 509.2,871.4 510.4,871.0 511.6,871.4 512.8,870.9 514.0,871.1 515.2,871.8 516.4,871.1 517.6,871.8 518.8,871.0 520.0,871.8 521.2,871.9 522.4,871.7 523.6,871.6 524.8,871.2 526.0,871.9 527.2,871.5 528.4,872.0 529.6,871.5 530.8,872.1 532.0,871.6 533.2,872.2 534.4,872.2 535.6,871.9 536.8,871.9 538.0,872.2 539.2,872.0 540.4,871.8 541.6,871.9 542.8,871.6 544.0,871.2 545.2,871.5 546.4,871.7 547.6,871.8 548.8,871.3 550.0,871.9 551.2,871.1 552.4,871.3 553.6,871.6 554.8,871.7 556.0,871.5 557.2,871.8 558.4,871.5 559.6,871.8 560.8,872.2 562.0,872.2 563.2,872.0 564.4,872.2 565.6,871.5 566.8,872.1 568.0,872.1 569.2,872.2 570.4,872.1 571.6,871.5 572.8,872.2 574.0,872.1 575.2,872.4 576.4,872.0 577.6,872.3 578.8,872.5 580.0,872.4 581.2,872.5 582.4,872.3 583.6,872.1 584.8,872.0 586.0,872.0 587.2,872.3 588.4,871.8 589.6,872.1 590.8,872.6 592.0,872.0 593.2,872.1 594.4,872.6 595.6,872.4 596.8,872.1 598.0,872.3 599.2,872.3 600.4,872.6 601.6,872.7 602.8,872.8 604.0,872.5 605.2,872.4 606.4,872.6 607.6,872.4 608.8,873.6 610.0,873.6 611.2,873.6 612.4,873.6 613.6,873.6 614.8,873.6 616.0,873.6 617.2,873.6 618.4,873.6 619.6,873.6 620.8,873.6 622.0,873.6 623.2,873.6 624.4,873.6 625.6,873.6 626.8,873.6 628.0,873.6 629.2,873.6 630.4,873.6 631.6,873.6 632.8,873.6 634.0,873.6 635.2,873.6 636.4,873.6 637.6,873.6 638.8,873.6 640.0,873.6 641.2,873.6 642.4,873.6 643.6,873.6 644.8,873.6 646.0,873.6 647.2,873.6 648.4,873.6 649.6,873.6 650.8,873.6 652.0,873.6 653.2,873.6 654.4,873.6 655.6,873.6 656.8,873.6 658.0,873.6 659.2,873.6 660.4,873.6 661.6,873.6 662.8,873.6 664.0,873.6 665.2,873.6 666.4,873.6 667.6,873.6 668.8,873.6 670.0,873.6 671.2,873.6 672.4,873.6 673.6,873.6 674.8,873.6 676.0,873.6 677.2,873.6 678.4,873.6 679.6,873.6 680.8,873.6 682.0,873.6 683.2,873.6 684.4,873.6 685.6,873.6 686.8,873.6 688.0,873.6 689.2,873.6 690.4,873.6 691.6,873.6 692.8,873.6 694.0,873.6 695.2,873.6 696.4,873.6 697.6,873.6 698.8,873.6 700.0,873.9 701.2,873.9 702.4,873.9 703.6,873.9 704.8,873.9 706.0,873.9 707.2,873.9 708.4,873.9 709.6,873.9 710.8,873.9 712.0,873.9 713.2,873.9 714.4,873.9 715.6,873.9 716.8,873.9 718.0,873.9 719.2,873.9 720.4,873.9 721.6,873.9 722.8,873.9 724.0,873.9 725.2,873.9 726.4,873.9 727.6,873.9 728.8,873.9 730.0,873.9 731.2,873.9 732.4,873.9 733.6,873.9 734.8,873.9 736.0,873.9 737.2,873.9 738.4,873.9 739.6,873.9 740.8,873.9 742.0,873.9 743.2,873.9 744.4,873.9 745.6,873.9 746.8,873.9 748.0,873.9 749.2,873.9 750.4,873.9 751.6,873.9 752.8,873.9 754.0,873.9 755.2,873.9 756.4,873.9 757.6,873.9 758.8,873.9 760.0,873.9 761.2,873.9 762.4,873.9 763.6,873.9 764.8,873.9 766.0,873.9 767.2,873.9 768.4,873.9 769.6,873.9 770.8,873.9 772.0,873.9 773.2,873.9 774.4,873.9 775.6,873.9 776.8,873.9 778.0,873.9 779.2,873.9 780.4,873.9 781.6,873.9 782.8,873.9 784.0,873.9 785.2,873.9 786.4,873.9 787.6,873.9 788.8,873.9 790.0,873.9 791.2,873.9 792.4,870.4 793.6,870.3 794.8,870.2 796.0,871.1 797.2,870.3 798.4,870.3 799.6,870.6 800.8,870.7 802.0,870.3 803.2,870.5 804.4,871.2 805.6,870.5 806.8,870.7 808.0,871.4 809.2,870.7 810.4,870.7 811.6,870.9 812.8,871.0 814.0,870.5 815.2,870.5 816.4,871.6 817.6,870.7 818.8,871.2 820.0,871.5 821.2,871.5 822.4,871.6 823.6,870.8 824.8,870.9 826.0,870.9 827.2,871.7 828.4,871.4 829.6,872.0 830.8,871.5 832.0,871.9 833.2,871.7 834.4,872.1 835.6,871.2 836.8,871.2 838.0,871.2 839.2,871.8 840.4,871.2 841.6,871.9 842.8,872.0 844.0,872.2 845.2,872.0 846.4,872.1 847.6,871.9 848.8,872.0 850.0,870.3 851.2,870.7 852.4,870.3 853.6,870.6 854.8,870.7 856.0,870.7 857.2,871.3 858.4,870.5 859.6,871.1 860.8,871.3 862.0,870.6 863.2,871.0 864.4,871.1 865.6,871.6 866.8,871.6 868.0,871.3 869.2,870.9 870.4,871.4 871.6,871.7 872.8,871.6 874.0,871.8 875.2,871.4 876.4,871.3 877.6,871.7 878.8,871.7 880.0,872.1 881.2,871.2 882.4,871.7 883.6,871.4 884.8,872.0 886.0,871.9 887.2,871.4 888.4,871.5 889.6,872.3 890.8,871.6 892.0,871.9 893.2,872.1 894.4,871.8 895.6,871.7 896.8,872.4 898.0,872.1 899.2,871.8 900.4,870.3 901.6,870.6 902.8,871.2 904.0,871.0 905.2,870.5 906.4,871.2 907.6,870.5 908.8,871.2 910.0,870.7 911.2,870.9 912.4,870.7 913.6,871.1 914.8,870.3 916.0,870.5 917.2,871.3 918.4,870.4 919.6,871.2 920.8,871.0 922.0,871.2 923.2,870.9 924.4,871.4 925.6,871.3 926.8,871.0 928.0,870.9 929.2,871.2 930.4,870.8 931.6,871.0 932.8,871.6 934.0,871.6 935.2,871.4 936.4,871.7 937.6,871.3 938.8,871.9 940.0,871.8 941.2,871.9 942.4,872.0 943.6,871.2 944.8,871.4 946.0,871.2 947.2,872.0 948.4,871.5 949.6,871.6 950.8,871.9 952.0,872.1 953.2,872.1 954.4,871.5 955.6,871.5 956.8,872.1 958.0,871.7 959.2,872.4 960.4,871.2 961.6,871.4 962.8,870.6 964.0,871.2 965.2,870.9 966.4,871.7 967.6,870.8 968.8,871.0 970.0,871.5 971.2,870.9 972.4,871.7 973.6,871.6 974.8,872.0 976.0,871.1 977.2,871.1 978.4,871.9 979.6,871.2 980.8,871.8 982.0,871.8 983.2,871.4 984.4,871.5 985.6,871.6 986.8,871.8 988.0,872.1 989.2,871.7 990.4,872.3 991.6,872.3 992.8,872.5 994.0,872.3 995.2,871.9 996.4,872.4 997.6,872.6 998.8,872.1 1000.0,871.0 1001.2,870.5 1002.4,870.3 1003.6,870.5 1004.8,870.3 1006.0,870.6 1007.2,870.4 1008.4,871.1 1009.6,871.2 1010.8,870.7 1012.0,871.0 1013.2,870.8 1014.4,870.5 1015.6,870.3 1016.8,870.9 1018.0,870.5 1019.2,871.5 1020.4,871.4 1021.6,870.4 1022.8,870.5 1024.0,870.6 1025.2,871.3 1026.4,870.5 1027.6,871.0 1028.8,871.4 1030.0,871.5 1031.2,871.4 1032.4,871.0 1033.6,871.7 1034.8,871.0 1036.0,871.4 1037.2,870.9 1038.4,871.8 1039.6,871.4 1040.8,871.2 1042.0,871.7 1043.2,871.4 1044.4,871.6 1045.6,871.6 1046.8,871.6 1048.0,871.0 1049.2,871.6 1050.4,871.2 1051.6,872.0 1052.8,871.6 1054.0,871.6 1055.2,871.6 1056.4,872.1 1057.6,871.4 1058.8,872.0 1060.0,871.8 1061.2,872.0 1062.4,871.6 1063.6,872.1 1064.8,871.4 1066.0,872.0 1067.2,871.3 1068.4,871.8 1069.6,871.4 1070.8,871.4 1072.0,871.5 1073.2,871.6 1074.4,872.0 1075.6,871.6 1076.8,872.2 1078.0,871.9 1079.2,872.3 1080.4,871.8 1081.6,872.4 1082.8,871.8 1084.0,871.7 1085.2,872.0 1086.4,872.0 1087.6,870.7 1088.8,870.8 1090.0,870.8 1091.2,871.4 1092.4,870.8 1093.6,870.5 1094.8,870.9 1096.0,871.0 1097.2,871.4 1098.4,871.5 1099.6,871.0 1100.8,870.9 1102.0,870.9 1103.2,871.2 1104.4,871.2 1105.6,870.7 1106.8,870.9 1108.0,871.1 1109.2,871.7 1110.4,871.4 1111.6,871.0 1112.8,871.2 1114.0,872.0 1115.2,871.3 1116.4,871.2 1117.6,871.3 1118.8,871.7 1120.0,872.0 1121.2,871.8 1122.4,872.3 1123.6,872.2 1124.8,871.7 1126.0,872.2 1127.2,872.3 1128.4,871.9 1129.6,871.7 1130.8,871.1 1132.0,871.7 1133.2,871.1 1134.4,870.9 1135.6,870.7 1136.8,871.4 1138.0,871.4 1139.2,871.1 1140.4,871.0 1141.6,871.2 1142.8,871.3 1144.0,871.6 1145.2,871.9 1146.4,871.3 1147.6,871.4 1148.8,871.8 1150.0,871.3 1151.2,872.0 1152.4,871.9 1153.6,871.8 1154.8,871.5 1156.0,871.4 1157.2,872.0 1158.4,871.9 1159.6,872.0 1160.8,871.3 1162.0,871.7 1163.2,872.2 1164.4,871.6 1165.6,871.6 1166.8,871.3 1168.0,872.0 1169.2,872.2 1170.4,871.9 1171.6,872.2 1172.8,872.3 1174.0,871.4 1175.2,872.1 1176.4,871.8 1177.6,871.6 1178.8,872.1 1180.0,872.3 1181.2,871.7 1182.4,872.4 1183.6,871.7 1184.8,871.8 1186.0,872.2 1187.2,872.2 1188.4,872.2 1189.6,871.9 1190.8,871.9 1192.0,872.0 1193.2,871.9 1194.4,872.3 1195.6,871.7 1196.8,871.8 1198.0,872.4 1199.2,872.0 1200.4,872.0 1201.6,871.9 1202.8,872.4 1204.0,872.1 1205.2,872.1 1206.4,872.3 1207.6,872.1 1208.8,872.4 1210.0,872.3 1211.2,872.6 1212.4,872.7 1213.6,872.7 1214.8,872.7 1216.0,872.5 1217.2,872.8 1218.4,872.5 1219.6,873.0 1220.8,871.2 1222.0,870.8 1223.2,870.3 1224.4,871.3 1225.6,870.2 1226.8,871.2 1228.0,871.3 1229.2,870.3 1230.4,870.6 1231.6,870.7 1232.8,871.4 1234.0,870.6 1235.2,871.1 1236.4,871.5 1237.6,871.2 1238.8,871.1 1240.0,870.4 1241.2,870.6 1242.4,871.6 1243.6,871.1 1244.8,871.3 1246.0,871.1 1247.2,870.7 1248.4,870.8 1249.6,871.7 1250.8,870.9 1252.0,871.8 1253.2,871.2 1254.4,871.6 1255.6,871.4 1256.8,871.6 1258.0,871.6 1259.2,871.1 1260.4,871.8 1261.6,871.8 1262.8,871.2 1264.0,871.3 1265.2,871.6 1266.4,871.1 1267.6,871.1 1268.8,871.8 1270.0,871.1 1271.2,871.7 1272.4,871.8 1273.6,871.6 1274.8,871.4 1276.0,871.8 1277.2,872.0 1278.4,871.5 1279.6,872.0 1280.8,871.5 1282.0,872.1 1283.2,871.4 1284.4,872.1 1285.6,871.6 1286.8,872.2 1288.0,872.1 1289.2,871.9 1290.4,872.1 1291.6,871.5 1292.8,872.3 1294.0,872.3 1295.2,871.6 1296.4,871.8 1297.6,872.3 1298.8,872.4 1300.0,870.6 1301.2,870.6 1302.4,870.2 1303.6,870.3 1304.8,871.0 1306.0,870.7 1307.2,870.0 1308.4,870.5 1309.6,870.7 1310.8,870.3 1312.0,870.3 1313.2,870.2 1314.4,870.5 1315.6,871.0 1316.8,871.3 1318.0,870.4 1319.2,870.6 1320.4,870.9 1321.6,870.7 1322.8,870.6 1324.0,871.3 1325.2,870.6 1326.4,870.9 1327.6,871.5 1328.8,871.4 1330.0,870.5 1331.2,871.5 1332.4,871.0 1333.6,871.1 1334.8,870.7 1336.0,871.2 1337.2,871.5 1338.4,871.3 1339.6,871.6 1340.8,871.4 1342.0,871.5 1343.2,871.8 1344.4,871.4 1345.6,871.5 1346.8,871.6 1348.0,870.9 1349.2,871.7 1350.4,871.5 1351.6,871.8 1352.8,871.1 1354.0,871.5 1355.2,871.8 1356.4,871.7 1357.6,871.2 1358.8,871.6 1360.0,871.5 1361.2,871.3 1362.4,871.3 1363.6,871.8 1364.8,871.7 1366.0,872.2 1367.2,871.9 1368.4,871.9 1369.6,871.8 1370.8,871.6 1372.0,871.4 1373.2,872.2 1374.4,871.5 1375.6,872.2 1376.8,871.8 1378.0,872.4 1379.2,871.8 1380.4,871.3 1381.6,871.2 1382.8,871.0 1384.0,870.4 1385.2,871.3 1386.4,870.8 1387.6,870.7 1388.8,870.6 1390.0,871.3 1391.2,871.0 1392.4,871.1 1393.6,871.0 1394.8,871.4 1396.0,871.1 1397.2,871.1 1398.4,871.1 1399.6,871.1 1400.8,871.7 1402.0,871.2 1403.2,871.0 1404.4,871.4 1405.6,870.7 1406.8,871.1 1408.0,871.8 1409.2,871.1 1410.4,871.5 1411.6,871.4 1412.8,871.0 1414.0,871.2 1415.2,871.6 1416.4,871.6 1417.6,871.4 1418.8,871.8 1420.0,871.6 1421.2,871.2 1422.4,871.2 1423.6,871.6 1424.8,871.6 1426.0,871.5 1427.2,871.8 1428.4,871.9 1429.6,871.5 1430.8,872.1 1432.0,871.3 1433.2,872.2 1434.4,872.2 1435.6,871.4 1436.8,871.7 1438.0,871.4 1439.2,871.7 1440.4,871.7 1441.6,871.7 1442.8,871.8 1444.0,871.7 1445.2,872.2 1446.4,871.7 1447.6,871.9 1448.8,871.7 1450.0,872.0 1451.2,872.2 1452.4,872.2 1453.6,872.0 1454.8,872.5 1456.0,872.5 1457.2,871.9 1458.4,871.8 1459.6,872.6 1460.8,870.6 1462.0,870.1 1463.2,870.9 1464.4,870.6 1465.6,871.3 1466.8,871.5 1468.0,871.3 1469.2,871.4 1470.4,871.4 1471.6,870.7 1472.8,870.7 1474.0,871.5 1475.2,870.7 1476.4,870.7 1477.6,870.9 1478.8,871.1 1480.0,871.4 1481.2,870.8 1482.4,871.7 1483.6,870.8 1484.8,871.4 1486.0,871.6 1487.2,871.2 1488.4,871.4 1489.6,871.3 1490.8,871.7 1492.0,871.4 1493.2,871.2 1494.4,871.5 1495.6,870.9 1496.8,871.3 1498.0,871.9 1499.2,871.2 1500.4,871.6 1501.6,871.0 1502.8,871.4 1504.0,871.6 1505.2,871.7 1506.4,871.4 1507.6,871.3 1508.8,872.1 1510.0,871.7 1511.2,871.3 1512.4,872.1 1513.6,871.4 1514.8,871.6 1516.0,871.4 1517.2,871.6 1518.4,871.9 1519.6,871.7 1520.8,872.1 1522.0,871.4 1523.2,871.7 1524.4,871.9 1525.6,872.1 1526.8,871.6 1528.0,872.3 1529.2,871.7 1530.4,871.9 1531.6,871.7 1532.8,872.0 1534.0,872.3 1535.2,872.3 1536.4,872.2 1537.6,872.2 1538.8,872.4 1540.0,870.4 1541.2,871.5 1542.4,870.7 1543.6,871.0 1544.8,871.1 1546.0,871.7 1547.2,870.8 1548.4,871.2 1549.6,871.0 1550.8,870.9 1552.0,871.0 1553.2,871.7 1554.4,871.8 1555.6,871.9 1556.8,871.5 1558.0,871.6 1559.2,871.2 1560.4,871.6 1561.6,872.1 1562.8,872.0 1564.0,871.6 1565.2,871.7 1566.4,871.9 1567.6,871.5 1568.8,872.2 1570.0,872.2 1571.2,871.7 1572.4,871.8 1573.6,871.8 1574.8,872.0 1576.0,872.5 1577.2,872.0 1578.4,872.1 1579.6,872.2 1580.8,872.6 1582.0,872.2 1583.2,872.0 1584.4,872.2 1585.6,871.9 1586.8,871.8 1588.0,872.4 1589.2,872.3 1590.4,871.8 1591.6,872.4 1592.8,872.4 1594.0,871.8 1595.2,872.2 1596.4,871.9 1597.6,872.1 1598.8,872.4 1600.0,872.0 1601.2,872.5 1602.4,872.4 1603.6,872.5 1604.8,872.0 1606.0,872.5 1607.2,872.4 1608.4,872.6 1609.6,872.7 1610.8,872.2 1612.0,872.4 1613.2,872.6 1614.4,872.5 1615.6,872.0 1616.8,872.7 1618.0,872.1 1619.2,872.3 1620.4,872.1 1621.6,872.3 1622.8,872.8 1624.0,872.3 1625.2,872.7 1626.4,872.2 1627.6,872.5 1628.8,872.8 1630.0,872.4 1631.2,872.9 1632.4,872.5 1633.6,872.8 1634.8,872.6 1636.0,872.5 1637.2,872.9 1638.4,872.5 1639.6,872.6 1640.8,872.5 1642.0,872.5 1643.2,872.8 1644.4,872.5 1645.6,872.6 1646.8,873.0 1648.0,872.9 1649.2,872.9 1650.4,873.2 1651.6,872.9 1652.8,873.1 1654.0,872.7 1655.2,873.0 1656.4,873.0 1657.6,873.2 1658.8,873.8 1660.0,873.8 1661.2,873.8 1662.4,873.8 1663.6,873.8 1664.8,873.8 1666.0,873.8 1667.2,873.8 1668.4,873.8 1669.6,873.8 1670.8,873.8 1672.0,873.8 1673.2,873.8 1674.4,873.8 1675.6,873.8 1676.8,873.8 1678.0,873.8 1679.2,873.8 1680.4,873.8 1681.6,873.8 1682.8,873.8 1684.0,873.8 1685.2,873.8 1686.4,873.8 1687.6,873.8 1688.8,873.8 1690.0,873.8 1691.2,873.8 1692.4,873.8 1693.6,873.8 1694.8,873.8 1696.0,873.8 1697.2,873.8 1698.4,873.8 1699.6,873.8 1700.8,873.8 1702.0,873.8 1703.2,873.8 1704.4,873.8 1705.6,873.8 1706.8,873.8 1708.0,873.8 1709.2,873.8 1710.4,873.8 1711.6,873.8 1712.8,873.8 1714.0,873.8 1715.2,873.8 1716.4,873.8 1717.6,873.8 1718.8,873.8 1720.0,873.8 1721.2,873.8 1722.4,873.8 1723.6,873.8 1724.8,873.8 1726.0,873.8 1727.2,873.8 1728.4,873.8 1729.6,873.8 1730.8,873.8 1732.0,873.8 1733.2,873.8 1734.4,873.8 1735.6,873.8 1736.8,873.8 1738.0,873.8 1739.2,873.8 1740.4,873.8 1741.6,873.8 1742.8,873.8 1744.0,873.8 1745.2,873.8 1746.4,873.8 1747.6,873.8 1748.8,873.8 1750.0,873.8 1751.2,873.8 1752.4,873.8 1753.6,873.8 1754.8,873.8 1756.0,873.8 1757.2,873.8 1758.4,873.8 1759.6,873.8 1760.8,873.8 1762.0,873.8 1763.2,873.8 1764.4,873.8 1765.6,873.8 1766.8,873.8 1768.0,873.8 1769.2,873.8 1770.4,873.8 1771.6,873.8 1772.8,873.8 1774.0,873.8 1775.2,873.8 1776.4,873.8 1777.6,873.8 1778.8,873.8 1780.0,873.8 1781.2,873.8 1782.4,873.8 1783.6,873.8 1784.8,873.8 1786.0,873.8 1787.2,873.8 1788.4,873.8 1789.6,873.8 1790.8,873.8 1792.0,873.8 1793.2,873.8 1794.4,873.8 1795.6,873.8 1796.8,873.8 1798.0,873.8 1799.2,873.8 1800.4,873.8 1801.6,873.8 1802.8,873.8 1804.0,873.8 1805.2,873.8 1806.4,873.8 1807.6,873.8 1808.8,873.8 1810.0,873.8 1811.2,873.8 1812.4,873.8 1813.6,873.8 1814.8,873.8 1816.0,873.8 1817.2,873.8 1818.4,873.8 1819.6,873.8 1820.8,873.8 1822.0,873.8 1823.2,873.8 1824.4,873.8 1825.6,873.8 1826.8,873.8 1828.0,873.8 1829.2,873.8 1830.4,873.8 1831.6,873.8 1832.8,873.8 1834.0,873.8 1835.2,873.8 1836.4,873.8 1837.6,873.8 1838.8,873.8 1840.0,873.8 1841.2,873.8 1842.4,873.8 1843.6,873.8 1844.8,873.8 1846.0,869.9 1847.2,870.5 1848.4,870.5 1849.6,870.0 1850.8,871.1 1852.0,871.1 1853.2,871.4 1854.4,870.6 1855.6,871.5 1856.8,870.9 1858.0,870.8 1859.2,870.6 1860.4,871.6 1861.6,871.2 1862.8,871.5 1864.0,871.4 1865.2,871.2 1866.4,871.7 1867.6,871.2 1868.8,871.1 1870.0,871.6 1871.2,871.2 1872.4,871.7 1873.6,871.4 1874.8,872.0 1876.0,871.8 1877.2,871.6 1878.4,871.6 1879.6,872.3 1880.8,870.1 1882.0,871.0 1883.2,870.6 1884.4,870.8 1885.6,871.0 1886.8,871.6 1888.0,870.5 1889.2,870.6 1890.4,870.8 1891.6,870.8 1892.8,871.1 1894.0,871.2 1895.2,871.4 1896.4,871.3 1897.6,871.5 1898.8,871.1 1900.0,871.9 1901.2,872.1 1902.4,871.4 1903.6,872.1 1904.8,871.9 1906.0,872.3 1907.2,872.2 1907.2,878.3 1906.0,878.1 1904.8,878.2 1903.6,878.6 1902.4,878.7 1901.2,878.9 1900.0,879.0 1898.8,878.7 1897.6,878.9 1896.4,878.8 1895.2,879.7 1894.0,878.9 1892.8,879.0 1891.6,878.7 1890.4,879.9 1889.2,879.7 1888.0,879.9 1886.8,879.1 1885.6,879.7 1884.4,879.1 1883.2,879.6 1882.0,879.8 1880.8,880.6 1879.6,878.6 1878.4,879.0 1877.2,879.1 1876.0,879.2 1874.8,878.6 1873.6,878.6 1872.4,879.4 1871.2,879.0 1870.0,878.9 1868.8,879.6 1867.6,878.7 1866.4,879.3 1865.2,879.7 1864.0,878.8 1862.8,878.9 1861.6,879.4 1860.4,879.0 1859.2,879.8 1858.0,879.0 1856.8,879.7 1855.6,879.9 1854.4,879.3 1853.2,879.2 1852.0,880.4 1850.8,879.4 1849.6,879.6 1848.4,879.3 1847.2,880.2 1846.0,880.2 1844.8,876.3 1843.6,876.3 1842.4,876.3 1841.2,876.3 1840.0,876.3 1838.8,876.3 1837.6,876.3 1836.4,876.3 1835.2,876.3 1834.0,876.3 1832.8,876.3 1831.6,876.3 1830.4,876.3 1829.2,876.3 1828.0,876.3 1826.8,876.3 1825.6,876.3 1824.4,876.3 1823.2,876.3 1822.0,876.3 1820.8,876.3 1819.6,876.3 1818.4,876.3 1817.2,876.3 1816.0,876.3 1814.8,876.3 1813.6,876.3 1812.4,876.3 1811.2,876.3 1810.0,876.3 1808.8,876.3 1807.6,876.3 1806.4,876.3 1805.2,876.3 1804.0,876.3 1802.8,876.3 1801.6,876.3 1800.4,876.3 1799.2,876.3 1798.0,876.3 1796.8,876.3 1795.6,876.3 1794.4,876.3 1793.2,876.3 1792.0,876.3 1790.8,876.3 1789.6,876.3 1788.4,876.3 1787.2,876.3 1786.0,876.3 1784.8,876.3 1783.6,876.3 1782.4,876.3 1781.2,876.3 1780.0,876.3 1778.8,876.3 1777.6,876.3 1776.4,876.3 1775.2,876.3 1774.0,876.3 1772.8,876.3 1771.6,876.3 1770.4,876.3 1769.2,876.3 1768.0,876.3 1766.8,876.3 1765.6,876.3 1764.4,876.3 1763.2,876.3 1762.0,876.3 1760.8,876.3 1759.6,876.3 1758.4,876.3 1757.2,876.3 1756.0,876.3 1754.8,876.3 1753.6,876.3 1752.4,876.3 1751.2,876.3 1750.0,876.3 1748.8,876.3 1747.6,876.3 1746.4,876.3 1745.2,876.3 1744.0,876.3 1742.8,876.3 1741.6,876.3 1740.4,876.3 1739.2,876.3 1738.0,876.3 1736.8,876.3 1735.6,876.3 1734.4,876.3 1733.2,876.3 1732.0,876.3 1730.8,876.3 1729.6,876.3 1728.4,876.3 1727.2,876.3 1726.0,876.3 1724.8,876.3 1723.6,876.3 1722.4,876.3 1721.2,876.3 1720.0,876.3 1718.8,876.3 1717.6,876.3 1716.4,876.3 1715.2,876.3 1714.0,876.3 1712.8,876.3 1711.6,876.3 1710.4,876.3 1709.2,876.3 1708.0,876.3 1706.8,876.3 1705.6,876.3 1704.4,876.3 1703.2,876.3 1702.0,876.3 1700.8,876.3 1699.6,876.3 1698.4,876.3 1697.2,876.3 1696.0,876.3 1694.8,876.3 1693.6,876.3 1692.4,876.3 1691.2,876.3 1690.0,876.3 1688.8,876.3 1687.6,876.3 1686.4,876.3 1685.2,876.3 1684.0,876.3 1682.8,876.3 1681.6,876.3 1680.4,876.3 1679.2,876.3 1678.0,876.3 1676.8,876.3 1675.6,876.3 1674.4,876.3 1673.2,876.3 1672.0,876.3 1670.8,876.3 1669.6,876.3 1668.4,876.3 1667.2,876.3 1666.0,876.3 1664.8,876.3 1663.6,876.3 1662.4,876.3 1661.2,876.3 1660.0,876.3 1658.8,876.3 1657.6,877.7 1656.4,877.6 1655.2,877.6 1654.0,877.7 1652.8,877.6 1651.6,877.5 1650.4,877.5 1649.2,877.6 1648.0,877.3 1646.8,877.8 1645.6,877.4 1644.4,877.6 1643.2,877.2 1642.0,877.9 1640.8,877.5 1639.6,877.3 1638.4,877.6 1637.2,877.4 1636.0,877.8 1634.8,877.9 1633.6,877.5 1632.4,877.8 1631.2,877.5 1630.0,877.6 1628.8,878.0 1627.6,877.5 1626.4,877.6 1625.2,877.8 1624.0,877.9 1622.8,877.5 1621.6,877.8 1620.4,877.5 1619.2,877.8 1618.0,877.6 1616.8,877.8 1615.6,878.4 1614.4,878.5 1613.2,877.8 1612.0,877.9 1610.8,877.8 1609.6,878.5 1608.4,878.6 1607.2,878.5 1606.0,878.2 1604.8,878.0 1603.6,878.0 1602.4,878.1 1601.2,878.6 1600.0,878.3 1598.8,877.8 1597.6,877.9 1596.4,878.3 1595.2,878.2 1594.0,878.5 1592.8,878.8 1591.6,878.3 1590.4,878.8 1589.2,878.8 1588.0,878.9 1586.8,878.1 1585.6,878.0 1584.4,878.1 1583.2,878.1 1582.0,878.1 1580.8,877.9 1579.6,878.4 1578.4,878.0 1577.2,878.7 1576.0,877.9 1574.8,878.8 1573.6,878.6 1572.4,878.0 1571.2,878.9 1570.0,878.3 1568.8,878.1 1567.6,879.1 1566.4,878.3 1565.2,878.6 1564.0,879.2 1562.8,878.8 1561.6,879.3 1560.4,878.7 1559.2,878.4 1558.0,879.5 1556.8,879.4 1555.6,878.5 1554.4,878.7 1553.2,878.5 1552.0,879.7 1550.8,879.5 1549.6,879.2 1548.4,879.0 1547.2,879.3 1546.0,880.0 1544.8,878.8 1543.6,879.3 1542.4,879.0 1541.2,879.7 1540.0,879.4 1538.8,877.9 1537.6,878.4 1536.4,878.4 1535.2,878.6 1534.0,878.1 1532.8,878.5 1531.6,878.5 1530.4,878.9 1529.2,878.2 1528.0,878.9 1526.8,878.5 1525.6,878.9 1524.4,878.3 1523.2,878.8 1522.0,878.4 1520.8,879.0 1519.6,879.0 1518.4,878.3 1517.2,879.2 1516.0,879.1 1514.8,878.6 1513.6,879.3 1512.4,879.2 1511.2,879.3 1510.0,879.0 1508.8,878.7 1507.6,878.7 1506.4,879.5 1505.2,879.2 1504.0,879.5 1502.8,878.8 1501.6,879.5 1500.4,879.2 1499.2,879.5 1498.0,879.7 1496.8,878.9 1495.6,879.6 1494.4,879.6 1493.2,879.1 1492.0,879.5 1490.8,879.7 1489.6,879.6 1488.4,879.4 1487.2,878.8 1486.0,879.9 1484.8,879.7 1483.6,878.9 1482.4,879.7 1481.2,878.8 1480.0,880.2 1478.8,880.1 1477.6,879.9 1476.4,879.0 1475.2,880.1 1474.0,880.0 1472.8,879.2 1471.6,879.3 1470.4,879.0 1469.2,880.3 1468.0,880.4 1466.8,880.1 1465.6,879.1 1464.4,879.4 1463.2,879.3 1462.0,879.8 1460.8,880.6 1459.6,878.1 1458.4,878.2 1457.2,878.4 1456.0,877.9 1454.8,878.4 1453.6,878.8 1452.4,878.3 1451.2,878.3 1450.0,878.2 1448.8,878.8 1447.6,878.3 1446.4,878.9 1445.2,878.0 1444.0,878.1 1442.8,878.5 1441.6,878.3 1440.4,878.7 1439.2,878.8 1438.0,878.8 1436.8,879.0 1435.6,878.8 1434.4,878.4 1433.2,878.5 1432.0,878.8 1430.8,879.1 1429.6,879.2 1428.4,879.0 1427.2,878.7 1426.0,879.2 1424.8,879.5 1423.6,878.7 1422.4,878.9 1421.2,878.8 1420.0,879.1 1418.8,879.0 1417.6,879.4 1416.4,879.1 1415.2,879.6 1414.0,879.3 1412.8,878.6 1411.6,879.2 1410.4,879.8 1409.2,879.8 1408.0,879.4 1406.8,879.5 1405.6,878.8 1404.4,879.2 1403.2,879.8 1402.0,879.5 1400.8,879.9 1399.6,879.9 1398.4,879.4 1397.2,879.0 1396.0,878.9 1394.8,879.0 1393.6,879.2 1392.4,880.1 1391.2,879.9 1390.0,879.9 1388.8,880.1 1387.6,880.2 1386.4,880.1 1385.2,880.3 1384.0,880.2 1382.8,879.3 1381.6,880.2 1380.4,879.3 1379.2,878.3 1378.0,879.0 1376.8,878.1 1375.6,879.0 1374.4,878.9 1373.2,879.0 1372.0,879.1 1370.8,878.6 1369.6,878.9 1368.4,878.7 1367.2,878.5 1366.0,879.1 1364.8,878.5 1363.6,878.6 1362.4,878.6 1361.2,878.7 1360.0,878.5 1358.8,878.7 1357.6,879.4 1356.4,879.2 1355.2,879.6 1354.0,879.2 1352.8,879.3 1351.6,879.5 1350.4,878.8 1349.2,879.6 1348.0,879.2 1346.8,879.5 1345.6,879.0 1344.4,879.5 1343.2,879.2 1342.0,879.2 1340.8,878.8 1339.6,880.0 1338.4,879.8 1337.2,879.7 1336.0,880.1 1334.8,879.5 1333.6,879.7 1332.4,879.8 1331.2,879.7 1330.0,879.6 1328.8,880.0 1327.6,879.7 1326.4,880.3 1325.2,879.5 1324.0,879.9 1322.8,880.4 1321.6,879.6 1320.4,879.7 1319.2,879.5 1318.0,880.2 1316.8,879.8 1315.6,880.1 1314.4,879.9 1313.2,880.2 1312.0,880.3 1310.8,880.6 1309.6,879.6 1308.4,880.4 1307.2,880.0 1306.0,880.5 1304.8,880.3 1303.6,880.1 1302.4,880.2 1301.2,880.7 1300.0,879.5 1298.8,878.1 1297.6,878.6 1296.4,878.4 1295.2,878.8 1294.0,878.4 1292.8,879.0 1291.6,878.8 1290.4,878.2 1289.2,878.2 1288.0,878.4 1286.8,878.3 1285.6,879.0 1284.4,878.5 1283.2,878.4 1282.0,878.7 1280.8,878.9 1279.6,878.7 1278.4,879.1 1277.2,879.2 1276.0,878.7 1274.8,879.1 1273.6,879.2 1272.4,878.9 1271.2,879.4 1270.0,879.0 1268.8,878.7 1267.6,878.5 1266.4,878.6 1265.2,879.0 1264.0,878.9 1262.8,879.5 1261.6,879.5 1260.4,879.4 1259.2,879.2 1258.0,878.9 1256.8,879.8 1255.6,879.7 1254.4,879.3 1253.2,879.7 1252.0,879.4 1250.8,880.0 1249.6,879.0 1248.4,879.0 1247.2,878.9 1246.0,879.1 1244.8,879.8 1243.6,879.9 1242.4,879.4 1241.2,879.8 1240.0,879.6 1238.8,879.4 1237.6,880.0 1236.4,879.3 1235.2,879.6 1234.0,879.3 1232.8,879.2 1231.6,879.5 1230.4,880.3 1229.2,880.3 1228.0,879.2 1226.8,879.4 1225.6,880.6 1224.4,880.5 1223.2,880.6 1222.0,880.5 1220.8,880.2 1219.6,877.4 1218.4,877.9 1217.2,877.6 1216.0,877.7 1214.8,878.4 1213.6,877.6 1212.4,878.4 1211.2,878.2 1210.0,877.9 1208.8,878.3 1207.6,878.5 1206.4,878.5 1205.2,878.6 1204.0,878.4 1202.8,878.6 1201.6,878.1 1200.4,878.1 1199.2,878.7 1198.0,878.0 1196.8,877.8 1195.6,878.0 1194.4,878.5 1193.2,878.4 1192.0,878.3 1190.8,878.2 1189.6,878.8 1188.4,878.7 1187.2,878.0 1186.0,878.1 1184.8,878.4 1183.6,878.5 1182.4,878.9 1181.2,878.8 1180.0,879.0 1178.8,878.4 1177.6,878.3 1176.4,878.8 1175.2,878.8 1174.0,878.3 1172.8,878.7 1171.6,879.0 1170.4,878.4 1169.2,878.8 1168.0,879.2 1166.8,879.1 1165.6,878.7 1164.4,878.7 1163.2,879.0 1162.0,878.6 1160.8,879.2 1159.6,879.1 1158.4,878.5 1157.2,879.5 1156.0,878.9 1154.8,878.6 1153.6,879.1 1152.4,878.8 1151.2,878.9 1150.0,878.5 1148.8,878.7 1147.6,879.6 1146.4,879.0 1145.2,878.7 1144.0,878.5 1142.8,879.4 1141.6,879.8 1140.4,878.9 1139.2,878.7 1138.0,878.8 1136.8,879.6 1135.6,879.4 1134.4,879.0 1133.2,879.2 1132.0,880.0 1130.8,879.9 1129.6,878.4 1128.4,878.3 1127.2,878.5 1126.0,878.8 1124.8,879.0 1123.6,879.1 1122.4,878.3 1121.2,878.5 1120.0,878.5 1118.8,879.3 1117.6,878.4 1116.4,878.6 1115.2,878.5 1114.0,878.8 1112.8,879.6 1111.6,878.7 1110.4,879.7 1109.2,879.8 1108.0,879.6 1106.8,879.9 1105.6,878.8 1104.4,879.2 1103.2,878.8 1102.0,879.8 1100.8,878.9 1099.6,878.9 1098.4,879.5 1097.2,879.5 1096.0,879.1 1094.8,879.3 1093.6,880.2 1092.4,879.4 1091.2,880.0 1090.0,879.8 1088.8,880.2 1087.6,880.1 1086.4,878.2 1085.2,878.5 1084.0,878.0 1082.8,878.0 1081.6,878.5 1080.4,878.9 1079.2,878.3 1078.0,878.4 1076.8,878.5 1075.6,878.3 1074.4,879.0 1073.2,878.3 1072.0,878.3 1070.8,878.8 1069.6,878.6 1068.4,878.2 1067.2,879.3 1066.0,878.4 1064.8,879.3 1063.6,878.8 1062.4,879.3 1061.2,878.6 1060.0,878.9 1058.8,879.1 1057.6,879.4 1056.4,879.0 1055.2,878.6 1054.0,879.5 1052.8,879.4 1051.6,879.5 1050.4,878.7 1049.2,878.7 1048.0,879.7 1046.8,879.0 1045.6,879.2 1044.4,879.8 1043.2,878.9 1042.0,879.5 1040.8,878.7 1039.6,879.3 1038.4,878.8 1037.2,879.4 1036.0,879.0 1034.8,879.0 1033.6,879.2 1032.4,879.0 1031.2,879.6 1030.0,879.1 1028.8,879.3 1027.6,879.7 1026.4,879.0 1025.2,879.9 1024.0,879.5 1022.8,879.4 1021.6,879.7 1020.4,879.2 1019.2,879.4 1018.0,880.3 1016.8,880.2 1015.6,879.2 1014.4,880.0 1013.2,879.4 1012.0,880.5 1010.8,879.6 1009.6,880.4 1008.4,879.5 1007.2,879.4 1006.0,879.7 1004.8,879.6 1003.6,879.4 1002.4,880.5 1001.2,880.3 1000.0,879.9 998.8,878.1 997.6,878.2 996.4,877.8 995.2,878.7 994.0,878.8 992.8,878.4 991.6,878.0 990.4,878.7 989.2,878.1 988.0,878.4 986.8,878.4 985.6,878.9 984.4,878.9 983.2,878.4 982.0,878.8 980.8,878.5 979.6,879.4 978.4,878.9 977.2,878.4 976.0,879.2 974.8,879.4 973.6,878.8 972.4,879.4 971.2,879.3 970.0,878.9 968.8,879.8 967.6,879.0 966.4,878.8 965.2,878.8 964.0,879.9 962.8,878.9 961.6,879.4 960.4,880.2 959.2,878.4 958.0,878.4 956.8,878.9 955.6,878.3 954.4,878.2 953.2,878.5 952.0,878.1 950.8,878.5 949.6,878.6 948.4,878.2 947.2,879.3 946.0,878.6 944.8,879.5 943.6,879.4 942.4,878.8 941.2,878.4 940.0,879.6 938.8,878.9 937.6,879.6 936.4,879.0 935.2,878.8 934.0,879.7 932.8,879.5 931.6,878.9 930.4,879.0 929.2,878.9 928.0,879.7 926.8,879.0 925.6,879.3 924.4,878.8 923.2,880.1 922.0,879.2 920.8,879.8 919.6,878.9 918.4,879.9 917.2,879.3 916.0,879.7 914.8,879.9 913.6,879.7 912.4,879.1 911.2,879.4 910.0,880.0 908.8,879.2 907.6,880.2 906.4,879.6 905.2,879.7 904.0,880.7 902.8,880.5 901.6,880.2 900.4,880.5 899.2,878.5 898.0,878.5 896.8,878.0 895.6,878.1 894.4,878.8 893.2,878.9 892.0,878.0 890.8,878.5 889.6,878.8 888.4,878.1 887.2,879.0 886.0,878.6 884.8,878.4 883.6,878.4 882.4,878.9 881.2,878.4 880.0,878.6 878.8,878.7 877.6,879.0 876.4,878.9 875.2,879.5 874.0,878.8 872.8,878.6 871.6,878.6 870.4,878.7 869.2,879.8 868.0,878.9 866.8,879.8 865.6,878.9 864.4,879.2 863.2,879.1 862.0,879.1 860.8,879.8 859.6,879.3 858.4,879.0 857.2,879.0 856.0,879.8 854.8,879.6 853.6,879.1 852.4,879.8 851.2,880.4 850.0,880.3 848.8,879.0 847.6,878.3 846.4,878.4 845.2,879.1 844.0,879.1 842.8,878.2 841.6,878.7 840.4,878.9 839.2,878.7 838.0,878.6 836.8,879.2 835.6,878.5 834.4,879.3 833.2,879.4 832.0,878.9 830.8,878.8 829.6,879.1 828.4,878.6 827.2,879.7 826.0,879.5 824.8,879.3 823.6,878.8 822.4,879.4 821.2,879.5 820.0,880.0 818.8,879.1 817.6,880.1 816.4,879.5 815.2,880.2 814.0,879.2 812.8,879.1 811.6,879.6 810.4,879.4 809.2,880.0 808.0,879.4 806.8,879.1 805.6,879.6 804.4,879.5 803.2,879.3 802.0,880.1 800.8,880.3 799.6,879.8 798.4,880.8 797.2,879.6 796.0,879.8 794.8,879.8 793.6,879.5 792.4,880.3 791.2,876.2 790.0,876.2 788.8,876.2 787.6,876.2 786.4,876.2 785.2,876.2 784.0,876.2 782.8,876.2 781.6,876.2 780.4,876.2 779.2,876.2 778.0,876.2 776.8,876.2 775.6,876.2 774.4,876.2 773.2,876.2 772.0,876.2 770.8,876.2 769.6,876.2 768.4,876.2 767.2,876.2 766.0,876.2 764.8,876.2 763.6,876.2 762.4,876.2 761.2,876.2 760.0,876.2 758.8,876.2 757.6,876.2 756.4,876.2 755.2,876.2 754.0,876.2 752.8,876.2 751.6,876.2 750.4,876.2 749.2,876.2 748.0,876.2 746.8,876.2 745.6,876.2 744.4,876.2 743.2,876.2 742.0,876.2 740.8,876.2 739.6,876.2 738.4,876.2 737.2,876.2 736.0,876.2 734.8,876.2 733.6,876.2 732.4,876.2 731.2,876.2 730.0,876.2 728.8,876.2 727.6,876.2 726.4,876.2 725.2,876.2 724.0,876.2 722.8,876.2 721.6,876.2 720.4,876.2 719.2,876.2 718.0,876.2 716.8,876.2 715.6,876.2 714.4,876.2 713.2,876.2 712.0,876.2 710.8,876.2 709.6,876.2 708.4,876.2 707.2,876.2 706.0,876.2 704.8,876.2 703.6,876.2 702.4,876.2 701.2,876.2 700.0,876.2 698.8,876.5 697.6,876.5 696.4,876.5 695.2,876.5 694.0,876.5 692.8,876.5 691.6,876.5 690.4,876.5 689.2,876.5 688.0,876.5 686.8,876.5 685.6,876.5 684.4,876.5 683.2,876.5 682.0,876.5 680.8,876.5 679.6,876.5 678.4,876.5 677.2,876.5 676.0,876.5 674.8,876.5 673.6,876.5 672.4,876.5 671.2,876.5 670.0,876.5 668.8,876.5 667.6,876.5 666.4,876.5 665.2,876.5 664.0,876.5 662.8,876.5 661.6,876.5 660.4,876.5 659.2,876.5 658.0,876.5 656.8,876.5 655.6,876.5 654.4,876.5 653.2,876.5 652.0,876.5 650.8,876.5 649.6,876.5 648.4,876.5 647.2,876.5 646.0,876.5 644.8,876.5 643.6,876.5 642.4,876.5 641.2,876.5 640.0,876.5 638.8,876.5 637.6,876.5 636.4,876.5 635.2,876.5 634.0,876.5 632.8,876.5 631.6,876.5 630.4,876.5 629.2,876.5 628.0,876.5 626.8,876.5 625.6,876.5 624.4,876.5 623.2,876.5 622.0,876.5 620.8,876.5 619.6,876.5 618.4,876.5 617.2,876.5 616.0,876.5 614.8,876.5 613.6,876.5 612.4,876.5 611.2,876.5 610.0,876.5 608.8,876.5 607.6,878.0 606.4,877.4 605.2,878.0 604.0,878.0 602.8,878.2 601.6,877.8 600.4,877.6 599.2,878.2 598.0,878.4 596.8,878.3 595.6,878.4 594.4,878.1 593.2,878.4 592.0,878.3 590.8,878.5 589.6,878.3 588.4,877.9 587.2,878.1 586.0,878.6 584.8,878.4 583.6,878.3 582.4,878.1 581.2,877.9 580.0,878.3 578.8,878.2 577.6,878.4 576.4,878.4 575.2,878.3 574.0,878.3 572.8,879.0 571.6,878.6 570.4,879.1 569.2,878.5 568.0,878.6 566.8,878.4 565.6,878.8 564.4,879.1 563.2,878.3 562.0,879.0 560.8,878.3 559.6,878.6 558.4,879.0 557.2,879.2 556.0,879.4 554.8,878.9 553.6,879.3 552.4,878.8 551.2,878.5 550.0,878.9 548.8,879.1 547.6,878.4 546.4,878.5 545.2,878.7 544.0,878.8 542.8,878.9 541.6,878.8 540.4,878.7 539.2,878.2 538.0,878.1 536.8,879.0 535.6,878.4 534.4,879.0 533.2,879.1 532.0,879.1 530.8,879.3 529.6,878.7 528.4,878.4 527.2,879.2 526.0,879.5 524.8,878.7 523.6,879.6 522.4,878.6 521.2,879.5 520.0,878.9 518.8,879.8 517.6,879.9 516.4,879.3 515.2,879.1 514.0,879.3 512.8,878.8 511.6,879.3 510.4,879.3 509.2,879.5 508.0,880.1 506.8,879.7 505.6,880.4 504.4,880.4 503.2,879.3 502.0,880.2 500.8,880.5 499.6,880.2 498.4,879.6 497.2,879.9 496.0,879.5 494.8,880.8 493.6,876.5 492.4,876.5 491.2,876.5 490.0,876.5 488.8,876.5 487.6,876.5 486.4,876.5 485.2,876.5 484.0,876.5 482.8,876.5 481.6,876.5 480.4,876.5 479.2,876.5 478.0,876.5 476.8,876.5 475.6,876.5 474.4,876.5 473.2,876.5 472.0,876.5 470.8,876.5 469.6,876.5 468.4,876.5 467.2,876.5 466.0,876.5 464.8,876.5 463.6,876.5 462.4,876.5 461.2,876.5 460.0,876.5 458.8,878.1 457.6,878.8 456.4,879.0 455.2,878.6 454.0,878.9 452.8,878.7 451.6,878.7 450.4,879.1 449.2,878.9 448.0,878.7 446.8,879.1 445.6,879.5 444.4,879.2 443.2,879.3 442.0,879.3 440.8,879.8 439.6,879.0 438.4,878.9 437.2,879.6 436.0,880.2 434.8,880.3 433.6,879.7 432.4,880.4 431.2,879.8 430.0,880.1 428.8,876.3 427.6,876.3 426.4,876.3 425.2,876.3 424.0,876.3 422.8,876.3 421.6,876.3 420.4,876.3 419.2,876.3 418.0,876.3 416.8,876.3 415.6,876.3 414.4,876.3 413.2,876.3 412.0,876.3 410.8,876.3 409.6,876.3 408.4,876.3 407.2,877.4 406.0,877.4 404.8,878.0 403.6,878.1 402.4,877.9 401.2,877.4 400.0,877.9 398.8,878.1 397.6,878.3 396.4,878.3 395.2,877.8 394.0,877.8 392.8,878.6 391.6,878.1 390.4,878.6 389.2,878.6 388.0,878.4 386.8,878.7 385.6,878.7 384.4,878.9 383.2,878.6 382.0,879.1 380.8,878.4 379.6,878.0 378.4,878.2 377.2,878.9 376.0,878.4 374.8,878.7 373.6,878.3 372.4,878.1 371.2,878.6 370.0,878.9 368.8,879.0 367.6,879.3 366.4,878.5 365.2,879.1 364.0,879.2 362.8,878.7 361.6,879.2 360.4,879.5 359.2,878.4 358.0,878.6 356.8,879.6 355.6,878.7 354.4,878.9 353.2,878.7 352.0,879.2 350.8,879.9 349.6,878.8 348.4,879.2 347.2,878.9 346.0,880.0 344.8,879.3 343.6,879.1 342.4,878.9 341.2,879.1 340.0,879.0 338.8,879.9 337.6,879.6 336.4,880.2 335.2,880.2 334.0,879.2 332.8,880.1 331.6,878.7 330.4,878.7 329.2,878.6 328.0,878.4 326.8,878.8 325.6,878.5 324.4,878.5 323.2,879.4 322.0,878.9 320.8,879.5 319.6,879.6 318.4,879.1 317.2,879.7 316.0,879.0 314.8,879.7 313.6,878.9 312.4,879.4 311.2,879.8 310.0,879.3 308.8,880.4 307.6,880.0 306.4,880.0 305.2,880.5 304.0,879.8 302.8,880.1 301.6,879.7 300.4,880.2 299.2,880.4 298.0,880.2 296.8,878.9 295.6,878.3 294.4,878.6 293.2,879.3 292.0,879.0 290.8,879.2 289.6,878.8 288.4,879.2 287.2,879.1 286.0,878.9 284.8,878.8 283.6,879.2 282.4,879.6 281.2,880.0 280.0,879.1 278.8,879.4 277.6,879.1 276.4,879.7 275.2,880.6 274.0,879.5 272.8,880.5 271.6,879.4 270.4,880.1 269.2,880.2 268.0,880.1 266.8,879.7 265.6,879.8 264.4,876.1 263.2,876.1 262.0,876.1 260.8,876.1 259.6,876.1 258.4,876.1 257.2,876.1 256.0,876.1 254.8,876.1 253.6,876.1 252.4,876.1 251.2,876.1 250.0,876.1 248.8,876.1 247.6,876.1 246.4,876.1 245.2,876.1 244.0,876.1 242.8,876.1 241.6,876.1 240.4,876.1 239.2,876.1 238.0,876.1 236.8,876.1 235.6,876.1 234.4,876.1 233.2,876.1 232.0,876.1" fill="#d8ece0"/><rect x="232" y="874.4" width="1677" height="1.1" fill="#aec7b7"/><rect x="232.0" y="920" width="1" height="2.4" fill="#3f8d5a"/><rect x="233.0" y="920" width="1" height="5.7" fill="#3f8d5a"/><rect x="233.0" y="946.6" width="1" height="3.4" fill="#3f8d5a"/><rect x="234.0" y="920" width="1" height="4.8" fill="#3f8d5a"/><rect x="234.0" y="948.3" width="1" height="1.7" fill="#3f8d5a"/><rect x="235.0" y="920" width="1" height="3.7" fill="#3f8d5a"/><rect x="235.0" y="947.9" width="1" height="2.1" fill="#3f8d5a"/><rect x="236.0" y="920" width="1" height="3.8" fill="#3f8d5a"/><rect x="236.0" y="948.3" width="1" height="1.7" fill="#3f8d5a"/><rect x="237.0" y="920" width="1" height="2.3" fill="#3f8d5a"/><rect x="237.0" y="948.7" width="1" height="1.3" fill="#3f8d5a"/><rect x="238.0" y="920" width="1" height="4.4" fill="#3f8d5a"/><rect x="239.0" y="920" width="1" height="5.8" fill="#3f8d5a"/><rect x="239.0" y="947.7" width="1" height="2.3" fill="#3f8d5a"/><rect x="240.0" y="920" width="1" height="3.9" fill="#3f8d5a"/><rect x="240.0" y="948.3" width="1" height="1.7" fill="#3f8d5a"/><rect x="241.0" y="920" width="1" height="1.0" fill="#3f8d5a"/><rect x="242.0" y="920" width="1" height="1.9" fill="#3f8d5a"/><rect x="243.0" y="920" width="1" height="1.0" fill="#3f8d5a"/><rect x="244.0" y="920" width="1" height="3.3" fill="#3f8d5a"/><rect x="244.0" y="948.3" width="1" height="1.7" fill="#3f8d5a"/><rect x="245.0" y="920" width="1" height="1.5" fill="#3f8d5a"/><rect x="246.0" y="920" width="1" height="1.0" fill="#3f8d5a"/><rect x="247.0" y="920" width="1" height="3.0" fill="#3f8d5a"/><rect x="247.0" y="948.6" width="1" height="1.4" fill="#3f8d5a"/><rect x="248.0" y="920" width="1" height="4.6" fill="#3f8d5a"/><rect x="248.0" y="946.9" width="1" height="3.1" fill="#3f8d5a"/><rect x="249.0" y="920" width="1" height="4.0" fill="#3f8d5a"/><rect x="249.0" y="947.4" width="1" height="2.6" fill="#3f8d5a"/><rect x="250.0" y="920" width="1" height="5.3" fill="#3f8d5a"/><rect x="250.0" y="947.2" width="1" height="2.8" fill="#3f8d5a"/><rect x="251.0" y="920" width="1" height="5.1" fill="#3f8d5a"/><rect x="251.0" y="946.4" width="1" height="3.6" fill="#3f8d5a"/><rect x="252.0" y="920" width="1" height="5.9" fill="#3f8d5a"/><rect x="253.0" y="920" width="1" height="4.4" fill="#3f8d5a"/><rect x="253.0" y="947.6" width="1" height="2.4" fill="#3f8d5a"/><rect x="254.0" y="920" width="1" height="1.0" fill="#3f8d5a"/><rect x="255.0" y="920" width="1" height="5.4" fill="#3f8d5a"/><rect x="255.0" y="946.2" width="1" height="3.8" fill="#3f8d5a"/><rect x="256.0" y="920" width="1" height="3.3" fill="#3f8d5a"/><rect x="256.0" y="948.3" width="1" height="1.7" fill="#3f8d5a"/><rect x="257.0" y="920" width="1" height="5.1" fill="#3f8d5a"/><rect x="257.0" y="947.8" width="1" height="2.2" fill="#3f8d5a"/><rect x="258.0" y="920" width="1" height="4.2" fill="#3f8d5a"/><rect x="258.0" y="948.0" width="1" height="2.0" fill="#3f8d5a"/><rect x="259.0" y="920" width="1" height="5.5" fill="#3f8d5a"/><rect x="259.0" y="946.3" width="1" height="3.7" fill="#3f8d5a"/><rect x="260.0" y="920" width="1" height="3.6" fill="#3f8d5a"/><rect x="260.0" y="948.7" width="1" height="1.3" fill="#3f8d5a"/><rect x="261.0" y="920" width="1" height="1.8" fill="#3f8d5a"/><rect x="261.0" y="949.0" width="1" height="1.0" fill="#3f8d5a"/><rect x="262.0" y="920" width="1" height="1.4" fill="#3f8d5a"/><rect x="262.0" y="949.1" width="1" height="0.9" fill="#3f8d5a"/><rect x="263.0" y="920" width="1" height="5.7" fill="#3f8d5a"/><rect x="263.0" y="946.1" width="1" height="3.9" fill="#3f8d5a"/><rect x="264.0" y="920" width="1" height="1.0" fill="#3f8d5a"/><rect x="265.0" y="920" width="1" height="6.1" fill="#3f8d5a"/><rect x="266.0" y="920" width="1" height="4.3" fill="#3f8d5a"/><rect x="266.0" y="947.7" width="1" height="2.3" fill="#3f8d5a"/><rect x="267.0" y="920" width="1" height="1.0" fill="#3f8d5a"/><rect x="280.0" y="920" width="1" height="1.9" fill="#3f8d5a"/><rect x="280.0" y="949.0" width="1" height="1.0" fill="#3f8d5a"/><rect x="289.0" y="920" width="1" height="2.9" fill="#3f8d5a"/><rect x="289.0" y="948.1" width="1" height="1.9" fill="#3f8d5a"/><rect x="290.0" y="920" width="1" height="2.1" fill="#3f8d5a"/><rect x="290.0" y="948.5" width="1" height="1.5" fill="#3f8d5a"/><rect x="291.0" y="920" width="1" height="2.8" fill="#3f8d5a"/><rect x="292.0" y="920" width="1" height="1.0" fill="#3f8d5a"/><rect x="293.0" y="920" width="1" height="4.5" fill="#3f8d5a"/><rect x="293.0" y="946.9" width="1" height="3.1" fill="#3f8d5a"/><rect x="294.0" y="920" width="1" height="1.4" fill="#3f8d5a"/><rect x="295.0" y="920" width="1" height="2.8" fill="#3f8d5a"/><rect x="295.0" y="948.9" width="1" height="1.1" fill="#3f8d5a"/><rect x="302.0" y="920" width="1" height="1.9" fill="#3f8d5a"/><rect x="302.0" y="948.8" width="1" height="1.2" fill="#3f8d5a"/><rect x="305.0" y="920" width="1" height="1.8" fill="#3f8d5a"/><rect x="305.0" y="948.8" width="1" height="1.2" fill="#3f8d5a"/><rect x="316.0" y="920" width="1" height="1.6" fill="#3f8d5a"/><rect x="317.0" y="920" width="1" height="1.5" fill="#3f8d5a"/><rect x="318.0" y="920" width="1" height="4.1" fill="#3f8d5a"/><rect x="318.0" y="947.3" width="1" height="2.7" fill="#3f8d5a"/><rect x="319.0" y="920" width="1" height="5.6" fill="#3f8d5a"/><rect x="319.0" y="948.8" width="1" height="1.2" fill="#3f8d5a"/><rect x="320.0" y="920" width="1" height="5.4" fill="#3f8d5a"/><rect x="320.0" y="947.6" width="1" height="2.4" fill="#3f8d5a"/><rect x="321.0" y="920" width="1" height="3.1" fill="#3f8d5a"/><rect x="321.0" y="948.9" width="1" height="1.1" fill="#3f8d5a"/><rect x="322.0" y="920" width="1" height="1.4" fill="#3f8d5a"/><rect x="322.0" y="949.0" width="1" height="1.0" fill="#3f8d5a"/><rect x="323.0" y="920" width="1" height="3.1" fill="#3f8d5a"/><rect x="323.0" y="948.4" width="1" height="1.6" fill="#3f8d5a"/><rect x="324.0" y="920" width="1" height="1.1" fill="#3f8d5a"/><rect x="325.0" y="920" width="1" height="6.3" fill="#3f8d5a"/><rect x="325.0" y="946.8" width="1" height="3.2" fill="#3f8d5a"/><rect x="326.0" y="920" width="1" height="2.5" fill="#3f8d5a"/><rect x="327.0" y="920" width="1" height="1.0" fill="#3f8d5a"/><rect x="328.0" y="920" width="1" height="6.0" fill="#3f8d5a"/><rect x="328.0" y="946.0" width="1" height="4.0" fill="#3f8d5a"/><rect x="329.0" y="920" width="1" height="4.5" fill="#3f8d5a"/><rect x="329.0" y="946.8" width="1" height="3.2" fill="#3f8d5a"/><rect x="330.0" y="920" width="1" height="6.3" fill="#3f8d5a"/><rect x="330.0" y="947.6" width="1" height="2.4" fill="#3f8d5a"/><rect x="331.0" y="920" width="1" height="5.1" fill="#3f8d5a"/><rect x="331.0" y="948.1" width="1" height="1.9" fill="#3f8d5a"/><rect x="332.0" y="920" width="1" height="5.9" fill="#3f8d5a"/><rect x="332.0" y="946.9" width="1" height="3.1" fill="#3f8d5a"/><rect x="341.0" y="920" width="1" height="2.0" fill="#3f8d5a"/><rect x="341.0" y="949.0" width="1" height="1.0" fill="#3f8d5a"/><rect x="343.0" y="920" width="1" height="1.6" fill="#3f8d5a"/><rect x="343.0" y="948.9" width="1" height="1.1" fill="#3f8d5a"/><rect x="345.0" y="920" width="1" height="1.3" fill="#3f8d5a"/><rect x="346.0" y="920" width="1" height="0.7" fill="#3f8d5a"/><rect x="347.0" y="920" width="1" height="1.2" fill="#3f8d5a"/><rect x="348.0" y="920" width="1" height="1.6" fill="#3f8d5a"/><rect x="348.0" y="949.0" width="1" height="1.0" fill="#3f8d5a"/><rect x="349.0" y="920" width="1" height="2.1" fill="#3f8d5a"/><rect x="349.0" y="948.6" width="1" height="1.4" fill="#3f8d5a"/><rect x="350.0" y="920" width="1" height="1.2" fill="#3f8d5a"/><rect x="351.0" y="920" width="1" height="1.9" fill="#3f8d5a"/><rect x="351.0" y="948.7" width="1" height="1.3" fill="#3f8d5a"/><rect x="353.0" y="920" width="1" height="1.0" fill="#3f8d5a"/><rect x="354.0" y="920" width="1" height="3.7" fill="#3f8d5a"/><rect x="354.0" y="948.8" width="1" height="1.2" fill="#3f8d5a"/><rect x="355.0" y="920" width="1" height="2.5" fill="#3f8d5a"/><rect x="355.0" y="948.2" width="1" height="1.8" fill="#3f8d5a"/><rect x="356.0" y="920" width="1" height="3.2" fill="#3f8d5a"/><rect x="356.0" y="948.7" width="1" height="1.3" fill="#3f8d5a"/><rect x="357.0" y="920" width="1" height="2.2" fill="#3f8d5a"/><rect x="357.0" y="948.5" width="1" height="1.5" fill="#3f8d5a"/><rect x="358.0" y="920" width="1" height="4.0" fill="#3f8d5a"/><rect x="358.0" y="947.8" width="1" height="2.2" fill="#3f8d5a"/><rect x="359.0" y="920" width="1" height="5.4" fill="#3f8d5a"/><rect x="359.0" y="947.4" width="1" height="2.6" fill="#3f8d5a"/><rect x="360.0" y="920" width="1" height="4.3" fill="#3f8d5a"/><rect x="360.0" y="948.1" width="1" height="1.9" fill="#3f8d5a"/><rect x="361.0" y="920" width="1" height="1.3" fill="#3f8d5a"/><rect x="362.0" y="920" width="1" height="1.0" fill="#3f8d5a"/><rect x="363.0" y="920" width="1" height="1.5" fill="#3f8d5a"/><rect x="364.0" y="920" width="1" height="3.9" fill="#3f8d5a"/><rect x="364.0" y="948.3" width="1" height="1.7" fill="#3f8d5a"/><rect x="365.0" y="920" width="1" height="2.9" fill="#3f8d5a"/><rect x="365.0" y="948.9" width="1" height="1.1" fill="#3f8d5a"/><rect x="366.0" y="920" width="1" height="5.1" fill="#3f8d5a"/><rect x="366.0" y="947.9" width="1" height="2.1" fill="#3f8d5a"/><rect x="367.0" y="920" width="1" height="6.1" fill="#3f8d5a"/><rect x="367.0" y="946.0" width="1" height="4.0" fill="#3f8d5a"/><rect x="368.0" y="920" width="1" height="1.0" fill="#3f8d5a"/><rect x="369.0" y="920" width="1" height="2.6" fill="#3f8d5a"/><rect x="370.0" y="920" width="1" height="4.8" fill="#3f8d5a"/><rect x="370.0" y="947.8" width="1" height="2.2" fill="#3f8d5a"/><rect x="371.0" y="920" width="1" height="4.8" fill="#3f8d5a"/><rect x="371.0" y="947.0" width="1" height="3.0" fill="#3f8d5a"/><rect x="372.0" y="920" width="1" height="5.8" fill="#3f8d5a"/><rect x="372.0" y="947.4" width="1" height="2.6" fill="#3f8d5a"/><rect x="373.0" y="920" width="1" height="2.0" fill="#3f8d5a"/><rect x="374.0" y="920" width="1" height="1.0" fill="#3f8d5a"/><rect x="375.0" y="920" width="1" height="1.0" fill="#3f8d5a"/><rect x="376.0" y="920" width="1" height="2.1" fill="#3f8d5a"/><rect x="376.0" y="949.0" width="1" height="1.0" fill="#3f8d5a"/><rect x="377.0" y="920" width="1" height="0.9" fill="#3f8d5a"/><rect x="378.0" y="920" width="1" height="2.0" fill="#3f8d5a"/><rect x="378.0" y="948.7" width="1" height="1.3" fill="#3f8d5a"/><rect x="379.0" y="920" width="1" height="5.1" fill="#3f8d5a"/><rect x="379.0" y="948.0" width="1" height="2.0" fill="#3f8d5a"/><rect x="380.0" y="920" width="1" height="4.9" fill="#3f8d5a"/><rect x="380.0" y="947.7" width="1" height="2.3" fill="#3f8d5a"/><rect x="381.0" y="920" width="1" height="5.7" fill="#3f8d5a"/><rect x="381.0" y="946.3" width="1" height="3.7" fill="#3f8d5a"/><rect x="382.0" y="920" width="1" height="1.0" fill="#3f8d5a"/><rect x="383.0" y="920" width="1" height="1.0" fill="#3f8d5a"/><rect x="384.0" y="920" width="1" height="5.5" fill="#3f8d5a"/><rect x="384.0" y="948.0" width="1" height="2.0" fill="#3f8d5a"/><rect x="385.0" y="920" width="1" height="1.0" fill="#3f8d5a"/><rect x="386.0" y="920" width="1" height="5.0" fill="#3f8d5a"/><rect x="386.0" y="947.6" width="1" height="2.4" fill="#3f8d5a"/><rect x="387.0" y="920" width="1" height="5.7" fill="#3f8d5a"/><rect x="387.0" y="947.6" width="1" height="2.4" fill="#3f8d5a"/><rect x="388.0" y="920" width="1" height="6.2" fill="#3f8d5a"/><rect x="388.0" y="946.9" width="1" height="3.1" fill="#3f8d5a"/><rect x="389.0" y="920" width="1" height="1.0" fill="#3f8d5a"/><rect x="390.0" y="920" width="1" height="5.7" fill="#3f8d5a"/><rect x="390.0" y="946.6" width="1" height="3.4" fill="#3f8d5a"/><rect x="391.0" y="920" width="1" height="1.1" fill="#3f8d5a"/><rect x="392.0" y="920" width="1" height="4.0" fill="#3f8d5a"/><rect x="392.0" y="947.2" width="1" height="2.8" fill="#3f8d5a"/><rect x="393.0" y="920" width="1" height="5.3" fill="#3f8d5a"/><rect x="393.0" y="948.9" width="1" height="1.1" fill="#3f8d5a"/><rect x="394.0" y="920" width="1" height="5.5" fill="#3f8d5a"/><rect x="394.0" y="947.8" width="1" height="2.2" fill="#3f8d5a"/><rect x="395.0" y="920" width="1" height="6.4" fill="#3f8d5a"/><rect x="395.0" y="946.2" width="1" height="3.8" fill="#3f8d5a"/><rect x="396.0" y="920" width="1" height="2.5" fill="#3f8d5a"/><rect x="397.0" y="920" width="1" height="3.4" fill="#3f8d5a"/><rect x="397.0" y="948.7" width="1" height="1.3" fill="#3f8d5a"/><rect x="398.0" y="920" width="1" height="1.7" fill="#3f8d5a"/><rect x="398.0" y="948.9" width="1" height="1.1" fill="#3f8d5a"/><rect x="399.0" y="920" width="1" height="2.4" fill="#3f8d5a"/><rect x="399.0" y="949.0" width="1" height="1.0" fill="#3f8d5a"/><rect x="400.0" y="920" width="1" height="3.6" fill="#3f8d5a"/><rect x="400.0" y="947.4" width="1" height="2.6" fill="#3f8d5a"/><rect x="401.0" y="920" width="1" height="2.8" fill="#3f8d5a"/><rect x="401.0" y="948.1" width="1" height="1.9" fill="#3f8d5a"/><rect x="402.0" y="920" width="1" height="4.3" fill="#3f8d5a"/><rect x="402.0" y="948.1" width="1" height="1.9" fill="#3f8d5a"/><rect x="403.0" y="920" width="1" height="4.2" fill="#3f8d5a"/><rect x="403.0" y="947.3" width="1" height="2.7" fill="#3f8d5a"/><rect x="404.0" y="920" width="1" height="4.8" fill="#3f8d5a"/><rect x="404.0" y="947.2" width="1" height="2.8" fill="#3f8d5a"/><rect x="405.0" y="920" width="1" height="5.3" fill="#3f8d5a"/><rect x="405.0" y="946.4" width="1" height="3.6" fill="#3f8d5a"/><rect x="406.0" y="920" width="1" height="2.7" fill="#3f8d5a"/><rect x="406.0" y="948.7" width="1" height="1.3" fill="#3f8d5a"/><rect x="407.0" y="920" width="1" height="1.1" fill="#3f8d5a"/><rect x="408.0" y="920" width="1" height="5.0" fill="#3f8d5a"/><rect x="408.0" y="947.4" width="1" height="2.6" fill="#3f8d5a"/><rect x="409.0" y="920" width="1" height="2.9" fill="#3f8d5a"/><rect x="409.0" y="948.4" width="1" height="1.6" fill="#3f8d5a"/><rect x="410.0" y="920" width="1" height="1.9" fill="#3f8d5a"/><rect x="411.0" y="920" width="1" height="6.5" fill="#3f8d5a"/><rect x="411.0" y="945.8" width="1" height="4.2" fill="#3f8d5a"/><rect x="412.0" y="920" width="1" height="5.1" fill="#3f8d5a"/><rect x="412.0" y="946.3" width="1" height="3.7" fill="#3f8d5a"/><rect x="413.0" y="920" width="1" height="1.5" fill="#3f8d5a"/><rect x="414.0" y="920" width="1" height="2.1" fill="#3f8d5a"/><rect x="414.0" y="948.8" width="1" height="1.2" fill="#3f8d5a"/><rect x="415.0" y="920" width="1" height="6.1" fill="#3f8d5a"/><rect x="415.0" y="946.3" width="1" height="3.7" fill="#3f8d5a"/><rect x="416.0" y="920" width="1" height="6.2" fill="#3f8d5a"/><rect x="416.0" y="946.3" width="1" height="3.7" fill="#3f8d5a"/><rect x="417.0" y="920" width="1" height="2.5" fill="#3f8d5a"/><rect x="418.0" y="920" width="1" height="5.4" fill="#3f8d5a"/><rect x="418.0" y="946.3" width="1" height="3.7" fill="#3f8d5a"/><rect x="419.0" y="920" width="1" height="2.1" fill="#3f8d5a"/><rect x="419.0" y="948.8" width="1" height="1.2" fill="#3f8d5a"/><rect x="435.0" y="920" width="1" height="2.1" fill="#3f8d5a"/><rect x="435.0" y="948.8" width="1" height="1.2" fill="#3f8d5a"/><rect x="445.0" y="920" width="1" height="2.2" fill="#3f8d5a"/><rect x="448.0" y="920" width="1" height="1.5" fill="#3f8d5a"/><rect x="451.0" y="920" width="1" height="2.3" fill="#3f8d5a"/><rect x="451.0" y="948.4" width="1" height="1.6" fill="#3f8d5a"/><rect x="458.0" y="920" width="1" height="2.1" fill="#3f8d5a"/><rect x="458.0" y="948.8" width="1" height="1.2" fill="#3f8d5a"/><rect x="459.0" y="920" width="1" height="3.3" fill="#3f8d5a"/><rect x="459.0" y="948.9" width="1" height="1.1" fill="#3f8d5a"/><rect x="460.0" y="920" width="1" height="2.1" fill="#3f8d5a"/><rect x="460.0" y="948.8" width="1" height="1.2" fill="#3f8d5a"/><rect x="461.0" y="920" width="1" height="1.3" fill="#3f8d5a"/><rect x="462.0" y="920" width="1" height="2.1" fill="#3f8d5a"/><rect x="462.0" y="948.5" width="1" height="1.5" fill="#3f8d5a"/><rect x="463.0" y="920" width="1" height="1.0" fill="#3f8d5a"/><rect x="464.0" y="920" width="1" height="1.0" fill="#3f8d5a"/><rect x="467.0" y="920" width="1" height="2.2" fill="#3f8d5a"/><rect x="467.0" y="948.7" width="1" height="1.3" fill="#3f8d5a"/><rect x="476.0" y="920" width="1" height="1.7" fill="#3f8d5a"/><rect x="476.0" y="949.0" width="1" height="1.0" fill="#3f8d5a"/><rect x="477.0" y="920" width="1" height="1.1" fill="#3f8d5a"/><rect x="478.0" y="920" width="1" height="3.1" fill="#3f8d5a"/><rect x="478.0" y="948.4" width="1" height="1.6" fill="#3f8d5a"/><rect x="479.0" y="920" width="1" height="3.0" fill="#3f8d5a"/><rect x="479.0" y="948.5" width="1" height="1.5" fill="#3f8d5a"/><rect x="480.0" y="920" width="1" height="1.5" fill="#3f8d5a"/><rect x="480.0" y="949.0" width="1" height="1.0" fill="#3f8d5a"/><rect x="481.0" y="920" width="1" height="1.2" fill="#3f8d5a"/><rect x="482.0" y="920" width="1" height="1.1" fill="#3f8d5a"/><rect x="483.0" y="920" width="1" height="2.8" fill="#3f8d5a"/><rect x="483.0" y="948.4" width="1" height="1.6" fill="#3f8d5a"/><rect x="484.0" y="920" width="1" height="3.1" fill="#3f8d5a"/><rect x="484.0" y="949.1" width="1" height="0.9" fill="#3f8d5a"/><rect x="485.0" y="920" width="1" height="3.1" fill="#3f8d5a"/><rect x="486.0" y="920" width="1" height="1.0" fill="#3f8d5a"/><rect x="487.0" y="920" width="1" height="1.0" fill="#3f8d5a"/><rect x="488.0" y="920" width="1" height="3.7" fill="#3f8d5a"/><rect x="488.0" y="948.9" width="1" height="1.1" fill="#3f8d5a"/><rect x="489.0" y="920" width="1" height="1.0" fill="#3f8d5a"/><rect x="490.0" y="920" width="1" height="3.9" fill="#3f8d5a"/><rect x="490.0" y="948.1" width="1" height="1.9" fill="#3f8d5a"/><rect x="491.0" y="920" width="1" height="4.4" fill="#3f8d5a"/><rect x="491.0" y="947.5" width="1" height="2.5" fill="#3f8d5a"/><rect x="492.0" y="920" width="1" height="1.3" fill="#3f8d5a"/><rect x="493.0" y="920" width="1" height="1.8" fill="#3f8d5a"/><rect x="494.0" y="920" width="1" height="2.1" fill="#3f8d5a"/><rect x="515.0" y="920" width="1" height="2.1" fill="#3f8d5a"/><rect x="518.0" y="920" width="1" height="2.4" fill="#3f8d5a"/><rect x="518.0" y="948.5" width="1" height="1.5" fill="#3f8d5a"/><rect x="524.0" y="920" width="1" height="1.5" fill="#3f8d5a"/><rect x="537.0" y="920" width="1" height="1.8" fill="#3f8d5a"/><rect x="541.0" y="920" width="1" height="1.7" fill="#3f8d5a"/><rect x="541.0" y="948.9" width="1" height="1.1" fill="#3f8d5a"/><rect x="550.0" y="920" width="1" height="1.8" fill="#3f8d5a"/><rect x="553.0" y="920" width="1" height="1.7" fill="#3f8d5a"/><rect x="558.0" y="920" width="1" height="2.1" fill="#3f8d5a"/><rect x="558.0" y="949.0" width="1" height="1.0" fill="#3f8d5a"/><rect x="559.0" y="920" width="1" height="2.0" fill="#3f8d5a"/><rect x="559.0" y="948.6" width="1" height="1.4" fill="#3f8d5a"/><rect x="560.0" y="920" width="1" height="1.6" fill="#3f8d5a"/><rect x="560.0" y="949.0" width="1" height="1.0" fill="#3f8d5a"/><rect x="569.0" y="920" width="1" height="4.9" fill="#3f8d5a"/><rect x="569.0" y="946.8" width="1" height="3.2" fill="#3f8d5a"/><rect x="570.0" y="920" width="1" height="1.0" fill="#3f8d5a"/><rect x="571.0" y="920" width="1" height="5.4" fill="#3f8d5a"/><rect x="571.0" y="947.5" width="1" height="2.5" fill="#3f8d5a"/><rect x="572.0" y="920" width="1" height="6.3" fill="#3f8d5a"/><rect x="572.0" y="945.6" width="1" height="4.4" fill="#3f8d5a"/><rect x="573.0" y="920" width="1" height="1.0" fill="#3f8d5a"/><rect x="574.0" y="920" width="1" height="6.1" fill="#3f8d5a"/><rect x="574.0" y="946.1" width="1" height="3.9" fill="#3f8d5a"/><rect x="575.0" y="920" width="1" height="5.4" fill="#3f8d5a"/><rect x="575.0" y="947.5" width="1" height="2.5" fill="#3f8d5a"/><rect x="576.0" y="920" width="1" height="3.9" fill="#3f8d5a"/><rect x="576.0" y="949.1" width="1" height="0.9" fill="#3f8d5a"/><rect x="577.0" y="920" width="1" height="3.3" fill="#3f8d5a"/><rect x="577.0" y="947.6" width="1" height="2.4" fill="#3f8d5a"/><rect x="578.0" y="920" width="1" height="3.6" fill="#3f8d5a"/><rect x="578.0" y="948.5" width="1" height="1.5" fill="#3f8d5a"/><rect x="579.0" y="920" width="1" height="3.5" fill="#3f8d5a"/><rect x="579.0" y="948.9" width="1" height="1.1" fill="#3f8d5a"/><rect x="580.0" y="920" width="1" height="6.8" fill="#3f8d5a"/><rect x="580.0" y="946.5" width="1" height="3.5" fill="#3f8d5a"/><rect x="581.0" y="920" width="1" height="5.0" fill="#3f8d5a"/><rect x="581.0" y="947.9" width="1" height="2.1" fill="#3f8d5a"/><rect x="582.0" y="920" width="1" height="1.3" fill="#3f8d5a"/><rect x="583.0" y="920" width="1" height="5.9" fill="#3f8d5a"/><rect x="583.0" y="946.7" width="1" height="3.3" fill="#3f8d5a"/><rect x="584.0" y="920" width="1" height="1.0" fill="#3f8d5a"/><rect x="585.0" y="920" width="1" height="1.0" fill="#3f8d5a"/><rect x="586.0" y="920" width="1" height="2.3" fill="#3f8d5a"/><rect x="586.0" y="948.7" width="1" height="1.3" fill="#3f8d5a"/><rect x="587.0" y="920" width="1" height="1.0" fill="#3f8d5a"/><rect x="588.0" y="920" width="1" height="4.1" fill="#3f8d5a"/><rect x="588.0" y="947.2" width="1" height="2.8" fill="#3f8d5a"/><rect x="589.0" y="920" width="1" height="4.4" fill="#3f8d5a"/><rect x="589.0" y="946.9" width="1" height="3.1" fill="#3f8d5a"/><rect x="590.0" y="920" width="1" height="2.9" fill="#3f8d5a"/><rect x="591.0" y="920" width="1" height="2.9" fill="#3f8d5a"/><rect x="591.0" y="948.2" width="1" height="1.8" fill="#3f8d5a"/><rect x="592.0" y="920" width="1" height="3.9" fill="#3f8d5a"/><rect x="592.0" y="948.6" width="1" height="1.4" fill="#3f8d5a"/><rect x="593.0" y="920" width="1" height="6.7" fill="#3f8d5a"/><rect x="593.0" y="945.9" width="1" height="4.1" fill="#3f8d5a"/><rect x="594.0" y="920" width="1" height="6.0" fill="#3f8d5a"/><rect x="594.0" y="945.7" width="1" height="4.3" fill="#3f8d5a"/><rect x="595.0" y="920" width="1" height="1.4" fill="#3f8d5a"/><rect x="595.0" y="949.1" width="1" height="0.9" fill="#3f8d5a"/><rect x="596.0" y="920" width="1" height="1.0" fill="#3f8d5a"/><rect x="597.0" y="920" width="1" height="2.3" fill="#3f8d5a"/><rect x="597.0" y="948.7" width="1" height="1.3" fill="#3f8d5a"/><rect x="598.0" y="920" width="1" height="1.0" fill="#3f8d5a"/><rect x="599.0" y="920" width="1" height="1.0" fill="#3f8d5a"/><rect x="600.0" y="920" width="1" height="6.1" fill="#3f8d5a"/><rect x="600.0" y="946.3" width="1" height="3.7" fill="#3f8d5a"/><rect x="601.0" y="920" width="1" height="5.6" fill="#3f8d5a"/><rect x="601.0" y="947.5" width="1" height="2.5" fill="#3f8d5a"/><rect x="602.0" y="920" width="1" height="4.0" fill="#3f8d5a"/><rect x="603.0" y="920" width="1" height="3.4" fill="#3f8d5a"/><rect x="603.0" y="948.2" width="1" height="1.8" fill="#3f8d5a"/><rect x="604.0" y="920" width="1" height="2.9" fill="#3f8d5a"/><rect x="604.0" y="948.5" width="1" height="1.5" fill="#3f8d5a"/><rect x="605.0" y="920" width="1" height="7.1" fill="#3f8d5a"/><rect x="605.0" y="946.0" width="1" height="4.0" fill="#3f8d5a"/><rect x="606.0" y="920" width="1" height="1.0" fill="#3f8d5a"/><rect x="607.0" y="920" width="1" height="5.9" fill="#3f8d5a"/><rect x="607.0" y="947.4" width="1" height="2.6" fill="#3f8d5a"/><rect x="608.0" y="920" width="1" height="2.1" fill="#3f8d5a"/><rect x="609.0" y="920" width="1" height="1.5" fill="#3f8d5a"/><rect x="609.0" y="949.0" width="1" height="1.0" fill="#3f8d5a"/><rect x="610.0" y="920" width="1" height="4.8" fill="#3f8d5a"/><rect x="610.0" y="947.2" width="1" height="2.8" fill="#3f8d5a"/><rect x="611.0" y="920" width="1" height="5.5" fill="#3f8d5a"/><rect x="611.0" y="946.8" width="1" height="3.2" fill="#3f8d5a"/><rect x="612.0" y="920" width="1" height="6.0" fill="#3f8d5a"/><rect x="612.0" y="947.6" width="1" height="2.4" fill="#3f8d5a"/><rect x="613.0" y="920" width="1" height="6.1" fill="#3f8d5a"/><rect x="613.0" y="946.0" width="1" height="4.0" fill="#3f8d5a"/><rect x="614.0" y="920" width="1" height="6.2" fill="#3f8d5a"/><rect x="614.0" y="945.5" width="1" height="4.5" fill="#3f8d5a"/><rect x="615.0" y="920" width="1" height="3.0" fill="#3f8d5a"/><rect x="615.0" y="948.3" width="1" height="1.7" fill="#3f8d5a"/><rect x="616.0" y="920" width="1" height="1.0" fill="#3f8d5a"/><rect x="617.0" y="920" width="1" height="4.4" fill="#3f8d5a"/><rect x="617.0" y="947.4" width="1" height="2.6" fill="#3f8d5a"/><rect x="618.0" y="920" width="1" height="3.6" fill="#3f8d5a"/><rect x="618.0" y="947.4" width="1" height="2.6" fill="#3f8d5a"/><rect x="619.0" y="920" width="1" height="6.1" fill="#3f8d5a"/><rect x="619.0" y="948.4" width="1" height="1.6" fill="#3f8d5a"/><rect x="620.0" y="920" width="1" height="1.9" fill="#3f8d5a"/><rect x="621.0" y="920" width="1" height="4.9" fill="#3f8d5a"/><rect x="621.0" y="948.3" width="1" height="1.7" fill="#3f8d5a"/><rect x="622.0" y="920" width="1" height="1.0" fill="#3f8d5a"/><rect x="623.0" y="920" width="1" height="2.3" fill="#3f8d5a"/><rect x="623.0" y="948.6" width="1" height="1.4" fill="#3f8d5a"/><rect x="624.0" y="920" width="1" height="1.0" fill="#3f8d5a"/><rect x="625.0" y="920" width="1" height="6.2" fill="#3f8d5a"/><rect x="625.0" y="947.6" width="1" height="2.4" fill="#3f8d5a"/><rect x="626.0" y="920" width="1" height="1.0" fill="#3f8d5a"/><rect x="627.0" y="920" width="1" height="3.5" fill="#3f8d5a"/><rect x="627.0" y="947.7" width="1" height="2.3" fill="#3f8d5a"/><rect x="631.0" y="920" width="1" height="2.2" fill="#3f8d5a"/><rect x="635.0" y="920" width="1" height="2.1" fill="#3f8d5a"/><rect x="635.0" y="948.9" width="1" height="1.1" fill="#3f8d5a"/><rect x="639.0" y="920" width="1" height="2.2" fill="#3f8d5a"/><rect x="639.0" y="949.1" width="1" height="0.9" fill="#3f8d5a"/><rect x="640.0" y="920" width="1" height="2.1" fill="#3f8d5a"/><rect x="641.0" y="920" width="1" height="4.0" fill="#3f8d5a"/><rect x="641.0" y="948.3" width="1" height="1.7" fill="#3f8d5a"/><rect x="642.0" y="920" width="1" height="1.0" fill="#3f8d5a"/><rect x="643.0" y="920" width="1" height="1.6" fill="#3f8d5a"/><rect x="643.0" y="948.9" width="1" height="1.1" fill="#3f8d5a"/><rect x="644.0" y="920" width="1" height="1.0" fill="#3f8d5a"/><rect x="645.0" y="920" width="1" height="4.8" fill="#3f8d5a"/><rect x="645.0" y="948.0" width="1" height="2.0" fill="#3f8d5a"/><rect x="646.0" y="920" width="1" height="3.3" fill="#3f8d5a"/><rect x="646.0" y="947.7" width="1" height="2.3" fill="#3f8d5a"/><rect x="647.0" y="920" width="1" height="4.2" fill="#3f8d5a"/><rect x="647.0" y="947.6" width="1" height="2.4" fill="#3f8d5a"/><rect x="648.0" y="920" width="1" height="3.7" fill="#3f8d5a"/><rect x="648.0" y="947.4" width="1" height="2.6" fill="#3f8d5a"/><rect x="649.0" y="920" width="1" height="5.0" fill="#3f8d5a"/><rect x="649.0" y="947.7" width="1" height="2.3" fill="#3f8d5a"/><rect x="650.0" y="920" width="1" height="4.9" fill="#3f8d5a"/><rect x="650.0" y="948.3" width="1" height="1.7" fill="#3f8d5a"/><rect x="651.0" y="920" width="1" height="1.0" fill="#3f8d5a"/><rect x="652.0" y="920" width="1" height="0.8" fill="#3f8d5a"/><rect x="653.0" y="920" width="1" height="1.0" fill="#3f8d5a"/><rect x="654.0" y="920" width="1" height="1.0" fill="#3f8d5a"/><rect x="655.0" y="920" width="1" height="1.3" fill="#3f8d5a"/><rect x="656.0" y="920" width="1" height="1.2" fill="#3f8d5a"/><rect x="657.0" y="920" width="1" height="1.0" fill="#3f8d5a"/><rect x="658.0" y="920" width="1" height="1.0" fill="#3f8d5a"/><rect x="659.0" y="920" width="1" height="2.1" fill="#3f8d5a"/><rect x="659.0" y="948.7" width="1" height="1.3" fill="#3f8d5a"/><rect x="660.0" y="920" width="1" height="0.9" fill="#3f8d5a"/><rect x="661.0" y="920" width="1" height="3.0" fill="#3f8d5a"/><rect x="661.0" y="949.1" width="1" height="0.9" fill="#3f8d5a"/><rect x="662.0" y="920" width="1" height="5.5" fill="#3f8d5a"/><rect x="662.0" y="947.6" width="1" height="2.4" fill="#3f8d5a"/><rect x="663.0" y="920" width="1" height="1.0" fill="#3f8d5a"/><rect x="664.0" y="920" width="1" height="1.5" fill="#3f8d5a"/><rect x="665.0" y="920" width="1" height="4.2" fill="#3f8d5a"/><rect x="665.0" y="948.6" width="1" height="1.4" fill="#3f8d5a"/><rect x="666.0" y="920" width="1" height="3.4" fill="#3f8d5a"/><rect x="666.0" y="949.0" width="1" height="1.0" fill="#3f8d5a"/><rect x="667.0" y="920" width="1" height="3.4" fill="#3f8d5a"/><rect x="667.0" y="947.6" width="1" height="2.4" fill="#3f8d5a"/><rect x="668.0" y="920" width="1" height="2.0" fill="#3f8d5a"/><rect x="668.0" y="948.6" width="1" height="1.4" fill="#3f8d5a"/><rect x="669.0" y="920" width="1" height="1.0" fill="#3f8d5a"/><rect x="670.0" y="920" width="1" height="1.8" fill="#3f8d5a"/><rect x="671.0" y="920" width="1" height="0.9" fill="#3f8d5a"/><rect x="672.0" y="920" width="1" height="3.6" fill="#3f8d5a"/><rect x="672.0" y="948.3" width="1" height="1.7" fill="#3f8d5a"/><rect x="673.0" y="920" width="1" height="4.2" fill="#3f8d5a"/><rect x="673.0" y="947.5" width="1" height="2.5" fill="#3f8d5a"/><rect x="674.0" y="920" width="1" height="3.6" fill="#3f8d5a"/><rect x="674.0" y="947.8" width="1" height="2.2" fill="#3f8d5a"/><rect x="675.0" y="920" width="1" height="1.0" fill="#3f8d5a"/><rect x="676.0" y="920" width="1" height="2.9" fill="#3f8d5a"/><rect x="676.0" y="948.7" width="1" height="1.3" fill="#3f8d5a"/><rect x="677.0" y="920" width="1" height="5.4" fill="#3f8d5a"/><rect x="677.0" y="947.4" width="1" height="2.6" fill="#3f8d5a"/><rect x="678.0" y="920" width="1" height="3.0" fill="#3f8d5a"/><rect x="678.0" y="949.0" width="1" height="1.0" fill="#3f8d5a"/><rect x="679.0" y="920" width="1" height="1.0" fill="#3f8d5a"/><rect x="680.0" y="920" width="1" height="5.2" fill="#3f8d5a"/><rect x="680.0" y="947.9" width="1" height="2.1" fill="#3f8d5a"/><rect x="681.0" y="920" width="1" height="2.8" fill="#3f8d5a"/><rect x="681.0" y="948.9" width="1" height="1.1" fill="#3f8d5a"/><rect x="682.0" y="920" width="1" height="1.4" fill="#3f8d5a"/><rect x="682.0" y="949.1" width="1" height="0.9" fill="#3f8d5a"/><rect x="683.0" y="920" width="1" height="5.1" fill="#3f8d5a"/><rect x="683.0" y="948.9" width="1" height="1.1" fill="#3f8d5a"/><rect x="684.0" y="920" width="1" height="2.5" fill="#3f8d5a"/><rect x="684.0" y="948.5" width="1" height="1.5" fill="#3f8d5a"/><rect x="685.0" y="920" width="1" height="2.5" fill="#3f8d5a"/><rect x="685.0" y="948.2" width="1" height="1.8" fill="#3f8d5a"/><rect x="686.0" y="920" width="1" height="4.5" fill="#3f8d5a"/><rect x="686.0" y="947.0" width="1" height="3.0" fill="#3f8d5a"/><rect x="687.0" y="920" width="1" height="3.8" fill="#3f8d5a"/><rect x="687.0" y="947.2" width="1" height="2.8" fill="#3f8d5a"/><rect x="688.0" y="920" width="1" height="4.0" fill="#3f8d5a"/><rect x="688.0" y="947.5" width="1" height="2.5" fill="#3f8d5a"/><rect x="689.0" y="920" width="1" height="4.3" fill="#3f8d5a"/><rect x="689.0" y="947.9" width="1" height="2.1" fill="#3f8d5a"/><rect x="690.0" y="920" width="1" height="3.9" fill="#3f8d5a"/><rect x="690.0" y="947.6" width="1" height="2.4" fill="#3f8d5a"/><rect x="691.0" y="920" width="1" height="4.0" fill="#3f8d5a"/><rect x="691.0" y="947.8" width="1" height="2.2" fill="#3f8d5a"/><rect x="692.0" y="920" width="1" height="3.9" fill="#3f8d5a"/><rect x="692.0" y="948.4" width="1" height="1.6" fill="#3f8d5a"/><rect x="693.0" y="920" width="1" height="1.0" fill="#3f8d5a"/><rect x="694.0" y="920" width="1" height="3.5" fill="#3f8d5a"/><rect x="694.0" y="948.2" width="1" height="1.8" fill="#3f8d5a"/><rect x="695.0" y="920" width="1" height="1.5" fill="#3f8d5a"/><rect x="695.0" y="948.9" width="1" height="1.1" fill="#3f8d5a"/><rect x="696.0" y="920" width="1" height="3.5" fill="#3f8d5a"/><rect x="696.0" y="948.1" width="1" height="1.9" fill="#3f8d5a"/><rect x="697.0" y="920" width="1" height="2.1" fill="#3f8d5a"/><rect x="698.0" y="920" width="1" height="3.2" fill="#3f8d5a"/><rect x="698.0" y="948.1" width="1" height="1.9" fill="#3f8d5a"/><rect x="699.0" y="920" width="1" height="5.1" fill="#3f8d5a"/><rect x="699.0" y="946.5" width="1" height="3.5" fill="#3f8d5a"/><rect x="700.0" y="920" width="1" height="2.8" fill="#3f8d5a"/><rect x="700.0" y="948.1" width="1" height="1.9" fill="#3f8d5a"/><rect x="701.0" y="920" width="1" height="1.4" fill="#3f8d5a"/><rect x="702.0" y="920" width="1" height="1.3" fill="#3f8d5a"/><rect x="703.0" y="920" width="1" height="3.5" fill="#3f8d5a"/><rect x="703.0" y="948.2" width="1" height="1.8" fill="#3f8d5a"/><rect x="704.0" y="920" width="1" height="2.9" fill="#3f8d5a"/><rect x="704.0" y="947.9" width="1" height="2.1" fill="#3f8d5a"/><rect x="705.0" y="920" width="1" height="3.1" fill="#3f8d5a"/><rect x="705.0" y="948.3" width="1" height="1.7" fill="#3f8d5a"/><rect x="706.0" y="920" width="1" height="4.5" fill="#3f8d5a"/><rect x="706.0" y="948.5" width="1" height="1.5" fill="#3f8d5a"/><rect x="707.0" y="920" width="1" height="2.7" fill="#3f8d5a"/><rect x="707.0" y="948.5" width="1" height="1.5" fill="#3f8d5a"/><rect x="708.0" y="920" width="1" height="2.8" fill="#3f8d5a"/><rect x="708.0" y="948.7" width="1" height="1.3" fill="#3f8d5a"/><rect x="709.0" y="920" width="1" height="0.7" fill="#3f8d5a"/><rect x="710.0" y="920" width="1" height="1.0" fill="#3f8d5a"/><rect x="711.0" y="920" width="1" height="2.3" fill="#3f8d5a"/><rect x="711.0" y="948.9" width="1" height="1.1" fill="#3f8d5a"/><rect x="712.0" y="920" width="1" height="4.8" fill="#3f8d5a"/><rect x="712.0" y="948.7" width="1" height="1.3" fill="#3f8d5a"/><rect x="713.0" y="920" width="1" height="4.9" fill="#3f8d5a"/><rect x="713.0" y="948.2" width="1" height="1.8" fill="#3f8d5a"/><rect x="714.0" y="920" width="1" height="4.7" fill="#3f8d5a"/><rect x="714.0" y="947.3" width="1" height="2.7" fill="#3f8d5a"/><rect x="715.0" y="920" width="1" height="0.9" fill="#3f8d5a"/><rect x="716.0" y="920" width="1" height="4.3" fill="#3f8d5a"/><rect x="716.0" y="948.1" width="1" height="1.9" fill="#3f8d5a"/><rect x="717.0" y="920" width="1" height="4.0" fill="#3f8d5a"/><rect x="717.0" y="947.3" width="1" height="2.7" fill="#3f8d5a"/><rect x="718.0" y="920" width="1" height="2.8" fill="#3f8d5a"/><rect x="718.0" y="948.4" width="1" height="1.6" fill="#3f8d5a"/><rect x="719.0" y="920" width="1" height="1.0" fill="#3f8d5a"/><rect x="720.0" y="920" width="1" height="1.0" fill="#3f8d5a"/><rect x="721.0" y="920" width="1" height="4.1" fill="#3f8d5a"/><rect x="721.0" y="948.1" width="1" height="1.9" fill="#3f8d5a"/><rect x="722.0" y="920" width="1" height="4.5" fill="#3f8d5a"/><rect x="722.0" y="947.9" width="1" height="2.1" fill="#3f8d5a"/><rect x="723.0" y="920" width="1" height="3.4" fill="#3f8d5a"/><rect x="723.0" y="947.7" width="1" height="2.3" fill="#3f8d5a"/><rect x="724.0" y="920" width="1" height="0.8" fill="#3f8d5a"/><rect x="725.0" y="920" width="1" height="3.2" fill="#3f8d5a"/><rect x="725.0" y="947.8" width="1" height="2.2" fill="#3f8d5a"/><rect x="726.0" y="920" width="1" height="3.2" fill="#3f8d5a"/><rect x="726.0" y="947.8" width="1" height="2.2" fill="#3f8d5a"/><rect x="727.0" y="920" width="1" height="3.3" fill="#3f8d5a"/><rect x="727.0" y="948.2" width="1" height="1.8" fill="#3f8d5a"/><rect x="728.0" y="920" width="1" height="4.1" fill="#3f8d5a"/><rect x="728.0" y="947.4" width="1" height="2.6" fill="#3f8d5a"/><rect x="729.0" y="920" width="1" height="0.9" fill="#3f8d5a"/><rect x="730.0" y="920" width="1" height="4.6" fill="#3f8d5a"/><rect x="730.0" y="947.0" width="1" height="3.0" fill="#3f8d5a"/><rect x="731.0" y="920" width="1" height="2.0" fill="#3f8d5a"/><rect x="732.0" y="920" width="1" height="1.3" fill="#3f8d5a"/><rect x="733.0" y="920" width="1" height="3.7" fill="#3f8d5a"/><rect x="734.0" y="920" width="1" height="4.3" fill="#3f8d5a"/><rect x="734.0" y="947.7" width="1" height="2.3" fill="#3f8d5a"/><rect x="735.0" y="920" width="1" height="4.2" fill="#3f8d5a"/><rect x="735.0" y="947.9" width="1" height="2.1" fill="#3f8d5a"/><rect x="736.0" y="920" width="1" height="5.5" fill="#3f8d5a"/><rect x="736.0" y="946.3" width="1" height="3.7" fill="#3f8d5a"/><rect x="737.0" y="920" width="1" height="1.0" fill="#3f8d5a"/><rect x="738.0" y="920" width="1" height="3.5" fill="#3f8d5a"/><rect x="739.0" y="920" width="1" height="1.0" fill="#3f8d5a"/><rect x="740.0" y="920" width="1" height="2.5" fill="#3f8d5a"/><rect x="740.0" y="949.0" width="1" height="1.0" fill="#3f8d5a"/><rect x="741.0" y="920" width="1" height="1.0" fill="#3f8d5a"/><rect x="742.0" y="920" width="1" height="3.0" fill="#3f8d5a"/><rect x="743.0" y="920" width="1" height="5.0" fill="#3f8d5a"/><rect x="743.0" y="946.7" width="1" height="3.3" fill="#3f8d5a"/><rect x="744.0" y="920" width="1" height="1.0" fill="#3f8d5a"/><rect x="745.0" y="920" width="1" height="1.0" fill="#3f8d5a"/><rect x="746.0" y="920" width="1" height="3.2" fill="#3f8d5a"/><rect x="746.0" y="948.3" width="1" height="1.7" fill="#3f8d5a"/><rect x="747.0" y="920" width="1" height="2.7" fill="#3f8d5a"/><rect x="747.0" y="948.2" width="1" height="1.8" fill="#3f8d5a"/><rect x="748.0" y="920" width="1" height="5.2" fill="#3f8d5a"/><rect x="748.0" y="947.1" width="1" height="2.9" fill="#3f8d5a"/><rect x="749.0" y="920" width="1" height="2.5" fill="#3f8d5a"/><rect x="749.0" y="948.6" width="1" height="1.4" fill="#3f8d5a"/><rect x="750.0" y="920" width="1" height="3.7" fill="#3f8d5a"/><rect x="750.0" y="948.3" width="1" height="1.7" fill="#3f8d5a"/><rect x="751.0" y="920" width="1" height="4.7" fill="#3f8d5a"/><rect x="751.0" y="948.0" width="1" height="2.0" fill="#3f8d5a"/><rect x="752.0" y="920" width="1" height="4.7" fill="#3f8d5a"/><rect x="752.0" y="947.3" width="1" height="2.7" fill="#3f8d5a"/><rect x="753.0" y="920" width="1" height="5.2" fill="#3f8d5a"/><rect x="753.0" y="947.3" width="1" height="2.7" fill="#3f8d5a"/><rect x="754.0" y="920" width="1" height="1.0" fill="#3f8d5a"/><rect x="755.0" y="920" width="1" height="4.0" fill="#3f8d5a"/><rect x="756.0" y="920" width="1" height="1.0" fill="#3f8d5a"/><rect x="757.0" y="920" width="1" height="1.8" fill="#3f8d5a"/><rect x="757.0" y="948.8" width="1" height="1.2" fill="#3f8d5a"/><rect x="758.0" y="920" width="1" height="4.7" fill="#3f8d5a"/><rect x="758.0" y="947.5" width="1" height="2.5" fill="#3f8d5a"/><rect x="759.0" y="920" width="1" height="4.2" fill="#3f8d5a"/><rect x="759.0" y="948.2" width="1" height="1.8" fill="#3f8d5a"/><rect x="760.0" y="920" width="1" height="4.8" fill="#3f8d5a"/><rect x="760.0" y="948.5" width="1" height="1.5" fill="#3f8d5a"/><rect x="761.0" y="920" width="1" height="1.0" fill="#3f8d5a"/><rect x="762.0" y="920" width="1" height="1.3" fill="#3f8d5a"/><rect x="763.0" y="920" width="1" height="1.0" fill="#3f8d5a"/><rect x="764.0" y="920" width="1" height="2.2" fill="#3f8d5a"/><rect x="764.0" y="948.5" width="1" height="1.5" fill="#3f8d5a"/><rect x="765.0" y="920" width="1" height="1.6" fill="#3f8d5a"/><rect x="766.0" y="920" width="1" height="0.9" fill="#3f8d5a"/><rect x="767.0" y="920" width="1" height="2.1" fill="#3f8d5a"/><rect x="767.0" y="948.8" width="1" height="1.2" fill="#3f8d5a"/><rect x="768.0" y="920" width="1" height="3.6" fill="#3f8d5a"/><rect x="768.0" y="948.8" width="1" height="1.2" fill="#3f8d5a"/><rect x="769.0" y="920" width="1" height="1.0" fill="#3f8d5a"/><rect x="770.0" y="920" width="1" height="1.6" fill="#3f8d5a"/><rect x="770.0" y="949.0" width="1" height="1.0" fill="#3f8d5a"/><rect x="771.0" y="920" width="1" height="1.0" fill="#3f8d5a"/><rect x="772.0" y="920" width="1" height="2.8" fill="#3f8d5a"/><rect x="772.0" y="948.3" width="1" height="1.7" fill="#3f8d5a"/><rect x="773.0" y="920" width="1" height="3.6" fill="#3f8d5a"/><rect x="773.0" y="949.0" width="1" height="1.0" fill="#3f8d5a"/><rect x="774.0" y="920" width="1" height="4.4" fill="#3f8d5a"/><rect x="774.0" y="947.8" width="1" height="2.2" fill="#3f8d5a"/><rect x="775.0" y="920" width="1" height="1.4" fill="#3f8d5a"/><rect x="775.0" y="949.1" width="1" height="0.9" fill="#3f8d5a"/><rect x="776.0" y="920" width="1" height="5.2" fill="#3f8d5a"/><rect x="776.0" y="946.2" width="1" height="3.8" fill="#3f8d5a"/><rect x="777.0" y="920" width="1" height="1.0" fill="#3f8d5a"/><rect x="778.0" y="920" width="1" height="2.6" fill="#3f8d5a"/><rect x="778.0" y="948.3" width="1" height="1.7" fill="#3f8d5a"/><rect x="779.0" y="920" width="1" height="5.2" fill="#3f8d5a"/><rect x="779.0" y="948.6" width="1" height="1.4" fill="#3f8d5a"/><rect x="780.0" y="920" width="1" height="4.9" fill="#3f8d5a"/><rect x="780.0" y="947.1" width="1" height="2.9" fill="#3f8d5a"/><rect x="781.0" y="920" width="1" height="1.2" fill="#3f8d5a"/><rect x="782.0" y="920" width="1" height="5.1" fill="#3f8d5a"/><rect x="782.0" y="946.6" width="1" height="3.4" fill="#3f8d5a"/><rect x="783.0" y="920" width="1" height="5.2" fill="#3f8d5a"/><rect x="783.0" y="949.1" width="1" height="0.9" fill="#3f8d5a"/><rect x="784.0" y="920" width="1" height="5.4" fill="#3f8d5a"/><rect x="784.0" y="947.6" width="1" height="2.4" fill="#3f8d5a"/><rect x="785.0" y="920" width="1" height="1.0" fill="#3f8d5a"/><rect x="786.0" y="920" width="1" height="2.6" fill="#3f8d5a"/><rect x="786.0" y="948.7" width="1" height="1.3" fill="#3f8d5a"/><rect x="787.0" y="920" width="1" height="4.4" fill="#3f8d5a"/><rect x="787.0" y="948.5" width="1" height="1.5" fill="#3f8d5a"/><rect x="788.0" y="920" width="1" height="2.4" fill="#3f8d5a"/><rect x="789.0" y="920" width="1" height="1.3" fill="#3f8d5a"/><rect x="790.0" y="920" width="1" height="3.8" fill="#3f8d5a"/><rect x="790.0" y="948.0" width="1" height="2.0" fill="#3f8d5a"/><rect x="791.0" y="920" width="1" height="3.4" fill="#3f8d5a"/><rect x="791.0" y="949.0" width="1" height="1.0" fill="#3f8d5a"/><rect x="805.0" y="920" width="1" height="1.0" fill="#3f8d5a"/><rect x="806.0" y="920" width="1" height="2.2" fill="#3f8d5a"/><rect x="806.0" y="948.8" width="1" height="1.2" fill="#3f8d5a"/><rect x="807.0" y="920" width="1" height="2.1" fill="#3f8d5a"/><rect x="808.0" y="920" width="1" height="2.2" fill="#3f8d5a"/><rect x="808.0" y="948.9" width="1" height="1.1" fill="#3f8d5a"/><rect x="809.0" y="920" width="1" height="2.0" fill="#3f8d5a"/><rect x="810.0" y="920" width="1" height="1.5" fill="#3f8d5a"/><rect x="810.0" y="949.0" width="1" height="1.0" fill="#3f8d5a"/><rect x="811.0" y="920" width="1" height="3.2" fill="#3f8d5a"/><rect x="812.0" y="920" width="1" height="1.0" fill="#3f8d5a"/><rect x="813.0" y="920" width="1" height="2.4" fill="#3f8d5a"/><rect x="813.0" y="948.5" width="1" height="1.5" fill="#3f8d5a"/><rect x="814.0" y="920" width="1" height="2.9" fill="#3f8d5a"/><rect x="814.0" y="949.0" width="1" height="1.0" fill="#3f8d5a"/><rect x="816.0" y="920" width="1" height="1.9" fill="#3f8d5a"/><rect x="816.0" y="948.9" width="1" height="1.1" fill="#3f8d5a"/><rect x="819.0" y="920" width="1" height="2.1" fill="#3f8d5a"/><rect x="823.0" y="920" width="1" height="1.7" fill="#3f8d5a"/><rect x="823.0" y="949.0" width="1" height="1.0" fill="#3f8d5a"/><rect x="825.0" y="920" width="1" height="2.1" fill="#3f8d5a"/><rect x="825.0" y="948.7" width="1" height="1.3" fill="#3f8d5a"/><rect x="831.0" y="920" width="1" height="2.4" fill="#3f8d5a"/><rect x="831.0" y="948.8" width="1" height="1.2" fill="#3f8d5a"/><rect x="833.0" y="920" width="1" height="1.7" fill="#3f8d5a"/><rect x="833.0" y="948.9" width="1" height="1.1" fill="#3f8d5a"/><rect x="854.0" y="920" width="1" height="2.2" fill="#3f8d5a"/><rect x="854.0" y="948.9" width="1" height="1.1" fill="#3f8d5a"/><rect x="875.0" y="920" width="1" height="2.5" fill="#3f8d5a"/><rect x="875.0" y="948.4" width="1" height="1.6" fill="#3f8d5a"/><rect x="893.0" y="920" width="1" height="2.2" fill="#3f8d5a"/><rect x="893.0" y="948.6" width="1" height="1.4" fill="#3f8d5a"/><rect x="898.0" y="920" width="1" height="2.0" fill="#3f8d5a"/><rect x="899.0" y="920" width="1" height="2.3" fill="#3f8d5a"/><rect x="899.0" y="948.8" width="1" height="1.2" fill="#3f8d5a"/><rect x="908.0" y="920" width="1" height="1.8" fill="#3f8d5a"/><rect x="908.0" y="948.9" width="1" height="1.1" fill="#3f8d5a"/><rect x="914.0" y="920" width="1" height="2.3" fill="#3f8d5a"/><rect x="931.0" y="920" width="1" height="1.7" fill="#3f8d5a"/><rect x="931.0" y="948.8" width="1" height="1.2" fill="#3f8d5a"/><rect x="936.0" y="920" width="1" height="2.1" fill="#3f8d5a"/><rect x="936.0" y="948.6" width="1" height="1.4" fill="#3f8d5a"/><rect x="942.0" y="920" width="1" height="2.1" fill="#3f8d5a"/><rect x="942.0" y="948.9" width="1" height="1.1" fill="#3f8d5a"/><rect x="954.0" y="920" width="1" height="2.3" fill="#3f8d5a"/><rect x="954.0" y="948.6" width="1" height="1.4" fill="#3f8d5a"/><rect x="961.0" y="920" width="1" height="1.8" fill="#3f8d5a"/><rect x="967.0" y="920" width="1" height="2.9" fill="#3f8d5a"/><rect x="967.0" y="948.2" width="1" height="1.8" fill="#3f8d5a"/><rect x="968.0" y="920" width="1" height="2.3" fill="#3f8d5a"/><rect x="968.0" y="948.5" width="1" height="1.5" fill="#3f8d5a"/><rect x="969.0" y="920" width="1" height="3.6" fill="#3f8d5a"/><rect x="969.0" y="948.2" width="1" height="1.8" fill="#3f8d5a"/><rect x="970.0" y="920" width="1" height="1.0" fill="#3f8d5a"/><rect x="971.0" y="920" width="1" height="4.2" fill="#3f8d5a"/><rect x="971.0" y="948.0" width="1" height="2.0" fill="#3f8d5a"/><rect x="972.0" y="920" width="1" height="1.0" fill="#3f8d5a"/><rect x="973.0" y="920" width="1" height="2.3" fill="#3f8d5a"/><rect x="974.0" y="920" width="1" height="4.8" fill="#3f8d5a"/><rect x="974.0" y="946.8" width="1" height="3.2" fill="#3f8d5a"/><rect x="975.0" y="920" width="1" height="1.5" fill="#3f8d5a"/><rect x="976.0" y="920" width="1" height="1.0" fill="#3f8d5a"/><rect x="977.0" y="920" width="1" height="1.7" fill="#3f8d5a"/><rect x="978.0" y="920" width="1" height="2.4" fill="#3f8d5a"/><rect x="978.0" y="948.8" width="1" height="1.2" fill="#3f8d5a"/><rect x="979.0" y="920" width="1" height="1.0" fill="#3f8d5a"/><rect x="980.0" y="920" width="1" height="2.5" fill="#3f8d5a"/><rect x="980.0" y="948.3" width="1" height="1.7" fill="#3f8d5a"/><rect x="981.0" y="920" width="1" height="2.5" fill="#3f8d5a"/><rect x="981.0" y="948.7" width="1" height="1.3" fill="#3f8d5a"/><rect x="982.0" y="920" width="1" height="2.2" fill="#3f8d5a"/><rect x="982.0" y="948.9" width="1" height="1.1" fill="#3f8d5a"/><rect x="983.0" y="920" width="1" height="5.4" fill="#3f8d5a"/><rect x="983.0" y="947.8" width="1" height="2.2" fill="#3f8d5a"/><rect x="984.0" y="920" width="1" height="5.1" fill="#3f8d5a"/><rect x="984.0" y="947.4" width="1" height="2.6" fill="#3f8d5a"/><rect x="985.0" y="920" width="1" height="4.0" fill="#3f8d5a"/><rect x="985.0" y="947.4" width="1" height="2.6" fill="#3f8d5a"/><rect x="986.0" y="920" width="1" height="1.6" fill="#3f8d5a"/><rect x="986.0" y="949.0" width="1" height="1.0" fill="#3f8d5a"/><rect x="987.0" y="920" width="1" height="3.6" fill="#3f8d5a"/><rect x="987.0" y="947.8" width="1" height="2.2" fill="#3f8d5a"/><rect x="988.0" y="920" width="1" height="2.3" fill="#3f8d5a"/><rect x="988.0" y="948.9" width="1" height="1.1" fill="#3f8d5a"/><rect x="989.0" y="920" width="1" height="1.0" fill="#3f8d5a"/><rect x="990.0" y="920" width="1" height="4.0" fill="#3f8d5a"/><rect x="990.0" y="948.4" width="1" height="1.6" fill="#3f8d5a"/><rect x="991.0" y="920" width="1" height="0.9" fill="#3f8d5a"/><rect x="992.0" y="920" width="1" height="2.7" fill="#3f8d5a"/><rect x="992.0" y="948.1" width="1" height="1.9" fill="#3f8d5a"/><rect x="993.0" y="920" width="1" height="2.1" fill="#3f8d5a"/><rect x="994.0" y="920" width="1" height="4.5" fill="#3f8d5a"/><rect x="994.0" y="947.2" width="1" height="2.8" fill="#3f8d5a"/><rect x="995.0" y="920" width="1" height="4.7" fill="#3f8d5a"/><rect x="995.0" y="948.6" width="1" height="1.4" fill="#3f8d5a"/><rect x="996.0" y="920" width="1" height="4.0" fill="#3f8d5a"/><rect x="996.0" y="947.1" width="1" height="2.9" fill="#3f8d5a"/><rect x="997.0" y="920" width="1" height="4.2" fill="#3f8d5a"/><rect x="997.0" y="947.2" width="1" height="2.8" fill="#3f8d5a"/><rect x="998.0" y="920" width="1" height="5.3" fill="#3f8d5a"/><rect x="998.0" y="946.6" width="1" height="3.4" fill="#3f8d5a"/><rect x="999.0" y="920" width="1" height="2.9" fill="#3f8d5a"/><rect x="999.0" y="948.1" width="1" height="1.9" fill="#3f8d5a"/><rect x="1000.0" y="920" width="1" height="1.8" fill="#3f8d5a"/><rect x="1000.0" y="948.8" width="1" height="1.2" fill="#3f8d5a"/><rect x="1001.0" y="920" width="1" height="3.5" fill="#3f8d5a"/><rect x="1001.0" y="947.9" width="1" height="2.1" fill="#3f8d5a"/><rect x="1002.0" y="920" width="1" height="1.0" fill="#3f8d5a"/><rect x="1003.0" y="920" width="1" height="1.1" fill="#3f8d5a"/><rect x="1004.0" y="920" width="1" height="4.9" fill="#3f8d5a"/><rect x="1004.0" y="947.0" width="1" height="3.0" fill="#3f8d5a"/><rect x="1005.0" y="920" width="1" height="2.9" fill="#3f8d5a"/><rect x="1005.0" y="948.3" width="1" height="1.7" fill="#3f8d5a"/><rect x="1025.0" y="920" width="1" height="2.1" fill="#3f8d5a"/><rect x="1025.0" y="948.6" width="1" height="1.4" fill="#3f8d5a"/><rect x="1029.0" y="920" width="1" height="2.2" fill="#3f8d5a"/><rect x="1029.0" y="948.5" width="1" height="1.5" fill="#3f8d5a"/><rect x="1033.0" y="920" width="1" height="2.3" fill="#3f8d5a"/><rect x="1033.0" y="948.9" width="1" height="1.1" fill="#3f8d5a"/><rect x="1034.0" y="920" width="1" height="2.1" fill="#3f8d5a"/><rect x="1036.0" y="920" width="1" height="1.9" fill="#3f8d5a"/><rect x="1036.0" y="948.9" width="1" height="1.1" fill="#3f8d5a"/><rect x="1038.0" y="920" width="1" height="2.3" fill="#3f8d5a"/><rect x="1050.0" y="920" width="1" height="2.3" fill="#3f8d5a"/><rect x="1053.0" y="920" width="1" height="2.1" fill="#3f8d5a"/><rect x="1053.0" y="948.7" width="1" height="1.3" fill="#3f8d5a"/><rect x="1065.0" y="920" width="1" height="2.0" fill="#3f8d5a"/><rect x="1090.0" y="920" width="1" height="1.7" fill="#3f8d5a"/><rect x="1100.0" y="920" width="1" height="1.7" fill="#3f8d5a"/><rect x="1104.0" y="920" width="1" height="1.6" fill="#3f8d5a"/><rect x="1113.0" y="920" width="1" height="2.1" fill="#3f8d5a"/><rect x="1113.0" y="948.9" width="1" height="1.1" fill="#3f8d5a"/><rect x="1116.0" y="920" width="1" height="2.4" fill="#3f8d5a"/><rect x="1116.0" y="948.5" width="1" height="1.5" fill="#3f8d5a"/><rect x="1122.0" y="920" width="1" height="5.7" fill="#3f8d5a"/><rect x="1122.0" y="948.3" width="1" height="1.7" fill="#3f8d5a"/><rect x="1123.0" y="920" width="1" height="2.2" fill="#3f8d5a"/><rect x="1123.0" y="948.7" width="1" height="1.3" fill="#3f8d5a"/><rect x="1124.0" y="920" width="1" height="0.6" fill="#3f8d5a"/><rect x="1125.0" y="920" width="1" height="3.7" fill="#3f8d5a"/><rect x="1126.0" y="920" width="1" height="1.0" fill="#3f8d5a"/><rect x="1127.0" y="920" width="1" height="2.9" fill="#3f8d5a"/><rect x="1127.0" y="948.3" width="1" height="1.7" fill="#3f8d5a"/><rect x="1128.0" y="920" width="1" height="1.0" fill="#3f8d5a"/><rect x="1129.0" y="920" width="1" height="2.2" fill="#3f8d5a"/><rect x="1129.0" y="949.1" width="1" height="0.9" fill="#3f8d5a"/><rect x="1130.0" y="920" width="1" height="1.0" fill="#3f8d5a"/><rect x="1131.0" y="920" width="1" height="4.4" fill="#3f8d5a"/><rect x="1131.0" y="948.6" width="1" height="1.4" fill="#3f8d5a"/><rect x="1132.0" y="920" width="1" height="3.7" fill="#3f8d5a"/><rect x="1132.0" y="947.9" width="1" height="2.1" fill="#3f8d5a"/><rect x="1133.0" y="920" width="1" height="5.0" fill="#3f8d5a"/><rect x="1133.0" y="947.4" width="1" height="2.6" fill="#3f8d5a"/><rect x="1134.0" y="920" width="1" height="5.1" fill="#3f8d5a"/><rect x="1134.0" y="948.9" width="1" height="1.1" fill="#3f8d5a"/><rect x="1135.0" y="920" width="1" height="3.4" fill="#3f8d5a"/><rect x="1135.0" y="947.9" width="1" height="2.1" fill="#3f8d5a"/><rect x="1136.0" y="920" width="1" height="2.4" fill="#3f8d5a"/><rect x="1136.0" y="948.5" width="1" height="1.5" fill="#3f8d5a"/><rect x="1137.0" y="920" width="1" height="3.8" fill="#3f8d5a"/><rect x="1137.0" y="948.8" width="1" height="1.2" fill="#3f8d5a"/><rect x="1138.0" y="920" width="1" height="1.0" fill="#3f8d5a"/><rect x="1139.0" y="920" width="1" height="2.4" fill="#3f8d5a"/><rect x="1139.0" y="948.3" width="1" height="1.7" fill="#3f8d5a"/><rect x="1140.0" y="920" width="1" height="3.3" fill="#3f8d5a"/><rect x="1140.0" y="947.8" width="1" height="2.2" fill="#3f8d5a"/><rect x="1141.0" y="920" width="1" height="4.7" fill="#3f8d5a"/><rect x="1141.0" y="947.0" width="1" height="3.0" fill="#3f8d5a"/><rect x="1142.0" y="920" width="1" height="1.4" fill="#3f8d5a"/><rect x="1142.0" y="949.0" width="1" height="1.0" fill="#3f8d5a"/><rect x="1143.0" y="920" width="1" height="0.9" fill="#3f8d5a"/><rect x="1144.0" y="920" width="1" height="6.2" fill="#3f8d5a"/><rect x="1144.0" y="947.7" width="1" height="2.3" fill="#3f8d5a"/><rect x="1145.0" y="920" width="1" height="6.2" fill="#3f8d5a"/><rect x="1145.0" y="946.3" width="1" height="3.7" fill="#3f8d5a"/><rect x="1146.0" y="920" width="1" height="1.0" fill="#3f8d5a"/><rect x="1147.0" y="920" width="1" height="0.7" fill="#3f8d5a"/><rect x="1148.0" y="920" width="1" height="6.4" fill="#3f8d5a"/><rect x="1148.0" y="946.0" width="1" height="4.0" fill="#3f8d5a"/><rect x="1149.0" y="920" width="1" height="5.6" fill="#3f8d5a"/><rect x="1149.0" y="948.2" width="1" height="1.8" fill="#3f8d5a"/><rect x="1150.0" y="920" width="1" height="1.5" fill="#3f8d5a"/><rect x="1150.0" y="949.0" width="1" height="1.0" fill="#3f8d5a"/><rect x="1151.0" y="920" width="1" height="1.0" fill="#3f8d5a"/><rect x="1152.0" y="920" width="1" height="5.8" fill="#3f8d5a"/><rect x="1152.0" y="946.8" width="1" height="3.2" fill="#3f8d5a"/><rect x="1153.0" y="920" width="1" height="4.0" fill="#3f8d5a"/><rect x="1153.0" y="947.7" width="1" height="2.3" fill="#3f8d5a"/><rect x="1154.0" y="920" width="1" height="5.5" fill="#3f8d5a"/><rect x="1154.0" y="948.7" width="1" height="1.3" fill="#3f8d5a"/><rect x="1155.0" y="920" width="1" height="4.2" fill="#3f8d5a"/><rect x="1155.0" y="948.2" width="1" height="1.8" fill="#3f8d5a"/><rect x="1156.0" y="920" width="1" height="0.6" fill="#3f8d5a"/><rect x="1157.0" y="920" width="1" height="5.7" fill="#3f8d5a"/><rect x="1157.0" y="946.2" width="1" height="3.8" fill="#3f8d5a"/><rect x="1158.0" y="920" width="1" height="1.6" fill="#3f8d5a"/><rect x="1158.0" y="949.0" width="1" height="1.0" fill="#3f8d5a"/><rect x="1159.0" y="920" width="1" height="3.5" fill="#3f8d5a"/><rect x="1159.0" y="948.9" width="1" height="1.1" fill="#3f8d5a"/><rect x="1160.0" y="920" width="1" height="1.0" fill="#3f8d5a"/><rect x="1161.0" y="920" width="1" height="1.4" fill="#3f8d5a"/><rect x="1162.0" y="920" width="1" height="5.8" fill="#3f8d5a"/><rect x="1162.0" y="948.4" width="1" height="1.6" fill="#3f8d5a"/><rect x="1163.0" y="920" width="1" height="2.8" fill="#3f8d5a"/><rect x="1163.0" y="948.2" width="1" height="1.8" fill="#3f8d5a"/><rect x="1164.0" y="920" width="1" height="4.5" fill="#3f8d5a"/><rect x="1164.0" y="946.7" width="1" height="3.3" fill="#3f8d5a"/><rect x="1165.0" y="920" width="1" height="0.6" fill="#3f8d5a"/><rect x="1166.0" y="920" width="1" height="5.0" fill="#3f8d5a"/><rect x="1166.0" y="947.1" width="1" height="2.9" fill="#3f8d5a"/><rect x="1167.0" y="920" width="1" height="3.7" fill="#3f8d5a"/><rect x="1167.0" y="948.2" width="1" height="1.8" fill="#3f8d5a"/><rect x="1168.0" y="920" width="1" height="4.7" fill="#3f8d5a"/><rect x="1168.0" y="946.7" width="1" height="3.3" fill="#3f8d5a"/><rect x="1169.0" y="920" width="1" height="5.5" fill="#3f8d5a"/><rect x="1169.0" y="946.1" width="1" height="3.9" fill="#3f8d5a"/><rect x="1170.0" y="920" width="1" height="5.1" fill="#3f8d5a"/><rect x="1170.0" y="949.1" width="1" height="0.9" fill="#3f8d5a"/><rect x="1171.0" y="920" width="1" height="5.8" fill="#3f8d5a"/><rect x="1171.0" y="947.1" width="1" height="2.9" fill="#3f8d5a"/><rect x="1172.0" y="920" width="1" height="1.0" fill="#3f8d5a"/><rect x="1173.0" y="920" width="1" height="1.0" fill="#3f8d5a"/><rect x="1174.0" y="920" width="1" height="2.5" fill="#3f8d5a"/><rect x="1174.0" y="948.9" width="1" height="1.1" fill="#3f8d5a"/><rect x="1175.0" y="920" width="1" height="2.9" fill="#3f8d5a"/><rect x="1176.0" y="920" width="1" height="6.4" fill="#3f8d5a"/><rect x="1176.0" y="946.1" width="1" height="3.9" fill="#3f8d5a"/><rect x="1177.0" y="920" width="1" height="1.0" fill="#3f8d5a"/><rect x="1178.0" y="920" width="1" height="6.5" fill="#3f8d5a"/><rect x="1178.0" y="945.8" width="1" height="4.2" fill="#3f8d5a"/><rect x="1179.0" y="920" width="1" height="2.5" fill="#3f8d5a"/><rect x="1179.0" y="948.7" width="1" height="1.3" fill="#3f8d5a"/><rect x="1180.0" y="920" width="1" height="2.4" fill="#3f8d5a"/><rect x="1180.0" y="948.4" width="1" height="1.6" fill="#3f8d5a"/><rect x="1181.0" y="920" width="1" height="1.0" fill="#3f8d5a"/><rect x="1182.0" y="920" width="1" height="5.4" fill="#3f8d5a"/><rect x="1182.0" y="946.2" width="1" height="3.8" fill="#3f8d5a"/><rect x="1183.0" y="920" width="1" height="4.1" fill="#3f8d5a"/><rect x="1183.0" y="948.8" width="1" height="1.2" fill="#3f8d5a"/><rect x="1184.0" y="920" width="1" height="2.9" fill="#3f8d5a"/><rect x="1184.0" y="948.3" width="1" height="1.7" fill="#3f8d5a"/><rect x="1185.0" y="920" width="1" height="4.2" fill="#3f8d5a"/><rect x="1185.0" y="947.0" width="1" height="3.0" fill="#3f8d5a"/><rect x="1186.0" y="920" width="1" height="4.1" fill="#3f8d5a"/><rect x="1186.0" y="947.5" width="1" height="2.5" fill="#3f8d5a"/><rect x="1187.0" y="920" width="1" height="6.2" fill="#3f8d5a"/><rect x="1187.0" y="947.0" width="1" height="3.0" fill="#3f8d5a"/><rect x="1188.0" y="920" width="1" height="1.0" fill="#3f8d5a"/><rect x="1189.0" y="920" width="1" height="1.0" fill="#3f8d5a"/><rect x="1190.0" y="920" width="1" height="2.7" fill="#3f8d5a"/><rect x="1190.0" y="948.1" width="1" height="1.9" fill="#3f8d5a"/><rect x="1191.0" y="920" width="1" height="2.5" fill="#3f8d5a"/><rect x="1191.0" y="948.4" width="1" height="1.6" fill="#3f8d5a"/><rect x="1192.0" y="920" width="1" height="1.0" fill="#3f8d5a"/><rect x="1193.0" y="920" width="1" height="4.9" fill="#3f8d5a"/><rect x="1193.0" y="946.9" width="1" height="3.1" fill="#3f8d5a"/><rect x="1194.0" y="920" width="1" height="5.3" fill="#3f8d5a"/><rect x="1194.0" y="947.9" width="1" height="2.1" fill="#3f8d5a"/><rect x="1195.0" y="920" width="1" height="0.8" fill="#3f8d5a"/><rect x="1196.0" y="920" width="1" height="2.5" fill="#3f8d5a"/><rect x="1196.0" y="948.2" width="1" height="1.8" fill="#3f8d5a"/><rect x="1197.0" y="920" width="1" height="4.4" fill="#3f8d5a"/><rect x="1197.0" y="947.3" width="1" height="2.7" fill="#3f8d5a"/><rect x="1198.0" y="920" width="1" height="5.0" fill="#3f8d5a"/><rect x="1198.0" y="947.8" width="1" height="2.2" fill="#3f8d5a"/><rect x="1199.0" y="920" width="1" height="1.2" fill="#3f8d5a"/><rect x="1200.0" y="920" width="1" height="1.8" fill="#3f8d5a"/><rect x="1201.0" y="920" width="1" height="6.4" fill="#3f8d5a"/><rect x="1201.0" y="946.1" width="1" height="3.9" fill="#3f8d5a"/><rect x="1202.0" y="920" width="1" height="5.4" fill="#3f8d5a"/><rect x="1202.0" y="948.2" width="1" height="1.8" fill="#3f8d5a"/><rect x="1203.0" y="920" width="1" height="2.8" fill="#3f8d5a"/><rect x="1203.0" y="948.6" width="1" height="1.4" fill="#3f8d5a"/><rect x="1204.0" y="920" width="1" height="3.6" fill="#3f8d5a"/><rect x="1204.0" y="947.7" width="1" height="2.3" fill="#3f8d5a"/><rect x="1205.0" y="920" width="1" height="6.2" fill="#3f8d5a"/><rect x="1205.0" y="947.2" width="1" height="2.8" fill="#3f8d5a"/><rect x="1206.0" y="920" width="1" height="0.9" fill="#3f8d5a"/><rect x="1207.0" y="920" width="1" height="5.8" fill="#3f8d5a"/><rect x="1207.0" y="946.1" width="1" height="3.9" fill="#3f8d5a"/><rect x="1208.0" y="920" width="1" height="2.7" fill="#3f8d5a"/><rect x="1209.0" y="920" width="1" height="6.0" fill="#3f8d5a"/><rect x="1209.0" y="948.0" width="1" height="2.0" fill="#3f8d5a"/><rect x="1210.0" y="920" width="1" height="4.4" fill="#3f8d5a"/><rect x="1210.0" y="947.3" width="1" height="2.7" fill="#3f8d5a"/><rect x="1211.0" y="920" width="1" height="1.8" fill="#3f8d5a"/><rect x="1212.0" y="920" width="1" height="1.0" fill="#3f8d5a"/><rect x="1213.0" y="920" width="1" height="4.3" fill="#3f8d5a"/><rect x="1213.0" y="948.3" width="1" height="1.7" fill="#3f8d5a"/><rect x="1214.0" y="920" width="1" height="0.7" fill="#3f8d5a"/><rect x="1215.0" y="920" width="1" height="6.3" fill="#3f8d5a"/><rect x="1215.0" y="947.1" width="1" height="2.9" fill="#3f8d5a"/><rect x="1222.0" y="920" width="1" height="1.7" fill="#3f8d5a"/><rect x="1222.0" y="948.9" width="1" height="1.1" fill="#3f8d5a"/><rect x="1234.0" y="920" width="1" height="2.2" fill="#3f8d5a"/><rect x="1234.0" y="948.6" width="1" height="1.4" fill="#3f8d5a"/><rect x="1236.0" y="920" width="1" height="1.9" fill="#3f8d5a"/><rect x="1239.0" y="920" width="1" height="1.6" fill="#3f8d5a"/><rect x="1243.0" y="920" width="1" height="1.6" fill="#3f8d5a"/><rect x="1247.0" y="920" width="1" height="1.7" fill="#3f8d5a"/><rect x="1247.0" y="948.9" width="1" height="1.1" fill="#3f8d5a"/><rect x="1252.0" y="920" width="1" height="2.4" fill="#3f8d5a"/><rect x="1252.0" y="948.6" width="1" height="1.4" fill="#3f8d5a"/><rect x="1257.0" y="920" width="1" height="1.8" fill="#3f8d5a"/><rect x="1257.0" y="948.8" width="1" height="1.2" fill="#3f8d5a"/><rect x="1260.0" y="920" width="1" height="2.0" fill="#3f8d5a"/><rect x="1260.0" y="949.1" width="1" height="0.9" fill="#3f8d5a"/><rect x="1264.0" y="920" width="1" height="2.5" fill="#3f8d5a"/><rect x="1264.0" y="948.7" width="1" height="1.3" fill="#3f8d5a"/><rect x="1266.0" y="920" width="1" height="2.2" fill="#3f8d5a"/><rect x="1266.0" y="948.8" width="1" height="1.2" fill="#3f8d5a"/><rect x="1267.0" y="920" width="1" height="2.0" fill="#3f8d5a"/><rect x="1267.0" y="948.8" width="1" height="1.2" fill="#3f8d5a"/><rect x="1268.0" y="920" width="1" height="1.4" fill="#3f8d5a"/><rect x="1269.0" y="920" width="1" height="2.6" fill="#3f8d5a"/><rect x="1269.0" y="949.1" width="1" height="0.9" fill="#3f8d5a"/><rect x="1270.0" y="920" width="1" height="3.4" fill="#3f8d5a"/><rect x="1270.0" y="947.8" width="1" height="2.2" fill="#3f8d5a"/><rect x="1271.0" y="920" width="1" height="1.0" fill="#3f8d5a"/><rect x="1272.0" y="920" width="1" height="1.0" fill="#3f8d5a"/><rect x="1273.0" y="920" width="1" height="2.5" fill="#3f8d5a"/><rect x="1273.0" y="948.3" width="1" height="1.7" fill="#3f8d5a"/><rect x="1274.0" y="920" width="1" height="1.4" fill="#3f8d5a"/><rect x="1275.0" y="920" width="1" height="1.1" fill="#3f8d5a"/><rect x="1276.0" y="920" width="1" height="2.4" fill="#3f8d5a"/><rect x="1276.0" y="948.3" width="1" height="1.7" fill="#3f8d5a"/><rect x="1277.0" y="920" width="1" height="2.7" fill="#3f8d5a"/><rect x="1278.0" y="920" width="1" height="1.0" fill="#3f8d5a"/><rect x="1279.0" y="920" width="1" height="2.3" fill="#3f8d5a"/><rect x="1279.0" y="948.4" width="1" height="1.6" fill="#3f8d5a"/><rect x="1280.0" y="920" width="1" height="3.5" fill="#3f8d5a"/><rect x="1280.0" y="947.9" width="1" height="2.1" fill="#3f8d5a"/><rect x="1281.0" y="920" width="1" height="3.1" fill="#3f8d5a"/><rect x="1281.0" y="948.8" width="1" height="1.2" fill="#3f8d5a"/><rect x="1290.0" y="920" width="1" height="1.9" fill="#3f8d5a"/><rect x="1292.0" y="920" width="1" height="2.1" fill="#3f8d5a"/><rect x="1292.0" y="949.1" width="1" height="0.9" fill="#3f8d5a"/><rect x="1305.0" y="920" width="1" height="1.7" fill="#3f8d5a"/><rect x="1316.0" y="920" width="1" height="2.4" fill="#3f8d5a"/><rect x="1317.0" y="920" width="1" height="1.8" fill="#3f8d5a"/><rect x="1326.0" y="920" width="1" height="1.7" fill="#3f8d5a"/><rect x="1326.0" y="948.9" width="1" height="1.1" fill="#3f8d5a"/><rect x="1332.0" y="920" width="1" height="2.4" fill="#3f8d5a"/><rect x="1332.0" y="948.6" width="1" height="1.4" fill="#3f8d5a"/><rect x="1340.0" y="920" width="1" height="2.2" fill="#3f8d5a"/><rect x="1340.0" y="948.7" width="1" height="1.3" fill="#3f8d5a"/><rect x="1344.0" y="920" width="1" height="2.0" fill="#3f8d5a"/><rect x="1344.0" y="948.8" width="1" height="1.2" fill="#3f8d5a"/><rect x="1366.0" y="920" width="1" height="1.6" fill="#3f8d5a"/><rect x="1368.0" y="920" width="1" height="2.1" fill="#3f8d5a"/><rect x="1368.0" y="948.5" width="1" height="1.5" fill="#3f8d5a"/><rect x="1375.0" y="920" width="1" height="2.2" fill="#3f8d5a"/><rect x="1378.0" y="920" width="1" height="4.8" fill="#3f8d5a"/><rect x="1378.0" y="947.1" width="1" height="2.9" fill="#3f8d5a"/><rect x="1379.0" y="920" width="1" height="4.3" fill="#3f8d5a"/><rect x="1379.0" y="946.9" width="1" height="3.1" fill="#3f8d5a"/><rect x="1380.0" y="920" width="1" height="4.5" fill="#3f8d5a"/><rect x="1380.0" y="948.0" width="1" height="2.0" fill="#3f8d5a"/><rect x="1381.0" y="920" width="1" height="4.8" fill="#3f8d5a"/><rect x="1381.0" y="947.2" width="1" height="2.8" fill="#3f8d5a"/><rect x="1382.0" y="920" width="1" height="5.0" fill="#3f8d5a"/><rect x="1382.0" y="947.1" width="1" height="2.9" fill="#3f8d5a"/><rect x="1383.0" y="920" width="1" height="0.7" fill="#3f8d5a"/><rect x="1384.0" y="920" width="1" height="2.3" fill="#3f8d5a"/><rect x="1385.0" y="920" width="1" height="1.7" fill="#3f8d5a"/><rect x="1385.0" y="948.9" width="1" height="1.1" fill="#3f8d5a"/><rect x="1386.0" y="920" width="1" height="2.0" fill="#3f8d5a"/><rect x="1387.0" y="920" width="1" height="5.4" fill="#3f8d5a"/><rect x="1388.0" y="920" width="1" height="5.2" fill="#3f8d5a"/><rect x="1388.0" y="946.2" width="1" height="3.8" fill="#3f8d5a"/><rect x="1389.0" y="920" width="1" height="2.6" fill="#3f8d5a"/><rect x="1389.0" y="948.6" width="1" height="1.4" fill="#3f8d5a"/><rect x="1390.0" y="920" width="1" height="3.0" fill="#3f8d5a"/><rect x="1390.0" y="948.4" width="1" height="1.6" fill="#3f8d5a"/><rect x="1391.0" y="920" width="1" height="1.0" fill="#3f8d5a"/><rect x="1392.0" y="920" width="1" height="1.2" fill="#3f8d5a"/><rect x="1393.0" y="920" width="1" height="2.2" fill="#3f8d5a"/><rect x="1393.0" y="948.6" width="1" height="1.4" fill="#3f8d5a"/><rect x="1394.0" y="920" width="1" height="2.6" fill="#3f8d5a"/><rect x="1394.0" y="948.6" width="1" height="1.4" fill="#3f8d5a"/><rect x="1395.0" y="920" width="1" height="5.2" fill="#3f8d5a"/><rect x="1395.0" y="947.1" width="1" height="2.9" fill="#3f8d5a"/><rect x="1396.0" y="920" width="1" height="1.6" fill="#3f8d5a"/><rect x="1396.0" y="949.0" width="1" height="1.0" fill="#3f8d5a"/><rect x="1397.0" y="920" width="1" height="4.3" fill="#3f8d5a"/><rect x="1397.0" y="948.3" width="1" height="1.7" fill="#3f8d5a"/><rect x="1398.0" y="920" width="1" height="4.7" fill="#3f8d5a"/><rect x="1398.0" y="948.7" width="1" height="1.3" fill="#3f8d5a"/><rect x="1399.0" y="920" width="1" height="1.8" fill="#3f8d5a"/><rect x="1399.0" y="948.9" width="1" height="1.1" fill="#3f8d5a"/><rect x="1400.0" y="920" width="1" height="4.6" fill="#3f8d5a"/><rect x="1400.0" y="948.2" width="1" height="1.8" fill="#3f8d5a"/><rect x="1401.0" y="920" width="1" height="4.1" fill="#3f8d5a"/><rect x="1401.0" y="947.7" width="1" height="2.3" fill="#3f8d5a"/><rect x="1402.0" y="920" width="1" height="1.8" fill="#3f8d5a"/><rect x="1402.0" y="948.9" width="1" height="1.1" fill="#3f8d5a"/><rect x="1403.0" y="920" width="1" height="4.0" fill="#3f8d5a"/><rect x="1403.0" y="948.4" width="1" height="1.6" fill="#3f8d5a"/><rect x="1404.0" y="920" width="1" height="3.0" fill="#3f8d5a"/><rect x="1404.0" y="948.3" width="1" height="1.7" fill="#3f8d5a"/><rect x="1405.0" y="920" width="1" height="0.8" fill="#3f8d5a"/><rect x="1406.0" y="920" width="1" height="2.4" fill="#3f8d5a"/><rect x="1406.0" y="948.6" width="1" height="1.4" fill="#3f8d5a"/><rect x="1407.0" y="920" width="1" height="3.9" fill="#3f8d5a"/><rect x="1407.0" y="947.3" width="1" height="2.7" fill="#3f8d5a"/><rect x="1408.0" y="920" width="1" height="2.5" fill="#3f8d5a"/><rect x="1408.0" y="948.5" width="1" height="1.5" fill="#3f8d5a"/><rect x="1409.0" y="920" width="1" height="1.6" fill="#3f8d5a"/><rect x="1410.0" y="920" width="1" height="4.8" fill="#3f8d5a"/><rect x="1410.0" y="947.0" width="1" height="3.0" fill="#3f8d5a"/><rect x="1411.0" y="920" width="1" height="1.0" fill="#3f8d5a"/><rect x="1412.0" y="920" width="1" height="2.5" fill="#3f8d5a"/><rect x="1412.0" y="948.4" width="1" height="1.6" fill="#3f8d5a"/><rect x="1413.0" y="920" width="1" height="3.9" fill="#3f8d5a"/><rect x="1413.0" y="948.9" width="1" height="1.1" fill="#3f8d5a"/><rect x="1414.0" y="920" width="1" height="3.4" fill="#3f8d5a"/><rect x="1414.0" y="948.8" width="1" height="1.2" fill="#3f8d5a"/><rect x="1415.0" y="920" width="1" height="1.0" fill="#3f8d5a"/><rect x="1416.0" y="920" width="1" height="1.9" fill="#3f8d5a"/><rect x="1417.0" y="920" width="1" height="3.5" fill="#3f8d5a"/><rect x="1417.0" y="948.4" width="1" height="1.6" fill="#3f8d5a"/><rect x="1418.0" y="920" width="1" height="3.5" fill="#3f8d5a"/><rect x="1418.0" y="947.7" width="1" height="2.3" fill="#3f8d5a"/><rect x="1419.0" y="920" width="1" height="1.1" fill="#3f8d5a"/><rect x="1420.0" y="920" width="1" height="2.2" fill="#3f8d5a"/><rect x="1420.0" y="948.7" width="1" height="1.3" fill="#3f8d5a"/><rect x="1421.0" y="920" width="1" height="2.5" fill="#3f8d5a"/><rect x="1421.0" y="948.7" width="1" height="1.3" fill="#3f8d5a"/><rect x="1422.0" y="920" width="1" height="4.6" fill="#3f8d5a"/><rect x="1422.0" y="947.8" width="1" height="2.2" fill="#3f8d5a"/><rect x="1423.0" y="920" width="1" height="5.2" fill="#3f8d5a"/><rect x="1423.0" y="946.3" width="1" height="3.7" fill="#3f8d5a"/><rect x="1424.0" y="920" width="1" height="1.3" fill="#3f8d5a"/><rect x="1425.0" y="920" width="1" height="2.3" fill="#3f8d5a"/><rect x="1426.0" y="920" width="1" height="1.0" fill="#3f8d5a"/><rect x="1427.0" y="920" width="1" height="3.2" fill="#3f8d5a"/><rect x="1427.0" y="948.1" width="1" height="1.9" fill="#3f8d5a"/><rect x="1428.0" y="920" width="1" height="1.1" fill="#3f8d5a"/><rect x="1429.0" y="920" width="1" height="3.1" fill="#3f8d5a"/><rect x="1430.0" y="920" width="1" height="1.3" fill="#3f8d5a"/><rect x="1431.0" y="920" width="1" height="2.3" fill="#3f8d5a"/><rect x="1431.0" y="948.5" width="1" height="1.5" fill="#3f8d5a"/><rect x="1432.0" y="920" width="1" height="1.3" fill="#3f8d5a"/><rect x="1433.0" y="920" width="1" height="3.5" fill="#3f8d5a"/><rect x="1433.0" y="947.6" width="1" height="2.4" fill="#3f8d5a"/><rect x="1434.0" y="920" width="1" height="1.7" fill="#3f8d5a"/><rect x="1434.0" y="948.9" width="1" height="1.1" fill="#3f8d5a"/><rect x="1435.0" y="920" width="1" height="2.6" fill="#3f8d5a"/><rect x="1436.0" y="920" width="1" height="5.4" fill="#3f8d5a"/><rect x="1436.0" y="948.4" width="1" height="1.6" fill="#3f8d5a"/><rect x="1437.0" y="920" width="1" height="4.4" fill="#3f8d5a"/><rect x="1437.0" y="946.9" width="1" height="3.1" fill="#3f8d5a"/><rect x="1438.0" y="920" width="1" height="1.0" fill="#3f8d5a"/><rect x="1439.0" y="920" width="1" height="1.0" fill="#3f8d5a"/><rect x="1440.0" y="920" width="1" height="3.2" fill="#3f8d5a"/><rect x="1440.0" y="948.0" width="1" height="2.0" fill="#3f8d5a"/><rect x="1441.0" y="920" width="1" height="1.5" fill="#3f8d5a"/><rect x="1442.0" y="920" width="1" height="1.0" fill="#3f8d5a"/><rect x="1443.0" y="920" width="1" height="2.6" fill="#3f8d5a"/><rect x="1443.0" y="948.9" width="1" height="1.1" fill="#3f8d5a"/><rect x="1444.0" y="920" width="1" height="3.2" fill="#3f8d5a"/><rect x="1444.0" y="947.7" width="1" height="2.3" fill="#3f8d5a"/><rect x="1445.0" y="920" width="1" height="4.9" fill="#3f8d5a"/><rect x="1445.0" y="947.8" width="1" height="2.2" fill="#3f8d5a"/><rect x="1446.0" y="920" width="1" height="4.4" fill="#3f8d5a"/><rect x="1446.0" y="948.0" width="1" height="2.0" fill="#3f8d5a"/><rect x="1447.0" y="920" width="1" height="3.0" fill="#3f8d5a"/><rect x="1447.0" y="948.0" width="1" height="2.0" fill="#3f8d5a"/><rect x="1448.0" y="920" width="1" height="1.0" fill="#3f8d5a"/><rect x="1449.0" y="920" width="1" height="4.5" fill="#3f8d5a"/><rect x="1449.0" y="947.3" width="1" height="2.7" fill="#3f8d5a"/><rect x="1450.0" y="920" width="1" height="1.0" fill="#3f8d5a"/><rect x="1451.0" y="920" width="1" height="4.9" fill="#3f8d5a"/><rect x="1451.0" y="946.7" width="1" height="3.3" fill="#3f8d5a"/><rect x="1452.0" y="920" width="1" height="2.7" fill="#3f8d5a"/><rect x="1452.0" y="948.7" width="1" height="1.3" fill="#3f8d5a"/><rect x="1453.0" y="920" width="1" height="2.8" fill="#3f8d5a"/><rect x="1454.0" y="920" width="1" height="5.1" fill="#3f8d5a"/><rect x="1454.0" y="947.5" width="1" height="2.5" fill="#3f8d5a"/><rect x="1455.0" y="920" width="1" height="5.0" fill="#3f8d5a"/><rect x="1455.0" y="946.7" width="1" height="3.3" fill="#3f8d5a"/><rect x="1456.0" y="920" width="1" height="5.2" fill="#3f8d5a"/><rect x="1456.0" y="946.6" width="1" height="3.4" fill="#3f8d5a"/><rect x="1457.0" y="920" width="1" height="1.0" fill="#3f8d5a"/><rect x="1458.0" y="920" width="1" height="4.7" fill="#3f8d5a"/><rect x="1458.0" y="948.1" width="1" height="1.9" fill="#3f8d5a"/><rect x="1459.0" y="920" width="1" height="2.8" fill="#3f8d5a"/><rect x="1459.0" y="948.1" width="1" height="1.9" fill="#3f8d5a"/><rect x="1460.0" y="920" width="1" height="3.6" fill="#3f8d5a"/><rect x="1460.0" y="948.4" width="1" height="1.6" fill="#3f8d5a"/><rect x="1461.0" y="920" width="1" height="2.6" fill="#3f8d5a"/><rect x="1461.0" y="948.2" width="1" height="1.8" fill="#3f8d5a"/><rect x="1462.0" y="920" width="1" height="5.0" fill="#3f8d5a"/><rect x="1462.0" y="948.4" width="1" height="1.6" fill="#3f8d5a"/><rect x="1463.0" y="920" width="1" height="1.0" fill="#3f8d5a"/><rect x="1464.0" y="920" width="1" height="4.1" fill="#3f8d5a"/><rect x="1465.0" y="920" width="1" height="1.0" fill="#3f8d5a"/><rect x="1466.0" y="920" width="1" height="2.6" fill="#3f8d5a"/><rect x="1466.0" y="948.3" width="1" height="1.7" fill="#3f8d5a"/><rect x="1467.0" y="920" width="1" height="5.0" fill="#3f8d5a"/><rect x="1467.0" y="948.1" width="1" height="1.9" fill="#3f8d5a"/><rect x="1468.0" y="920" width="1" height="2.1" fill="#3f8d5a"/><rect x="1469.0" y="920" width="1" height="0.8" fill="#3f8d5a"/><rect x="1470.0" y="920" width="1" height="1.1" fill="#3f8d5a"/><rect x="1471.0" y="920" width="1" height="1.9" fill="#3f8d5a"/><rect x="1471.0" y="949.0" width="1" height="1.0" fill="#3f8d5a"/><rect x="1472.0" y="920" width="1" height="4.7" fill="#3f8d5a"/><rect x="1472.0" y="946.6" width="1" height="3.4" fill="#3f8d5a"/><rect x="1473.0" y="920" width="1" height="4.0" fill="#3f8d5a"/><rect x="1473.0" y="947.2" width="1" height="2.8" fill="#3f8d5a"/><rect x="1474.0" y="920" width="1" height="5.1" fill="#3f8d5a"/><rect x="1474.0" y="946.7" width="1" height="3.3" fill="#3f8d5a"/><rect x="1475.0" y="920" width="1" height="5.0" fill="#3f8d5a"/><rect x="1475.0" y="947.2" width="1" height="2.8" fill="#3f8d5a"/><rect x="1476.0" y="920" width="1" height="3.8" fill="#3f8d5a"/><rect x="1476.0" y="947.5" width="1" height="2.5" fill="#3f8d5a"/><rect x="1477.0" y="920" width="1" height="3.3" fill="#3f8d5a"/><rect x="1477.0" y="948.3" width="1" height="1.7" fill="#3f8d5a"/><rect x="1478.0" y="920" width="1" height="1.0" fill="#3f8d5a"/><rect x="1479.0" y="920" width="1" height="2.7" fill="#3f8d5a"/><rect x="1479.0" y="948.7" width="1" height="1.3" fill="#3f8d5a"/><rect x="1480.0" y="920" width="1" height="1.0" fill="#3f8d5a"/><rect x="1481.0" y="920" width="1" height="5.2" fill="#3f8d5a"/><rect x="1481.0" y="949.0" width="1" height="1.0" fill="#3f8d5a"/><rect x="1482.0" y="920" width="1" height="3.1" fill="#3f8d5a"/><rect x="1482.0" y="948.1" width="1" height="1.9" fill="#3f8d5a"/><rect x="1484.0" y="920" width="1" height="2.0" fill="#3f8d5a"/><rect x="1484.0" y="948.7" width="1" height="1.3" fill="#3f8d5a"/><rect x="1518.0" y="920" width="1" height="2.0" fill="#3f8d5a"/><rect x="1518.0" y="948.6" width="1" height="1.4" fill="#3f8d5a"/><rect x="1534.0" y="920" width="1" height="1.5" fill="#3f8d5a"/><rect x="1552.0" y="920" width="1" height="2.4" fill="#3f8d5a"/><rect x="1552.0" y="948.7" width="1" height="1.3" fill="#3f8d5a"/><rect x="1553.0" y="920" width="1" height="1.6" fill="#3f8d5a"/><rect x="1553.0" y="949.0" width="1" height="1.0" fill="#3f8d5a"/><rect x="1569.0" y="920" width="1" height="1.7" fill="#3f8d5a"/><rect x="1575.0" y="920" width="1" height="4.3" fill="#3f8d5a"/><rect x="1575.0" y="947.7" width="1" height="2.3" fill="#3f8d5a"/><rect x="1576.0" y="920" width="1" height="3.1" fill="#3f8d5a"/><rect x="1576.0" y="948.9" width="1" height="1.1" fill="#3f8d5a"/><rect x="1577.0" y="920" width="1" height="1.0" fill="#3f8d5a"/><rect x="1578.0" y="920" width="1" height="1.0" fill="#3f8d5a"/><rect x="1579.0" y="920" width="1" height="2.5" fill="#3f8d5a"/><rect x="1579.0" y="948.8" width="1" height="1.2" fill="#3f8d5a"/><rect x="1585.0" y="920" width="1" height="2.3" fill="#3f8d5a"/><rect x="1585.0" y="948.5" width="1" height="1.5" fill="#3f8d5a"/><rect x="1607.0" y="920" width="1" height="2.4" fill="#3f8d5a"/><rect x="1607.0" y="948.4" width="1" height="1.6" fill="#3f8d5a"/><rect x="1608.0" y="920" width="1" height="1.8" fill="#3f8d5a"/><rect x="1608.0" y="949.0" width="1" height="1.0" fill="#3f8d5a"/><rect x="1632.0" y="920" width="1" height="1.7" fill="#3f8d5a"/><rect x="1636.0" y="920" width="1" height="1.8" fill="#3f8d5a"/><rect x="1636.0" y="948.9" width="1" height="1.1" fill="#3f8d5a"/><rect x="1642.0" y="920" width="1" height="2.4" fill="#3f8d5a"/><rect x="1642.0" y="948.7" width="1" height="1.3" fill="#3f8d5a"/><rect x="1647.0" y="920" width="1" height="2.4" fill="#3f8d5a"/><rect x="1647.0" y="948.5" width="1" height="1.5" fill="#3f8d5a"/><rect x="1650.0" y="920" width="1" height="1.6" fill="#3f8d5a"/><rect x="1651.0" y="920" width="1" height="2.2" fill="#3f8d5a"/><rect x="1651.0" y="948.7" width="1" height="1.3" fill="#3f8d5a"/><rect x="1652.0" y="920" width="1" height="1.7" fill="#3f8d5a"/><rect x="1670.0" y="920" width="1" height="2.0" fill="#3f8d5a"/><rect x="1670.0" y="948.8" width="1" height="1.2" fill="#3f8d5a"/><rect x="1671.0" y="920" width="1" height="1.9" fill="#3f8d5a"/><rect x="1671.0" y="948.7" width="1" height="1.3" fill="#3f8d5a"/><rect x="1686.0" y="920" width="1" height="2.3" fill="#3f8d5a"/><rect x="1686.0" y="948.5" width="1" height="1.5" fill="#3f8d5a"/><rect x="1688.0" y="920" width="1" height="2.3" fill="#3f8d5a"/><rect x="1688.0" y="948.8" width="1" height="1.2" fill="#3f8d5a"/><rect x="1715.0" y="920" width="1" height="2.4" fill="#3f8d5a"/><rect x="1715.0" y="948.4" width="1" height="1.6" fill="#3f8d5a"/><rect x="1723.0" y="920" width="1" height="2.3" fill="#3f8d5a"/><rect x="1724.0" y="920" width="1" height="1.6" fill="#3f8d5a"/><rect x="1724.0" y="949.0" width="1" height="1.0" fill="#3f8d5a"/><rect x="1725.0" y="920" width="1" height="5.1" fill="#3f8d5a"/><rect x="1725.0" y="947.9" width="1" height="2.1" fill="#3f8d5a"/><rect x="1726.0" y="920" width="1" height="4.7" fill="#3f8d5a"/><rect x="1726.0" y="948.7" width="1" height="1.3" fill="#3f8d5a"/><rect x="1727.0" y="920" width="1" height="5.1" fill="#3f8d5a"/><rect x="1727.0" y="948.1" width="1" height="1.9" fill="#3f8d5a"/><rect x="1728.0" y="920" width="1" height="2.7" fill="#3f8d5a"/><rect x="1728.0" y="948.7" width="1" height="1.3" fill="#3f8d5a"/><rect x="1729.0" y="920" width="1" height="1.0" fill="#3f8d5a"/><rect x="1730.0" y="920" width="1" height="1.0" fill="#3f8d5a"/><rect x="1731.0" y="920" width="1" height="5.6" fill="#3f8d5a"/><rect x="1731.0" y="946.4" width="1" height="3.6" fill="#3f8d5a"/><rect x="1732.0" y="920" width="1" height="5.8" fill="#3f8d5a"/><rect x="1732.0" y="947.2" width="1" height="2.8" fill="#3f8d5a"/><rect x="1733.0" y="920" width="1" height="1.0" fill="#3f8d5a"/><rect x="1734.0" y="920" width="1" height="5.3" fill="#3f8d5a"/><rect x="1734.0" y="948.3" width="1" height="1.7" fill="#3f8d5a"/><rect x="1735.0" y="920" width="1" height="1.1" fill="#3f8d5a"/><rect x="1736.0" y="920" width="1" height="5.2" fill="#3f8d5a"/><rect x="1736.0" y="948.4" width="1" height="1.6" fill="#3f8d5a"/><rect x="1737.0" y="920" width="1" height="3.2" fill="#3f8d5a"/><rect x="1737.0" y="948.7" width="1" height="1.3" fill="#3f8d5a"/><rect x="1738.0" y="920" width="1" height="0.9" fill="#3f8d5a"/><rect x="1739.0" y="920" width="1" height="5.8" fill="#3f8d5a"/><rect x="1739.0" y="946.0" width="1" height="4.0" fill="#3f8d5a"/><rect x="1740.0" y="920" width="1" height="3.7" fill="#3f8d5a"/><rect x="1740.0" y="948.0" width="1" height="2.0" fill="#3f8d5a"/><rect x="1741.0" y="920" width="1" height="5.2" fill="#3f8d5a"/><rect x="1741.0" y="947.7" width="1" height="2.3" fill="#3f8d5a"/><rect x="1742.0" y="920" width="1" height="1.0" fill="#3f8d5a"/><rect x="1743.0" y="920" width="1" height="5.6" fill="#3f8d5a"/><rect x="1743.0" y="948.4" width="1" height="1.6" fill="#3f8d5a"/><rect x="1744.0" y="920" width="1" height="3.9" fill="#3f8d5a"/><rect x="1744.0" y="948.2" width="1" height="1.8" fill="#3f8d5a"/><rect x="1745.0" y="920" width="1" height="6.2" fill="#3f8d5a"/><rect x="1745.0" y="946.8" width="1" height="3.2" fill="#3f8d5a"/><rect x="1746.0" y="920" width="1" height="2.5" fill="#3f8d5a"/><rect x="1746.0" y="948.3" width="1" height="1.7" fill="#3f8d5a"/><rect x="1747.0" y="920" width="1" height="6.0" fill="#3f8d5a"/><rect x="1747.0" y="946.4" width="1" height="3.6" fill="#3f8d5a"/><rect x="1748.0" y="920" width="1" height="1.0" fill="#3f8d5a"/><rect x="1749.0" y="920" width="1" height="4.1" fill="#3f8d5a"/><rect x="1749.0" y="947.2" width="1" height="2.8" fill="#3f8d5a"/><rect x="1750.0" y="920" width="1" height="1.4" fill="#3f8d5a"/><rect x="1750.0" y="949.0" width="1" height="1.0" fill="#3f8d5a"/><rect x="1751.0" y="920" width="1" height="4.9" fill="#3f8d5a"/><rect x="1751.0" y="946.8" width="1" height="3.2" fill="#3f8d5a"/><rect x="1752.0" y="920" width="1" height="3.7" fill="#3f8d5a"/><rect x="1752.0" y="947.5" width="1" height="2.5" fill="#3f8d5a"/><rect x="1753.0" y="920" width="1" height="1.0" fill="#3f8d5a"/><rect x="1754.0" y="920" width="1" height="4.9" fill="#3f8d5a"/><rect x="1754.0" y="947.2" width="1" height="2.8" fill="#3f8d5a"/><rect x="1755.0" y="920" width="1" height="1.9" fill="#3f8d5a"/><rect x="1756.0" y="920" width="1" height="3.9" fill="#3f8d5a"/><rect x="1756.0" y="948.4" width="1" height="1.6" fill="#3f8d5a"/><rect x="1757.0" y="920" width="1" height="4.2" fill="#3f8d5a"/><rect x="1757.0" y="947.3" width="1" height="2.7" fill="#3f8d5a"/><rect x="1758.0" y="920" width="1" height="1.9" fill="#3f8d5a"/><rect x="1758.0" y="948.7" width="1" height="1.3" fill="#3f8d5a"/><rect x="1759.0" y="920" width="1" height="6.3" fill="#3f8d5a"/><rect x="1759.0" y="945.4" width="1" height="4.6" fill="#3f8d5a"/><rect x="1760.0" y="920" width="1" height="4.4" fill="#3f8d5a"/><rect x="1760.0" y="946.8" width="1" height="3.2" fill="#3f8d5a"/><rect x="1761.0" y="920" width="1" height="4.2" fill="#3f8d5a"/><rect x="1761.0" y="948.1" width="1" height="1.9" fill="#3f8d5a"/><rect x="1762.0" y="920" width="1" height="2.2" fill="#3f8d5a"/><rect x="1763.0" y="920" width="1" height="4.6" fill="#3f8d5a"/><rect x="1763.0" y="947.4" width="1" height="2.6" fill="#3f8d5a"/><rect x="1764.0" y="920" width="1" height="1.0" fill="#3f8d5a"/><rect x="1765.0" y="920" width="1" height="6.3" fill="#3f8d5a"/><rect x="1765.0" y="946.3" width="1" height="3.7" fill="#3f8d5a"/><rect x="1766.0" y="920" width="1" height="5.8" fill="#3f8d5a"/><rect x="1766.0" y="946.4" width="1" height="3.6" fill="#3f8d5a"/><rect x="1767.0" y="920" width="1" height="4.5" fill="#3f8d5a"/><rect x="1767.0" y="948.1" width="1" height="1.9" fill="#3f8d5a"/><rect x="1768.0" y="920" width="1" height="1.0" fill="#3f8d5a"/><rect x="1769.0" y="920" width="1" height="1.0" fill="#3f8d5a"/><rect x="1770.0" y="920" width="1" height="4.2" fill="#3f8d5a"/><rect x="1770.0" y="948.4" width="1" height="1.6" fill="#3f8d5a"/><rect x="1771.0" y="920" width="1" height="1.6" fill="#3f8d5a"/><rect x="1771.0" y="949.0" width="1" height="1.0" fill="#3f8d5a"/><rect x="1772.0" y="920" width="1" height="4.9" fill="#3f8d5a"/><rect x="1772.0" y="946.5" width="1" height="3.5" fill="#3f8d5a"/><rect x="1773.0" y="920" width="1" height="1.0" fill="#3f8d5a"/><rect x="1774.0" y="920" width="1" height="0.5" fill="#3f8d5a"/><rect x="1775.0" y="920" width="1" height="6.4" fill="#3f8d5a"/><rect x="1775.0" y="947.2" width="1" height="2.8" fill="#3f8d5a"/><rect x="1776.0" y="920" width="1" height="0.6" fill="#3f8d5a"/><rect x="1777.0" y="920" width="1" height="1.0" fill="#3f8d5a"/><rect x="1778.0" y="920" width="1" height="0.7" fill="#3f8d5a"/><rect x="1779.0" y="920" width="1" height="5.7" fill="#3f8d5a"/><rect x="1779.0" y="948.5" width="1" height="1.5" fill="#3f8d5a"/><rect x="1780.0" y="920" width="1" height="1.0" fill="#3f8d5a"/><rect x="1781.0" y="920" width="1" height="1.0" fill="#3f8d5a"/><rect x="1782.0" y="920" width="1" height="6.3" fill="#3f8d5a"/><rect x="1782.0" y="946.9" width="1" height="3.1" fill="#3f8d5a"/><rect x="1783.0" y="920" width="1" height="1.2" fill="#3f8d5a"/><rect x="1784.0" y="920" width="1" height="1.0" fill="#3f8d5a"/><rect x="1785.0" y="920" width="1" height="2.6" fill="#3f8d5a"/><rect x="1785.0" y="949.1" width="1" height="0.9" fill="#3f8d5a"/><rect x="1786.0" y="920" width="1" height="4.8" fill="#3f8d5a"/><rect x="1786.0" y="946.5" width="1" height="3.5" fill="#3f8d5a"/><rect x="1787.0" y="920" width="1" height="1.0" fill="#3f8d5a"/><rect x="1788.0" y="920" width="1" height="4.8" fill="#3f8d5a"/><rect x="1788.0" y="948.4" width="1" height="1.6" fill="#3f8d5a"/><rect x="1789.0" y="920" width="1" height="4.2" fill="#3f8d5a"/><rect x="1789.0" y="948.0" width="1" height="2.0" fill="#3f8d5a"/><rect x="1790.0" y="920" width="1" height="1.0" fill="#3f8d5a"/><rect x="1791.0" y="920" width="1" height="1.9" fill="#3f8d5a"/><rect x="1792.0" y="920" width="1" height="5.5" fill="#3f8d5a"/><rect x="1792.0" y="948.2" width="1" height="1.8" fill="#3f8d5a"/><rect x="1793.0" y="920" width="1" height="4.4" fill="#3f8d5a"/><rect x="1793.0" y="947.5" width="1" height="2.5" fill="#3f8d5a"/><rect x="1794.0" y="920" width="1" height="4.2" fill="#3f8d5a"/><rect x="1795.0" y="920" width="1" height="3.5" fill="#3f8d5a"/><rect x="1795.0" y="948.6" width="1" height="1.4" fill="#3f8d5a"/><rect x="1796.0" y="920" width="1" height="2.4" fill="#3f8d5a"/><rect x="1796.0" y="948.4" width="1" height="1.6" fill="#3f8d5a"/><rect x="1797.0" y="920" width="1" height="1.4" fill="#3f8d5a"/><rect x="1798.0" y="920" width="1" height="3.0" fill="#3f8d5a"/><rect x="1798.0" y="948.1" width="1" height="1.9" fill="#3f8d5a"/><rect x="1799.0" y="920" width="1" height="4.9" fill="#3f8d5a"/><rect x="1799.0" y="946.7" width="1" height="3.3" fill="#3f8d5a"/><rect x="1800.0" y="920" width="1" height="4.0" fill="#3f8d5a"/><rect x="1800.0" y="947.2" width="1" height="2.8" fill="#3f8d5a"/><rect x="1801.0" y="920" width="1" height="2.0" fill="#3f8d5a"/><rect x="1802.0" y="920" width="1" height="3.0" fill="#3f8d5a"/><rect x="1803.0" y="920" width="1" height="3.5" fill="#3f8d5a"/><rect x="1803.0" y="948.4" width="1" height="1.6" fill="#3f8d5a"/><rect x="1804.0" y="920" width="1" height="6.2" fill="#3f8d5a"/><rect x="1804.0" y="947.6" width="1" height="2.4" fill="#3f8d5a"/><rect x="1805.0" y="920" width="1" height="2.8" fill="#3f8d5a"/><rect x="1805.0" y="948.7" width="1" height="1.3" fill="#3f8d5a"/><rect x="1806.0" y="920" width="1" height="1.0" fill="#3f8d5a"/><rect x="1807.0" y="920" width="1" height="1.9" fill="#3f8d5a"/><rect x="1808.0" y="920" width="1" height="5.8" fill="#3f8d5a"/><rect x="1808.0" y="946.5" width="1" height="3.5" fill="#3f8d5a"/><rect x="1809.0" y="920" width="1" height="4.6" fill="#3f8d5a"/><rect x="1809.0" y="949.0" width="1" height="1.0" fill="#3f8d5a"/><rect x="1810.0" y="920" width="1" height="3.0" fill="#3f8d5a"/><rect x="1810.0" y="949.1" width="1" height="0.9" fill="#3f8d5a"/><rect x="1811.0" y="920" width="1" height="5.1" fill="#3f8d5a"/><rect x="1811.0" y="947.2" width="1" height="2.8" fill="#3f8d5a"/><rect x="1812.0" y="920" width="1" height="4.9" fill="#3f8d5a"/><rect x="1812.0" y="947.6" width="1" height="2.4" fill="#3f8d5a"/><rect x="1813.0" y="920" width="1" height="1.4" fill="#3f8d5a"/><rect x="1813.0" y="949.1" width="1" height="0.9" fill="#3f8d5a"/><rect x="1814.0" y="920" width="1" height="2.3" fill="#3f8d5a"/><rect x="1814.0" y="948.8" width="1" height="1.2" fill="#3f8d5a"/><rect x="1815.0" y="920" width="1" height="1.4" fill="#3f8d5a"/><rect x="1816.0" y="920" width="1" height="1.0" fill="#3f8d5a"/><rect x="1817.0" y="920" width="1" height="4.9" fill="#3f8d5a"/><rect x="1817.0" y="948.2" width="1" height="1.8" fill="#3f8d5a"/><rect x="1818.0" y="920" width="1" height="5.0" fill="#3f8d5a"/><rect x="1818.0" y="947.5" width="1" height="2.5" fill="#3f8d5a"/><rect x="1819.0" y="920" width="1" height="1.2" fill="#3f8d5a"/><rect x="1820.0" y="920" width="1" height="1.0" fill="#3f8d5a"/><rect x="1821.0" y="920" width="1" height="4.0" fill="#3f8d5a"/><rect x="1821.0" y="947.9" width="1" height="2.1" fill="#3f8d5a"/><rect x="1822.0" y="920" width="1" height="4.9" fill="#3f8d5a"/><rect x="1822.0" y="947.4" width="1" height="2.6" fill="#3f8d5a"/><rect x="1823.0" y="920" width="1" height="2.7" fill="#3f8d5a"/><rect x="1823.0" y="948.1" width="1" height="1.9" fill="#3f8d5a"/><rect x="1824.0" y="920" width="1" height="3.8" fill="#3f8d5a"/><rect x="1824.0" y="948.8" width="1" height="1.2" fill="#3f8d5a"/><rect x="1825.0" y="920" width="1" height="1.7" fill="#3f8d5a"/><rect x="1825.0" y="949.0" width="1" height="1.0" fill="#3f8d5a"/><rect x="1826.0" y="920" width="1" height="4.4" fill="#3f8d5a"/><rect x="1826.0" y="946.8" width="1" height="3.2" fill="#3f8d5a"/><rect x="1827.0" y="920" width="1" height="5.1" fill="#3f8d5a"/><rect x="1827.0" y="946.6" width="1" height="3.4" fill="#3f8d5a"/><rect x="1828.0" y="920" width="1" height="2.9" fill="#3f8d5a"/><rect x="1829.0" y="920" width="1" height="5.1" fill="#3f8d5a"/><rect x="1829.0" y="947.7" width="1" height="2.3" fill="#3f8d5a"/><rect x="1830.0" y="920" width="1" height="3.2" fill="#3f8d5a"/><rect x="1830.0" y="948.0" width="1" height="2.0" fill="#3f8d5a"/><rect x="1831.0" y="920" width="1" height="6.4" fill="#3f8d5a"/><rect x="1831.0" y="946.8" width="1" height="3.2" fill="#3f8d5a"/><rect x="1832.0" y="920" width="1" height="1.4" fill="#3f8d5a"/><rect x="1833.0" y="920" width="1" height="1.0" fill="#3f8d5a"/><rect x="1834.0" y="920" width="1" height="5.9" fill="#3f8d5a"/><rect x="1834.0" y="946.3" width="1" height="3.7" fill="#3f8d5a"/><rect x="1835.0" y="920" width="1" height="3.3" fill="#3f8d5a"/><rect x="1835.0" y="948.0" width="1" height="2.0" fill="#3f8d5a"/><rect x="1836.0" y="920" width="1" height="1.0" fill="#3f8d5a"/><rect x="1837.0" y="920" width="1" height="1.0" fill="#3f8d5a"/><rect x="1838.0" y="920" width="1" height="6.1" fill="#3f8d5a"/><rect x="1838.0" y="946.0" width="1" height="4.0" fill="#3f8d5a"/><rect x="1839.0" y="920" width="1" height="1.0" fill="#3f8d5a"/><rect x="1840.0" y="920" width="1" height="1.0" fill="#3f8d5a"/><rect x="1841.0" y="920" width="1" height="1.0" fill="#3f8d5a"/><rect x="1842.0" y="920" width="1" height="4.0" fill="#3f8d5a"/><rect x="1842.0" y="947.9" width="1" height="2.1" fill="#3f8d5a"/><rect x="1843.0" y="920" width="1" height="3.2" fill="#3f8d5a"/><rect x="1843.0" y="948.2" width="1" height="1.8" fill="#3f8d5a"/><rect x="1844.0" y="920" width="1" height="2.3" fill="#3f8d5a"/><rect x="1844.0" y="949.0" width="1" height="1.0" fill="#3f8d5a"/><rect x="1845.0" y="920" width="1" height="4.0" fill="#3f8d5a"/><rect x="1845.0" y="948.0" width="1" height="2.0" fill="#3f8d5a"/><rect x="1846.0" y="920" width="1" height="2.1" fill="#3f8d5a"/><rect x="1846.0" y="948.8" width="1" height="1.2" fill="#3f8d5a"/><rect x="1847.0" y="920" width="1" height="5.4" fill="#3f8d5a"/><rect x="1847.0" y="946.6" width="1" height="3.4" fill="#3f8d5a"/><rect x="1848.0" y="920" width="1" height="4.0" fill="#3f8d5a"/><rect x="1848.0" y="948.4" width="1" height="1.6" fill="#3f8d5a"/><rect x="1849.0" y="920" width="1" height="1.0" fill="#3f8d5a"/><rect x="1850.0" y="920" width="1" height="2.7" fill="#3f8d5a"/><rect x="1850.0" y="948.6" width="1" height="1.4" fill="#3f8d5a"/><rect x="1851.0" y="920" width="1" height="5.6" fill="#3f8d5a"/><rect x="1851.0" y="947.0" width="1" height="3.0" fill="#3f8d5a"/><rect x="1852.0" y="920" width="1" height="2.2" fill="#3f8d5a"/><rect x="1852.0" y="948.8" width="1" height="1.2" fill="#3f8d5a"/><rect x="1853.0" y="920" width="1" height="2.8" fill="#3f8d5a"/><rect x="1853.0" y="948.7" width="1" height="1.3" fill="#3f8d5a"/><rect x="1854.0" y="920" width="1" height="5.2" fill="#3f8d5a"/><rect x="1854.0" y="948.1" width="1" height="1.9" fill="#3f8d5a"/><rect x="1855.0" y="920" width="1" height="5.4" fill="#3f8d5a"/><rect x="1855.0" y="946.7" width="1" height="3.3" fill="#3f8d5a"/><rect x="1856.0" y="920" width="1" height="4.7" fill="#3f8d5a"/><rect x="1856.0" y="947.1" width="1" height="2.9" fill="#3f8d5a"/><rect x="1857.0" y="920" width="1" height="1.1" fill="#3f8d5a"/><rect x="1858.0" y="920" width="1" height="6.3" fill="#3f8d5a"/><rect x="1858.0" y="946.5" width="1" height="3.5" fill="#3f8d5a"/><rect x="1859.0" y="920" width="1" height="6.3" fill="#3f8d5a"/><rect x="1859.0" y="945.8" width="1" height="4.2" fill="#3f8d5a"/><rect x="1860.0" y="920" width="1" height="3.0" fill="#3f8d5a"/><rect x="1860.0" y="949.1" width="1" height="0.9" fill="#3f8d5a"/><rect x="1861.0" y="920" width="1" height="5.2" fill="#3f8d5a"/><rect x="1861.0" y="947.2" width="1" height="2.8" fill="#3f8d5a"/><rect x="1862.0" y="920" width="1" height="2.6" fill="#3f8d5a"/><rect x="1862.0" y="948.6" width="1" height="1.4" fill="#3f8d5a"/><rect x="1863.0" y="920" width="1" height="6.0" fill="#3f8d5a"/><rect x="1863.0" y="945.9" width="1" height="4.1" fill="#3f8d5a"/><rect x="1864.0" y="920" width="1" height="1.0" fill="#3f8d5a"/><rect x="1865.0" y="920" width="1" height="2.9" fill="#3f8d5a"/><rect x="1865.0" y="947.9" width="1" height="2.1" fill="#3f8d5a"/><rect x="1866.0" y="920" width="1" height="1.9" fill="#3f8d5a"/><rect x="1867.0" y="920" width="1" height="1.0" fill="#3f8d5a"/><rect x="1868.0" y="920" width="1" height="5.8" fill="#3f8d5a"/><rect x="1868.0" y="946.0" width="1" height="4.0" fill="#3f8d5a"/><rect x="1869.0" y="920" width="1" height="2.1" fill="#3f8d5a"/><rect x="1869.0" y="948.6" width="1" height="1.4" fill="#3f8d5a"/><rect x="1870.0" y="920" width="1" height="1.6" fill="#3f8d5a"/><rect x="1870.0" y="948.9" width="1" height="1.1" fill="#3f8d5a"/><rect x="1871.0" y="920" width="1" height="3.4" fill="#3f8d5a"/><rect x="1871.0" y="948.0" width="1" height="2.0" fill="#3f8d5a"/><rect x="1872.0" y="920" width="1" height="0.8" fill="#3f8d5a"/><rect x="1873.0" y="920" width="1" height="0.7" fill="#3f8d5a"/><rect x="1874.0" y="920" width="1" height="3.0" fill="#3f8d5a"/><rect x="1874.0" y="948.2" width="1" height="1.8" fill="#3f8d5a"/><rect x="1875.0" y="920" width="1" height="2.1" fill="#3f8d5a"/><rect x="1876.0" y="920" width="1" height="4.5" fill="#3f8d5a"/><rect x="1876.0" y="948.1" width="1" height="1.9" fill="#3f8d5a"/><rect x="1877.0" y="920" width="1" height="5.8" fill="#3f8d5a"/><rect x="1877.0" y="945.9" width="1" height="4.1" fill="#3f8d5a"/><rect x="1878.0" y="920" width="1" height="4.4" fill="#3f8d5a"/><rect x="1878.0" y="947.5" width="1" height="2.5" fill="#3f8d5a"/><rect x="1879.0" y="920" width="1" height="0.9" fill="#3f8d5a"/><rect x="1880.0" y="920" width="1" height="4.5" fill="#3f8d5a"/><rect x="1880.0" y="947.6" width="1" height="2.4" fill="#3f8d5a"/><rect x="1881.0" y="920" width="1" height="2.2" fill="#3f8d5a"/><rect x="1881.0" y="949.0" width="1" height="1.0" fill="#3f8d5a"/><rect x="1882.0" y="920" width="1" height="3.2" fill="#3f8d5a"/><rect x="1882.0" y="947.8" width="1" height="2.2" fill="#3f8d5a"/><rect x="1883.0" y="920" width="1" height="6.4" fill="#3f8d5a"/><rect x="1883.0" y="947.5" width="1" height="2.5" fill="#3f8d5a"/><rect x="1884.0" y="920" width="1" height="1.0" fill="#3f8d5a"/><rect x="1885.0" y="920" width="1" height="3.3" fill="#3f8d5a"/><rect x="1886.0" y="920" width="1" height="5.6" fill="#3f8d5a"/><rect x="1886.0" y="947.7" width="1" height="2.3" fill="#3f8d5a"/><rect x="1887.0" y="920" width="1" height="3.8" fill="#3f8d5a"/><rect x="1887.0" y="947.2" width="1" height="2.8" fill="#3f8d5a"/><rect x="1888.0" y="920" width="1" height="3.3" fill="#3f8d5a"/><rect x="1888.0" y="948.7" width="1" height="1.3" fill="#3f8d5a"/><rect x="1889.0" y="920" width="1" height="5.4" fill="#3f8d5a"/><rect x="1889.0" y="946.3" width="1" height="3.7" fill="#3f8d5a"/><rect x="1890.0" y="920" width="1" height="3.3" fill="#3f8d5a"/><rect x="1890.0" y="947.8" width="1" height="2.2" fill="#3f8d5a"/><rect x="1891.0" y="920" width="1" height="2.5" fill="#3f8d5a"/><rect x="1891.0" y="948.4" width="1" height="1.6" fill="#3f8d5a"/><rect x="1892.0" y="920" width="1" height="6.5" fill="#3f8d5a"/><rect x="1892.0" y="948.4" width="1" height="1.6" fill="#3f8d5a"/><rect x="1893.0" y="920" width="1" height="2.2" fill="#3f8d5a"/><rect x="1894.0" y="920" width="1" height="1.4" fill="#3f8d5a"/><rect x="1895.0" y="920" width="1" height="4.0" fill="#3f8d5a"/><rect x="1895.0" y="948.3" width="1" height="1.7" fill="#3f8d5a"/><rect x="1896.0" y="920" width="1" height="4.0" fill="#3f8d5a"/><rect x="1896.0" y="947.1" width="1" height="2.9" fill="#3f8d5a"/><rect x="1897.0" y="920" width="1" height="4.0" fill="#3f8d5a"/><rect x="1897.0" y="947.9" width="1" height="2.1" fill="#3f8d5a"/><rect x="1898.0" y="920" width="1" height="5.8" fill="#3f8d5a"/><rect x="1898.0" y="947.9" width="1" height="2.1" fill="#3f8d5a"/><rect x="1899.0" y="920" width="1" height="1.0" fill="#3f8d5a"/><rect x="1900.0" y="920" width="1" height="4.6" fill="#3f8d5a"/><rect x="1900.0" y="947.4" width="1" height="2.6" fill="#3f8d5a"/><rect x="1901.0" y="920" width="1" height="1.3" fill="#3f8d5a"/><rect x="1901.0" y="949.1" width="1" height="0.9" fill="#3f8d5a"/><rect x="1902.0" y="920" width="1" height="1.6" fill="#3f8d5a"/><rect x="1902.0" y="949.1" width="1" height="0.9" fill="#3f8d5a"/><defs><linearGradient id="lsh" x1="0" x2="1"><stop offset="0" stop-color="#000" stop-opacity="0.35"/><stop offset="1" stop-color="#000" stop-opacity="0"/></linearGradient><linearGradient id="rsh" x1="0" x2="1"><stop offset="0" stop-color="#000" stop-opacity="0"/><stop offset="1" stop-color="#000" stop-opacity="0.3"/></linearGradient></defs><rect x="232" y="592" width="12" height="358" fill="url(#lsh)"/><rect x="1894" y="592" width="16" height="358" fill="url(#rsh)"/></svg>
<div class="t" style="font-size:12px;color:#f6f6f6;left:237.00px;top:901.70px;transform:scaleX(0.955);">mero動画用.wav</div>
<div class="a" style="left:0px;top:950px;width:1920px;height:11px;background:#2c2c31;"></div>
<div class="a" style="left:231px;top:950px;width:1px;height:11px;background:#1a1a1c;"></div>
<svg class="a" style="left:0;top:0" width="1920" height="1009" viewBox="0 0 1920 1009"><rect x="1401" y="950.5" width="67" height="7" rx="3.5" fill="#4e4e55"/><rect x="1911" y="643" width="7.5" height="108" rx="3.7" fill="#5c606a" stroke="#1a1a1c" stroke-width="0.8"/><rect x="1911" y="859" width="7.5" height="32" rx="3.7" fill="#5c606a" stroke="#1a1a1c" stroke-width="0.8"/><rect x="997" y="564" width="4" height="386" fill="#141414"/><path d="M991.3,553 Q991.3,551.3 993,551.3 H1006 Q1007.8,551.3 1007.8,553 V558.8 L999.5,566.2 L991.3,558.8Z" fill="#e84c3d" stroke="#141414" stroke-width="1"/><rect x="998" y="564" width="2.2" height="386" fill="#e84c3d"/></svg>
<div class="a" style="left:0px;top:961px;width:1920px;height:48px;background:#1c1c1e;"></div>
<div class="a" style="left:0px;top:961px;width:1920px;height:1px;background:#0c0c0e;"></div>
<div class="a" style="left:781px;top:962px;width:118px;height:47px;background:#050505;"></div>
<div class="a" style="left:781px;top:1007px;width:118px;height:2px;background:#e0483a;"></div>
<svg class="a" style="left:0;top:0" width="1920" height="1009" viewBox="0 0 1920 1009"><circle cx="55" cy="981.3" r="3.6" fill="#e4e4e4"/><circle cx="49.3" cy="989.5" r="4" fill="#e4e4e4"/><circle cx="60.4" cy="989.5" r="4" fill="#e4e4e4"/><rect x="591.5" y="972.5" width="17" height="11.5" rx="1" fill="#2a2a2c" stroke="#8a8a8c" stroke-width="1"/><line x1="592" y1="970.5" x2="608" y2="970.5" stroke="#8a8a8c"/><line x1="593" y1="968.8" x2="607" y2="968.8" stroke="#5a5a5c"/><path d="M593.5,982 L598,977.5 L601,980 L603.5,977.5 L607,982Z" fill="#8a8a8c"/><path d="M713,970 L715,985 M719,969.5 L730,969.5 L728,984 L716.5,984" fill="none" stroke="#8a8a8c" stroke-width="1.2"/><path d="M704,974 H712 M706,977.5 H713 M708,981 H714" stroke="#8a8a8c" stroke-width="1"/><rect x="829.5" y="971.5" width="8" height="2.6" rx="1.2" fill="#3b88d8"/><rect x="841" y="971.5" width="8" height="2.6" rx="1.2" fill="#3b88d8"/><rect x="829.5" y="975.8" width="8" height="2.6" rx="1.2" fill="#3b88d8"/><rect x="841" y="975.8" width="8" height="2.6" rx="1.2" fill="#3b88d8"/><rect x="829.5" y="980.5" width="19.5" height="2.8" rx="1.2" fill="#3da05a"/><rect x="838.7" y="969.5" width="1.4" height="15.5" fill="#e0483a"/><circle cx="839.4" cy="969" r="1.3" fill="#e0483a"/><line x1="956" y1="984" x2="964.5" y2="973" stroke="#8a8a8c" stroke-width="2.4" stroke-linecap="round"/><line x1="956" y1="984" x2="964.5" y2="973" stroke="#1c1c1e" stroke-width="0.8"/><path d="M966,967.2 L966.69,968.81 L968.3,969.5 L966.69,970.19 L966,971.8 L965.31,970.19 L963.7,969.5 L965.31,968.81Z" fill="#8a8a8c"/><path d="M952.5,969.7 L952.89,970.61 L953.8,971 L952.89,971.39 L952.5,972.3 L952.11,971.39 L951.2,971 L952.11,970.61Z" fill="#8a8a8c"/><path d="M957,973.0 L957.45,974.05 L958.5,974.5 L957.45,974.95 L957,976.0 L956.55,974.95 L955.5,974.5 L956.55,974.05Z" fill="#8a8a8c"/><path d="M950,975 L950.3,975.7 L951,976 L950.3,976.3 L950,977 L949.7,976.3 L949,976 L949.7,975.7Z" fill="#8a8a8c"/><circle cx="1079.3" cy="970.0" r="1.5" fill="#8a8a8c" fill-opacity="0.35"/><circle cx="1083.8" cy="971.8" r="1.5" fill="#8a8a8c" fill-opacity="0.5"/><circle cx="1085.6" cy="976.3" r="1.5" fill="#8a8a8c" fill-opacity="0.6"/><circle cx="1083.8" cy="980.8" r="1.5" fill="#8a8a8c" fill-opacity="0.7"/><circle cx="1079.3" cy="982.6" r="1.5" fill="#8a8a8c" fill-opacity="0.8"/><circle cx="1074.8" cy="980.8" r="1.5" fill="#8a8a8c" fill-opacity="0.9"/><circle cx="1073.0" cy="976.3" r="1.5" fill="#8a8a8c" fill-opacity="1.0"/><circle cx="1074.8" cy="971.8" r="1.5" fill="#8a8a8c" fill-opacity="0.95"/><circle cx="1079.3" cy="976.3" r="1.6" fill="#8a8a8c"/><path d="M1195.5,982.5 V971 L1204.5,969 V980.5" fill="none" stroke="#8a8a8c" stroke-width="1.5"/><path d="M1195.5,971 L1204.5,969 V971.5 L1195.5,973.5Z" fill="#8a8a8c"/><ellipse cx="1193.8" cy="982.7" rx="2.3" ry="1.9" fill="#8a8a8c"/><ellipse cx="1202.8" cy="980.8" rx="2.3" ry="1.9" fill="#8a8a8c"/><path d="M1327,968 Q1322,969 1317,975.5 L1314,975 L1311.5,978 L1315,978.8 L1318.5,982.5 L1319,986 L1322,983.5 L1321.5,980.5 Q1327.5,975.5 1327,968Z" fill="none" stroke="#8a8a8c" stroke-width="1.1"/><circle cx="1322" cy="973.5" r="1.6" fill="none" stroke="#8a8a8c" stroke-width="1"/><path d="M1829.5,985.5 L1836.6,979 L1843.7,985.5 H1841.5 V991.5 H1838.3 V987.5 H1835 V991.5 H1831.8 V985.5Z" fill="#8a8a8c"/><rect x="1883.9" y="978.2" width="3.2" height="4" fill="#8a8a8c" transform="rotate(0 1885.5 985.7)"/><rect x="1883.9" y="978.2" width="3.2" height="4" fill="#8a8a8c" transform="rotate(45 1885.5 985.7)"/><rect x="1883.9" y="978.2" width="3.2" height="4" fill="#8a8a8c" transform="rotate(90 1885.5 985.7)"/><rect x="1883.9" y="978.2" width="3.2" height="4" fill="#8a8a8c" transform="rotate(135 1885.5 985.7)"/><rect x="1883.9" y="978.2" width="3.2" height="4" fill="#8a8a8c" transform="rotate(180 1885.5 985.7)"/><rect x="1883.9" y="978.2" width="3.2" height="4" fill="#8a8a8c" transform="rotate(225 1885.5 985.7)"/><rect x="1883.9" y="978.2" width="3.2" height="4" fill="#8a8a8c" transform="rotate(270 1885.5 985.7)"/><rect x="1883.9" y="978.2" width="3.2" height="4" fill="#8a8a8c" transform="rotate(315 1885.5 985.7)"/><circle cx="1885.5" cy="985.7" r="5" fill="none" stroke="#8a8a8c" stroke-width="2.6"/></svg>
<div class="t" style="font-size:13px;color:#e2e2e2;font-weight:bold;left:71.50px;top:979.30px;">DaVinci Resolve 19</div>
<div class="t" style="font-size:13px;color:#9a9a9c;left:581.26px;top:989.00px;transform:scaleX(0.740);">メディア</div>
<div class="t" style="font-size:13px;color:#9a9a9c;left:706.23px;top:989.00px;transform:scaleX(0.771);">カット</div>
<div class="t" style="font-size:13px;color:#f4f4f4;left:817.28px;top:989.00px;transform:scaleX(0.721);">エディット</div>
<div class="t" style="font-size:13px;color:#9a9a9c;left:938.95px;top:989.00px;transform:scaleX(1.053);">Fusion</div>
<div class="t" style="font-size:13px;color:#9a9a9c;left:1064.22px;top:990.00px;transform:scaleX(0.784);">カラー</div>
<div class="t" style="font-size:13px;color:#9a9a9c;left:1174.93px;top:989.00px;transform:scaleX(1.067);">Fairlight</div>
<div class="t" style="font-size:13px;color:#9a9a9c;left:1299.22px;top:989.00px;transform:scaleX(0.780);">デリバー</div>
<div class="a" style="left:1500px;top:80px;width:420px;height:420px;background:#232328;"></div>
<div class="a" style="left:1499px;top:80px;width:1px;height:420px;background:#131315;"></div>
<svg class="a" style="left:0;top:0" width="1920" height="1009" viewBox="0 0 1920 1009"><defs><linearGradient id="vg" x1="0" x2="1"><stop offset="0" stop-color="#1a1a1c"/><stop offset="0.5" stop-color="#3c3c40"/><stop offset="1" stop-color="#1a1a1c"/></linearGradient></defs><rect x="1534" y="92.2" width="19" height="13.6" rx="1" fill="url(#vg)" stroke="#f4f4f4" stroke-width="1.9"/><rect x="1536" y="94" width="2" height="2" fill="#f4f4f4"/><rect x="1549" y="94" width="2" height="2" fill="#f4f4f4"/><rect x="1536" y="97.9" width="2" height="2" fill="#f4f4f4"/><rect x="1549" y="97.9" width="2" height="2" fill="#f4f4f4"/><rect x="1536" y="101.8" width="2" height="2" fill="#f4f4f4"/><rect x="1549" y="101.8" width="2" height="2" fill="#f4f4f4"/><path d="M1602.5,105 V93.5 L1613.5,91.5 V103.5" fill="none" stroke="#4e4e52" stroke-width="2"/><ellipse cx="1600.5" cy="105.5" rx="3" ry="2.5" fill="#4e4e52"/><ellipse cx="1611.3" cy="103.6" rx="3" ry="2.5" fill="#4e4e52"/><line x1="1663.5" y1="106.5" x2="1673.5" y2="94.5" stroke="#4e4e52" stroke-width="3" stroke-linecap="round"/><line x1="1663.5" y1="106.5" x2="1673.5" y2="94.5" stroke="#232328" stroke-width="1"/><path d="M1676.8,89.39999999999999 Q1676.9848,91.4152 1679.0,91.6 Q1676.9848,91.78479999999999 1676.8,93.8 Q1676.6152,91.78479999999999 1674.6,91.6 Q1676.6152,91.4152 1676.8,89.39999999999999Z" fill="#4e4e52"/><path d="M1668.3,90.7 Q1668.4092,91.8908 1669.6,92 Q1668.4092,92.1092 1668.3,93.3 Q1668.1907999999999,92.1092 1667.0,92 Q1668.1907999999999,91.8908 1668.3,90.7Z" fill="#4e4e52"/><path d="M1679.5,96.9 Q1679.6512,98.5488 1681.3,98.7 Q1679.6512,98.8512 1679.5,100.5 Q1679.3488,98.8512 1677.7,98.7 Q1679.3488,98.5488 1679.5,96.9Z" fill="#4e4e52"/><path d="M1676,102.0 Q1676.1092,103.1908 1677.3,103.3 Q1676.1092,103.4092 1676,104.6 Q1675.8908,103.4092 1674.7,103.3 Q1675.8908,103.1908 1676,102.0Z" fill="#4e4e52"/><rect x="1731.8" y="91.7" width="19.5" height="14.6" fill="none" stroke="#4e4e52" stroke-width="1.1"/><path d="M1733.5,93.5 H1749.5 L1741.5,99 L1749.5,104.5 H1733.5 L1741.5,99Z" fill="#39393d"/><rect x="1801.5" y="91.7" width="19.5" height="14.6" fill="#28282c" stroke="#4e4e52" stroke-width="1.1"/><circle cx="1806" cy="95.9" r="1.1" fill="#4e4e52"/><polyline points="1803.5,102 1808,100 1811.5,101.5 1815.5,98 1820,100.8" fill="none" stroke="#4e4e52" stroke-width="0.9"/><rect x="1864.5" y="92.8" width="3.3" height="3.3" fill="none" stroke="#9a9a9c" stroke-width="1"/><rect x="1864.5" y="97.5" width="3.3" height="3.3" fill="none" stroke="#9a9a9c" stroke-width="1"/><rect x="1864.5" y="102.3" width="3.3" height="3.3" fill="none" stroke="#9a9a9c" stroke-width="1"/><path d="M1870,93 L1874,91.5 L1880,94 V103.5 L1876,105.5 L1870,103Z" fill="#3c3c40" stroke="#9a9a9c" stroke-width="0.9"/><path d="M1879,96 L1886.3,94.5 V104 L1881,106.5 L1879,104.5Z" fill="#2c2c30" stroke="#9a9a9c" stroke-width="1"/><circle cx="1882.6" cy="100.6" r="2.3" fill="none" stroke="#9a9a9c" stroke-width="0.9"/><rect x="1512" y="130" width="64" height="2.2" fill="#e0483a"/><rect x="1500" y="132.6" width="420" height="1.2" fill="#141416"/><rect x="1510.5" y="142.5" width="399" height="22" rx="2" fill="#1d1d21" stroke="#111113" stroke-width="1"/><rect x="1511" y="143" width="198" height="21" rx="1.5" fill="#161618"/><line x1="1709.5" y1="143" x2="1709.5" y2="164" stroke="#2c2c30"/><rect x="1500" y="174.5" width="420" height="1.5" fill="#141416"/><rect x="1515" y="184" width="24" height="14" rx="7" fill="#161618"/><circle cx="1532" cy="191" r="4.2" fill="#e0483a"/><line x1="1874.5" y1="188" x2="1869.2" y2="198" stroke="#8a8a8c" stroke-width="3.6" stroke-linecap="round"/><line x1="1871.8" y1="193" x2="1869.2" y2="198" stroke="#232328" stroke-width="1.4" stroke-linecap="round"/><path d="M1857.8,194.5 H1864.5 M1862,192 L1864.8,194.5 L1862,197.3" fill="none" stroke="#8a8a8c" stroke-width="1.1"/><circle cx="1860.8" cy="185.8" r="1.4" fill="#505054"/><circle cx="1870.9" cy="182.8" r="1.4" fill="#505054"/><circle cx="1866.9" cy="188.7" r="1.4" fill="#505054"/><path d="M1888.2,186.4 A6.2,6.2 0 1 1 1887.5,193" fill="none" stroke="#8a8a8c" stroke-width="1.2"/><path d="M1886,185.2 L1886.2,189.8 L1890.6,189.2Z" fill="#8a8a8c"/><path d="M1893.6,187.6 V193.4 M1890.7,190.5 H1896.5" stroke="#8a8a8c" stroke-width="1.1"/><rect x="1500" y="206.5" width="410" height="1.3" fill="#141416"/><rect x="1530" y="235" width="60" height="2" fill="#e0483a"/><rect x="1500" y="237" width="410" height="1.2" fill="#141416"/><polyline points="1519,250 1523.5,255.8 1528,250" fill="none" stroke="#b4b4b6" stroke-width="1.4"/><rect x="1520.5" y="269" width="339" height="143.5" rx="2" fill="#1f1f21" stroke="#111112" stroke-width="1"/><path d="M1886,274.8 L1891,279.8 L1886,284.8 L1881,279.8Z" fill="#a4a4a6"/><rect x="1657.5" y="418.5" width="202.5" height="19" rx="2" fill="#1a1a1c" stroke="#101012" stroke-width="1"/><rect x="1657.5" y="443.5" width="202.5" height="19" rx="2" fill="#1a1a1c" stroke="#101012" stroke-width="1"/><polyline points="1843,425.5 1847.8,430.5 1852.6,425.5" fill="none" stroke="#b4b4b6" stroke-width="1.3"/><polyline points="1843,450.5 1847.8,455.5 1852.6,450.5" fill="none" stroke="#b4b4b6" stroke-width="1.3"/><path d="M1886,423.5 L1891,428.5 L1886,433.5 L1881,428.5Z" fill="#a4a4a6"/><rect x="1658" y="468.8" width="72.5" height="18.5" rx="2" fill="#7b6664" stroke="#111" stroke-width="0.8"/><line x1="1747" y1="486" x2="1756" y2="477" stroke="#8a8a8c" stroke-width="1.8"/><path d="M1754.5,474.5 L1757.8,471.5 L1761,474.8 L1758,478Z" fill="#8a8a8c"/><path d="M1886,473.3 L1891,478.3 L1886,483.3 L1881,478.3Z" fill="#a4a4a6"/><rect x="1805.5" y="493" width="54" height="10" rx="2" fill="#1a1a1c" stroke="#101012"/><circle cx="1687.5" cy="497.5" r="4" fill="#8a8a8c"/><defs><linearGradient id="fade" x1="0" y1="0" x2="0" y2="1"><stop offset="0" stop-color="#232328" stop-opacity="0"/><stop offset="1" stop-color="#232328" stop-opacity="1"/></linearGradient></defs><rect x="1500" y="488" width="410" height="12" fill="url(#fade)"/><rect x="1910" y="176" width="10" height="324" fill="#26262b"/><rect x="1911" y="177.5" width="7.5" height="132.5" rx="3.7" fill="#5c606a" stroke="#18181a" stroke-width="0.8"/></svg>
<div class="t" style="font-size:11px;color:#f2f2f2;font-weight:bold;left:1529.83px;top:116.20px;transform:scaleX(0.833);">ビデオ</div>
<div class="t" style="font-size:11px;color:#5c5c60;left:1586.94px;top:115.20px;transform:scaleX(0.757);">オーディオ</div>
<div class="t" style="font-size:11px;color:#5c5c60;left:1653.10px;top:115.20px;transform:scaleX(0.702);">エフェクト</div>
<div class="t" style="font-size:11px;color:#5c5c60;left:1712.50px;top:115.20px;transform:scaleX(0.750);">トランジション</div>
<div class="t" style="font-size:11px;color:#5c5c60;left:1795.01px;top:115.20px;transform:scaleX(0.788);">イメージ</div>
<div class="t" style="font-size:11px;color:#c6c6c8;font-weight:bold;left:1860.31px;top:115.20px;transform:scaleX(0.691);">ファイル</div>
<div class="t" style="font-size:12px;color:#f4f4f4;font-weight:bold;left:1590.19px;top:147.70px;transform:scaleX(0.809);">タイトル</div>
<div class="t" style="font-size:12px;color:#c4c4c6;left:1797.60px;top:149.40px;transform:scaleX(1.017);">設定</div>
<div class="t" style="font-size:14px;color:#f4f4f4;font-weight:bold;left:1549.00px;top:184.60px;transform:scaleX(0.944);">Text+</div>
<div class="t" style="font-size:11px;color:#eeeeee;font-weight:bold;left:1543.70px;top:217.00px;transform:scaleX(0.793);">テキスト</div>
<div class="t" style="font-size:11px;color:#a6a6a8;left:1599.23px;top:216.00px;transform:scaleX(0.769);">レイアウト</div>
<div class="t" style="font-size:11px;color:#a6a6a8;left:1669.60px;top:217.00px;transform:scaleX(0.927);">変形</div>
<div class="t" style="font-size:11px;color:#a6a6a8;left:1711.97px;top:216.00px;transform:scaleX(0.728);">シェーディング</div>
<div class="t" style="font-size:11px;color:#a6a6a8;left:1782.19px;top:216.00px;transform:scaleX(0.810);">イメージ</div>
<div class="t" style="font-size:11px;color:#a6a6a8;left:1849.70px;top:217.00px;">設定</div>
<div class="t" style="font-size:11px;color:#c8c8ca;left:1535.12px;top:247.00px;transform:scaleX(0.878);">テキスト</div>
<div class="t" style="font-size:12px;color:#e8e8e8;left:1523.30px;top:274.80px;transform:scaleX(0.957);">6</div>
<div class="t" style="font-size:11px;color:#bdbdbf;left:1615.76px;top:422.00px;transform:scaleX(0.744);">フォント</div>
<div class="t" style="font-size:12px;color:#e6e6e6;left:1665.00px;top:422.50px;transform:scaleX(0.941);">GL-MahjongTile</div>
<div class="t" style="font-size:12px;color:#e6e6e6;left:1664.05px;top:447.50px;transform:scaleX(0.951);">Regular</div>
<div class="t" style="font-size:11px;color:#bdbdbf;left:1621.19px;top:472.00px;transform:scaleX(0.806);">カラー</div></body></html>
